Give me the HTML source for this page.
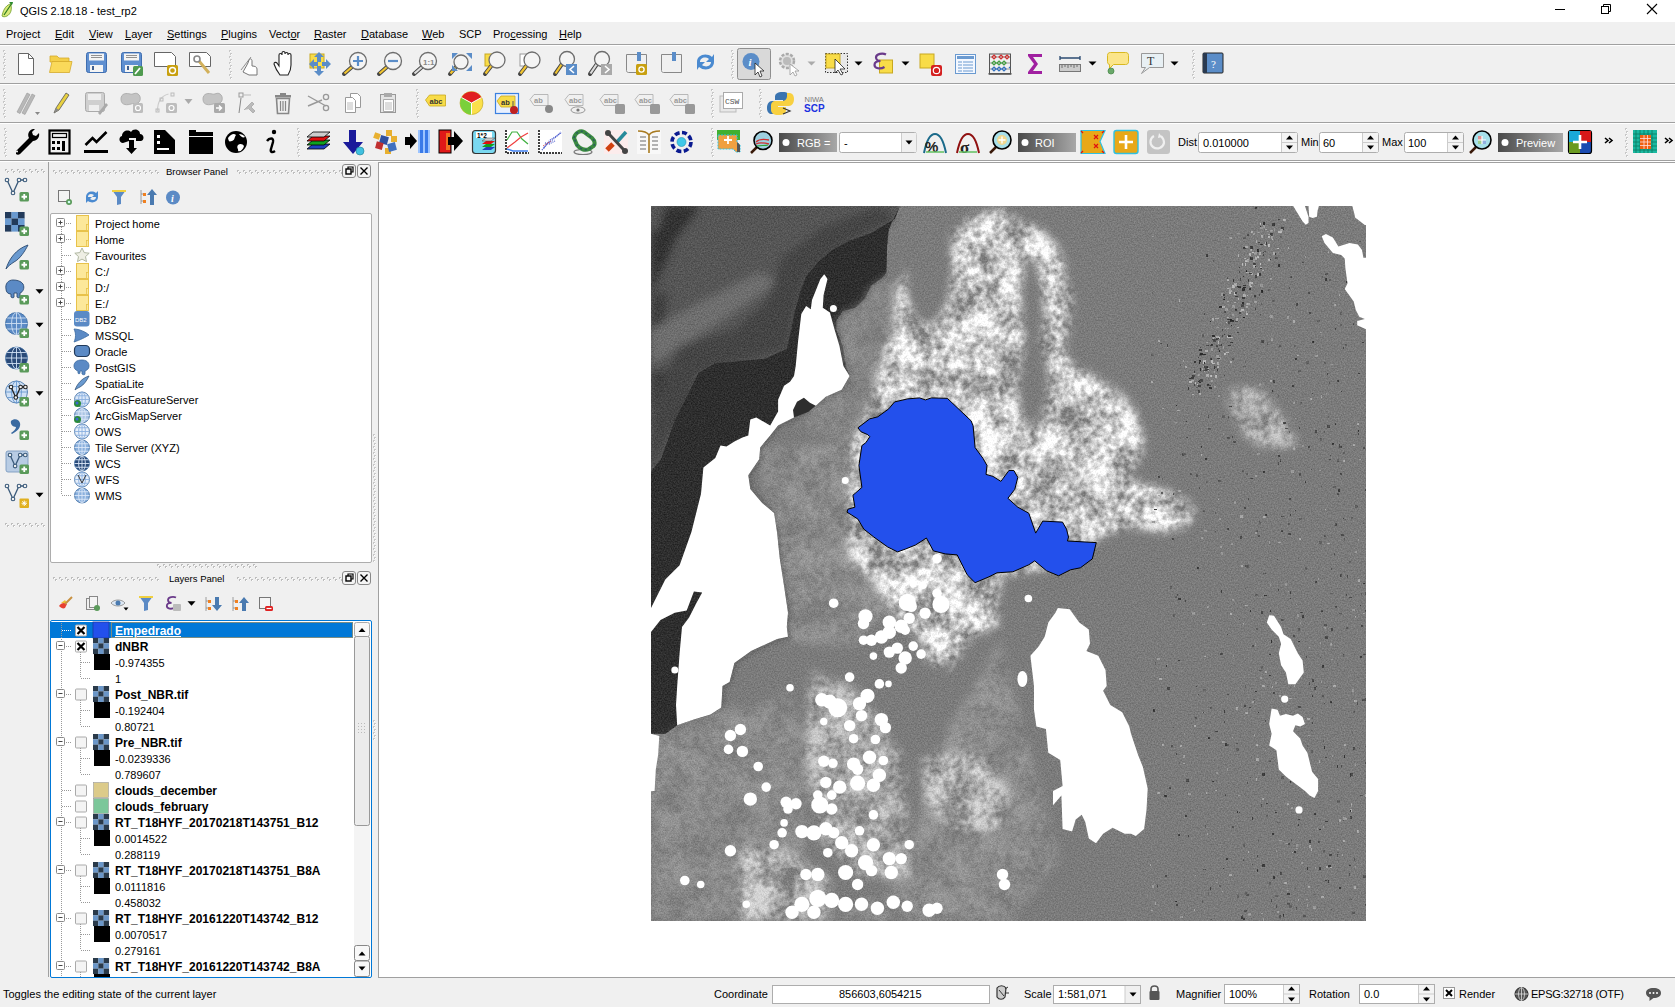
<!DOCTYPE html><html><head><meta charset="utf-8"><style>
*{margin:0;padding:0;box-sizing:border-box}
html,body{width:1675px;height:1007px;overflow:hidden;background:#f0f0f0;font-family:"Liberation Sans",sans-serif;font-size:11px;color:#000}
.a{position:absolute}
.t{position:absolute;white-space:nowrap;line-height:13px}
.b{font-weight:bold}
.hl{position:absolute;left:0;width:1675px;height:1px;background:#a0a0a0}
.box{position:absolute;background:#fff;border:1px solid #adadad;border-radius:2px}
u{text-decoration:none;border-bottom:1px solid #000;line-height:10px;display:inline-block}
</style></head><body>
<div class="a" style="left:0;top:0;width:1675px;height:22px;background:#fff"></div>
<div class="t" style="left:20px;top:5px;font-size:11px">QGIS 2.18.18 - test_rp2</div>
<div class="t" style="left:6px;top:28px">Pro<span style="text-decoration:underline;text-underline-offset:1px;text-decoration-skip-ink:none">j</span>ect</div>
<div class="t" style="left:55px;top:28px"><span style="text-decoration:underline;text-underline-offset:1px;text-decoration-skip-ink:none">E</span>dit</div>
<div class="t" style="left:89px;top:28px"><span style="text-decoration:underline;text-underline-offset:1px;text-decoration-skip-ink:none">V</span>iew</div>
<div class="t" style="left:125px;top:28px"><span style="text-decoration:underline;text-underline-offset:1px;text-decoration-skip-ink:none">L</span>ayer</div>
<div class="t" style="left:167px;top:28px"><span style="text-decoration:underline;text-underline-offset:1px;text-decoration-skip-ink:none">S</span>ettings</div>
<div class="t" style="left:221px;top:28px"><span style="text-decoration:underline;text-underline-offset:1px;text-decoration-skip-ink:none">P</span>lugins</div>
<div class="t" style="left:269px;top:28px">Vect<span style="text-decoration:underline;text-underline-offset:1px;text-decoration-skip-ink:none">o</span>r</div>
<div class="t" style="left:314px;top:28px"><span style="text-decoration:underline;text-underline-offset:1px;text-decoration-skip-ink:none">R</span>aster</div>
<div class="t" style="left:361px;top:28px"><span style="text-decoration:underline;text-underline-offset:1px;text-decoration-skip-ink:none">D</span>atabase</div>
<div class="t" style="left:422px;top:28px"><span style="text-decoration:underline;text-underline-offset:1px;text-decoration-skip-ink:none">W</span>eb</div>
<div class="t" style="left:459px;top:28px">SCP</div>
<div class="t" style="left:493px;top:28px">Pro<span style="text-decoration:underline;text-underline-offset:1px;text-decoration-skip-ink:none">c</span>essing</div>
<div class="t" style="left:559px;top:28px"><span style="text-decoration:underline;text-underline-offset:1px;text-decoration-skip-ink:none">H</span>elp</div>
<div class="hl" style="top:44px"></div><div class="a" style="left:0;top:45px;width:1675px;height:1px;background:#fff"></div>
<div class="hl" style="top:83px"></div><div class="a" style="left:0;top:84px;width:1675px;height:1px;background:#fff"></div>
<div class="hl" style="top:122px"></div><div class="a" style="left:0;top:123px;width:1675px;height:1px;background:#fff"></div>
<div class="hl" style="top:160px"></div><div class="a" style="left:0;top:161px;width:1675px;height:1px;background:#fff"></div>
<div class="a" style="left:48px;top:162px;width:1px;height:815px;background:#a0a0a0"></div>
<div class="a" style="left:378px;top:162px;width:1297px;height:816px;background:#fff;border-left:1px solid #a0a0a0;border-top:1px solid #a0a0a0;border-bottom:1px solid #a0a0a0"></div>
<svg class="a" style="left:0;top:0" width="1675" height="162"><rect x="3" y="50" width="2" height="2" fill="#c8c8c8"/><rect x="4" y="51" width="1" height="1" fill="#fff"/><rect x="4" y="53" width="2" height="2" fill="#c8c8c8"/><rect x="5" y="54" width="1" height="1" fill="#fff"/><rect x="3" y="56" width="2" height="2" fill="#c8c8c8"/><rect x="4" y="57" width="1" height="1" fill="#fff"/><rect x="4" y="59" width="2" height="2" fill="#c8c8c8"/><rect x="5" y="60" width="1" height="1" fill="#fff"/><rect x="3" y="62" width="2" height="2" fill="#c8c8c8"/><rect x="4" y="63" width="1" height="1" fill="#fff"/><rect x="4" y="65" width="2" height="2" fill="#c8c8c8"/><rect x="5" y="66" width="1" height="1" fill="#fff"/><rect x="3" y="68" width="2" height="2" fill="#c8c8c8"/><rect x="4" y="69" width="1" height="1" fill="#fff"/><rect x="4" y="71" width="2" height="2" fill="#c8c8c8"/><rect x="5" y="72" width="1" height="1" fill="#fff"/><rect x="3" y="74" width="2" height="2" fill="#c8c8c8"/><rect x="4" y="75" width="1" height="1" fill="#fff"/><rect x="4" y="77" width="2" height="2" fill="#c8c8c8"/><rect x="5" y="78" width="1" height="1" fill="#fff"/><path d="M18.5,53.5h10l5,5v16h-15z" fill="#fff" stroke="#666"/><path d="M28.5,53.5v5h5" fill="none" stroke="#666"/><path d="M50,56h7l2,2h10v4h-19z" fill="#f4cf48" stroke="#d4a92b" stroke-width="0.8"/><path d="M49.5,72.5l2.5,-11h20l-2.5,11z" fill="#fad95a" stroke="#d4a92b" stroke-width="0.8"/><rect x="86.5" y="52.5" width="20" height="20" rx="2" fill="#5f8fd0" stroke="#3f6eb0"/><rect x="89" y="53.5" width="15" height="7" fill="#f4f4f4"/><path d="M91,55.5h11M91,57.5h11" stroke="#777" stroke-width="0.8"/><rect x="90" y="65" width="13" height="7" fill="#f4f4f4"/><rect x="92" y="66" width="2" height="4" fill="#3f5f90"/><rect x="121.5" y="52.5" width="20" height="20" rx="2" fill="#5f8fd0" stroke="#3f6eb0"/><rect x="124" y="53.5" width="15" height="7" fill="#f4f4f4"/><path d="M126,55.5h11M126,57.5h11" stroke="#777" stroke-width="0.8"/><rect x="125" y="65" width="13" height="7" fill="#f4f4f4"/><rect x="127" y="66" width="2" height="4" fill="#3f5f90"/><rect x="133" y="66" width="10" height="10" rx="1.5" fill="#4f9a4f"/><path d="M135,74l5,-6" stroke="#fff" stroke-width="1.8"/><path d="M154.5,52.5h17l4,4v10h-21z" fill="#fff" stroke="#666"/><rect x="167" y="65" width="11" height="11" rx="1.5" fill="#c8a010"/><circle cx="172.5" cy="70.5" r="3" fill="none" stroke="#fff" stroke-width="1.4"/><path d="M189.5,52.5h17l4,4v10h-21z" fill="#fff" stroke="#666"/><path d="M199,61l10,12" stroke="#d2b05a" stroke-width="3"/><circle cx="197" cy="59" r="3" fill="none" stroke="#888" stroke-width="1.6"/><rect x="229" y="50" width="2" height="2" fill="#c8c8c8"/><rect x="230" y="51" width="1" height="1" fill="#fff"/><rect x="230" y="53" width="2" height="2" fill="#c8c8c8"/><rect x="231" y="54" width="1" height="1" fill="#fff"/><rect x="229" y="56" width="2" height="2" fill="#c8c8c8"/><rect x="230" y="57" width="1" height="1" fill="#fff"/><rect x="230" y="59" width="2" height="2" fill="#c8c8c8"/><rect x="231" y="60" width="1" height="1" fill="#fff"/><rect x="229" y="62" width="2" height="2" fill="#c8c8c8"/><rect x="230" y="63" width="1" height="1" fill="#fff"/><rect x="230" y="65" width="2" height="2" fill="#c8c8c8"/><rect x="231" y="66" width="1" height="1" fill="#fff"/><rect x="229" y="68" width="2" height="2" fill="#c8c8c8"/><rect x="230" y="69" width="1" height="1" fill="#fff"/><rect x="230" y="71" width="2" height="2" fill="#c8c8c8"/><rect x="231" y="72" width="1" height="1" fill="#fff"/><rect x="229" y="74" width="2" height="2" fill="#c8c8c8"/><rect x="230" y="75" width="1" height="1" fill="#fff"/><rect x="230" y="77" width="2" height="2" fill="#c8c8c8"/><rect x="231" y="78" width="1" height="1" fill="#fff"/><path d="M243,72c2,-4 5,-8 6,-12c1,-2 3,-1 3,1v5c3,0 5,1 5,3v6h-8z" fill="#fff" stroke="#777" stroke-width="1"/><path d="M241,70l10,-13" stroke="#777" stroke-width="0.8"/><path d="M280,75c-3,-4 -5,-8 -6,-11c0,-2 2,-2 3,-1l2,3v-11c0,-2 3,-2 3,0v-2c0,-2 3,-2 3,0v1c0,-2 3,-2 3,0v1c0,-2 3,-2 3,0v10c0,4 -1,7 -3,10z" fill="#fff" stroke="#222" stroke-width="1.1"/><rect x="310" y="54" width="14" height="14" fill="#f8dc48" stroke="#c8a820"/><path d="M319,52l5,5h-3v5h-4v-5h-3z M319,76l5,-5h-3v-5h-4v5h-3z M309,64l5,-5v3h4v4h-4v3z M331,64l-5,-5v3h-4v4h4v3z" fill="#5b8dc8"/><line x1="344" y1="74" x2="353" y2="66" stroke="#444" stroke-width="4" stroke-linecap="round"/><line x1="344.5" y1="73.5" x2="352.5" y2="66.5" stroke="#f2c531" stroke-width="2.2"/><circle cx="358" cy="61" r="8.5" fill="#f4f4f4" stroke="#6d6d6d" stroke-width="1.3"/><path d="M353,61h10M358,56v10" stroke="#5b8dc8" stroke-width="2.2"/><line x1="379" y1="74" x2="388" y2="66" stroke="#444" stroke-width="4" stroke-linecap="round"/><line x1="379.5" y1="73.5" x2="387.5" y2="66.5" stroke="#f2c531" stroke-width="2.2"/><circle cx="393" cy="61" r="8.5" fill="#f4f4f4" stroke="#6d6d6d" stroke-width="1.3"/><path d="M388,61h10" stroke="#5b8dc8" stroke-width="2.2"/><line x1="414" y1="74" x2="423" y2="66" stroke="#444" stroke-width="4" stroke-linecap="round"/><line x1="414.5" y1="73.5" x2="422.5" y2="66.5" stroke="#ddd" stroke-width="2.2"/><circle cx="428" cy="61" r="8.5" fill="#f4f4f4" stroke="#6d6d6d" stroke-width="1.3"/><text x="423" y="64.5" font-size="8" font-weight="bold" fill="#888" font-family="Liberation Sans">1:1</text><line x1="450" y1="74" x2="456" y2="67" stroke="#444" stroke-width="4" stroke-linecap="round"/><line x1="450.5" y1="73.5" x2="455.5" y2="67.5" stroke="#f2c531" stroke-width="2.2"/><circle cx="461" cy="62" r="7" fill="#f4f4f4" stroke="#6d6d6d" stroke-width="1.3"/><path d="M452,53h6l-6,6zM472,53h-6l6,6zM472,71h-6l6,-6zM452,71h6l-6,-6z" fill="#5b8dc8"/><rect x="485" y="54" width="8" height="12" fill="#f8dc48" stroke="#c8a820"/><line x1="485" y1="74" x2="492" y2="65" stroke="#444" stroke-width="4" stroke-linecap="round"/><line x1="485.5" y1="73.5" x2="491.5" y2="65.5" stroke="#f2c531" stroke-width="2.2"/><circle cx="497" cy="60" r="8" fill="#f4f4f4" stroke="#6d6d6d" stroke-width="1.3"/><rect x="520" y="54" width="8" height="12" fill="#fff" stroke="#999"/><line x1="520" y1="74" x2="527" y2="65" stroke="#444" stroke-width="4" stroke-linecap="round"/><line x1="520.5" y1="73.5" x2="526.5" y2="65.5" stroke="#f2c531" stroke-width="2.2"/><circle cx="532" cy="60" r="8" fill="#f4f4f4" stroke="#6d6d6d" stroke-width="1.3"/><line x1="555" y1="74" x2="562" y2="64" stroke="#444" stroke-width="4" stroke-linecap="round"/><line x1="555.5" y1="73.5" x2="561.5" y2="64.5" stroke="#f2c531" stroke-width="2.2"/><circle cx="567" cy="59" r="7.5" fill="#f4f4f4" stroke="#6d6d6d" stroke-width="1.3"/><rect x="566" y="64" width="11" height="11" fill="#5b8dc8"/><path d="M574,66l-4,3.5l4,3.5" stroke="#fff" stroke-width="1.6" fill="none"/><line x1="590" y1="74" x2="597" y2="64" stroke="#444" stroke-width="4" stroke-linecap="round"/><line x1="590.5" y1="73.5" x2="596.5" y2="64.5" stroke="#ddd" stroke-width="2.2"/><circle cx="602" cy="59" r="7.5" fill="#f4f4f4" stroke="#6d6d6d" stroke-width="1.3"/><rect x="601" y="64" width="11" height="11" fill="#aaa"/><path d="M605,66l4,3.5l-4,3.5" stroke="#fff" stroke-width="1.6" fill="none"/><path d="M626.5,54.5h20v18h-18c-2,0 -2,-2 -2,-2z" fill="#f0f0f0" stroke="#888"/><rect x="637" y="52" width="4" height="9" fill="#5b8dc8"/><rect x="636" y="64" width="11" height="11" rx="1.5" fill="#c8a010"/><circle cx="641.5" cy="69.5" r="2.6" fill="none" stroke="#fff" stroke-width="1.3"/><path d="M661.5,54.5h20v18h-18c-2,0 -2,-2 -2,-2z" fill="#f0f0f0" stroke="#888"/><rect x="672" y="52" width="4" height="9" fill="#5b8dc8"/><path d="M697,62c0,-7 9,-10 15,-5l2,-3v8h-8l3,-3c-4,-3 -9,-1 -9,3z M714,62c0,7 -9,10 -15,5l-2,3v-8h8l-3,3c4,3 9,1 9,-3z" fill="#4a8ad0"/><rect x="731" y="50" width="2" height="2" fill="#c8c8c8"/><rect x="732" y="51" width="1" height="1" fill="#fff"/><rect x="732" y="53" width="2" height="2" fill="#c8c8c8"/><rect x="733" y="54" width="1" height="1" fill="#fff"/><rect x="731" y="56" width="2" height="2" fill="#c8c8c8"/><rect x="732" y="57" width="1" height="1" fill="#fff"/><rect x="732" y="59" width="2" height="2" fill="#c8c8c8"/><rect x="733" y="60" width="1" height="1" fill="#fff"/><rect x="731" y="62" width="2" height="2" fill="#c8c8c8"/><rect x="732" y="63" width="1" height="1" fill="#fff"/><rect x="732" y="65" width="2" height="2" fill="#c8c8c8"/><rect x="733" y="66" width="1" height="1" fill="#fff"/><rect x="731" y="68" width="2" height="2" fill="#c8c8c8"/><rect x="732" y="69" width="1" height="1" fill="#fff"/><rect x="732" y="71" width="2" height="2" fill="#c8c8c8"/><rect x="733" y="72" width="1" height="1" fill="#fff"/><rect x="731" y="74" width="2" height="2" fill="#c8c8c8"/><rect x="732" y="75" width="1" height="1" fill="#fff"/><rect x="732" y="77" width="2" height="2" fill="#c8c8c8"/><rect x="733" y="78" width="1" height="1" fill="#fff"/><rect x="737.5" y="48.5" width="33" height="31" rx="2" fill="#d9d9d9" stroke="#8f8f8f"/><circle cx="751" cy="61.5" r="8.5" fill="#5b8dc8"/><text x="748.5" y="66" font-size="11" font-style="italic" font-weight="bold" fill="#fff" font-family="Liberation Serif">i</text><path d="M755,63l0,12l3,-3l2,5l2,-1l-2,-5h4z" fill="#fff" stroke="#222" stroke-width="0.8"/><circle cx="787" cy="61" r="7" fill="#e0e0e0" stroke="#aaa" stroke-width="2.5" stroke-dasharray="3 1.5"/><circle cx="787" cy="61" r="4" fill="#bbb"/><path d="M790,64l0,11l3,-3l2,4l2,-1l-2,-4h4z" fill="#fff" stroke="#999" stroke-width="0.8"/><path d="M807.5,61.5h8l-4.0,4z" fill="#aaa"/><rect x="825.5" y="53.5" width="22" height="19" fill="#e8e8e8" stroke="#333" stroke-dasharray="1.5 1.5"/><rect x="826" y="54" width="14" height="14" fill="#f8dc48" stroke="#c8a820"/><path d="M835,59l0,14l3,-3l3,5l2,-1l-3,-5h5z" fill="#fff" stroke="#222" stroke-width="0.8"/><path d="M854.5,61.5h8l-4.0,4z" fill="#000"/><rect x="879.5" y="60" width="13" height="13" fill="#f8dc48" stroke="#c8a820"/><path d="M886,54.5c-3,-1.5 -10,-1 -10,3c0,2 2,3.5 4.5,3.5c-3.5,0 -6,1.5 -6,4c0,3.5 6,4.5 10,2" fill="none" stroke="#6a3a8a" stroke-width="2.2"/><path d="M901.5,61.5h8l-4.0,4z" fill="#000"/><rect x="920" y="54" width="14" height="14" fill="#f8dc48" stroke="#c8a820"/><rect x="931" y="65" width="11" height="11" rx="2" fill="#d42020"/><circle cx="936.5" cy="70.5" r="3.2" fill="none" stroke="#fff" stroke-width="1.2"/><rect x="955.5" y="54.5" width="20" height="19" fill="#f4f8ff" stroke="#6a9ad0"/><rect x="957" y="56" width="17" height="3" fill="#6a9ad0"/><path d="M958,62h4M963,62h10M958,65h4M963,65h10M958,68h4M963,68h10M958,71h4M963,71h10" stroke="#6a9ad0" stroke-width="1"/><rect x="989.5" y="54" width="21" height="20" fill="none" stroke="#555"/><rect x="988.5" y="73" width="23" height="1.6" fill="#555"/><path d="M990,57h20M990,63h20M990,69h20" stroke="#999"/><g fill="none" stroke-width="1.2"><path d="M994,55l2,2l-2,2l-2,-2zM1001,55l2,2l-2,2l-2,-2zM1007,55l2,2l-2,2l-2,-2z" stroke="#d03030"/><path d="M994,61l2,2l-2,2l-2,-2zM999,61l2,2l-2,2l-2,-2zM1004,61l2,2l-2,2l-2,-2z" stroke="#40a040"/><path d="M994,67l2,2l-2,2l-2,-2zM999,67l2,2l-2,2l-2,-2zM1004,67l2,2l-2,2l-2,-2zM1009,67l1,1" stroke="#3070c0"/></g><path d="M1028,54h14v3h-9l5,7l-5,7h9v3h-14v-2l6,-8l-6,-8z" fill="#a020a0"/><path d="M1060,58h20M1060,56v4M1080,56v4" stroke="#2a4a70" stroke-width="1.3"/><rect x="1059.5" y="64.5" width="21" height="7" fill="#ccc" stroke="#777"/><path d="M1062,65v3M1065,65v2M1068,65v3M1071,65v2M1074,65v3M1077,65v2" stroke="#555" stroke-width="0.8"/><path d="M1088.5,61.5h8l-4.0,4z" fill="#000"/><path d="M1107.5,55.5c0,-2 1,-3 3,-3h15c2,0 3,1 3,3v6c0,2 -1,3 -3,3h-12l-4,4v-4c-1,0 -2,-1 -2,-3z" fill="#fbe58a" stroke="#d8b820"/><circle cx="1111" cy="71" r="3" fill="#6aa86a" stroke="#4a8a4a" stroke-width="0.8"/><path d="M1141.5,53.5h22v14h-14l-8,6l4,-6h-4z" fill="#e8f0f4" stroke="#999"/><text x="1147" y="65" font-size="12" font-family="Liberation Serif" fill="#333">T</text><path d="M1170.5,61.5h8l-4.0,4z" fill="#000"/><rect x="1192" y="50" width="2" height="2" fill="#c8c8c8"/><rect x="1193" y="51" width="1" height="1" fill="#fff"/><rect x="1193" y="53" width="2" height="2" fill="#c8c8c8"/><rect x="1194" y="54" width="1" height="1" fill="#fff"/><rect x="1192" y="56" width="2" height="2" fill="#c8c8c8"/><rect x="1193" y="57" width="1" height="1" fill="#fff"/><rect x="1193" y="59" width="2" height="2" fill="#c8c8c8"/><rect x="1194" y="60" width="1" height="1" fill="#fff"/><rect x="1192" y="62" width="2" height="2" fill="#c8c8c8"/><rect x="1193" y="63" width="1" height="1" fill="#fff"/><rect x="1193" y="65" width="2" height="2" fill="#c8c8c8"/><rect x="1194" y="66" width="1" height="1" fill="#fff"/><rect x="1192" y="68" width="2" height="2" fill="#c8c8c8"/><rect x="1193" y="69" width="1" height="1" fill="#fff"/><rect x="1193" y="71" width="2" height="2" fill="#c8c8c8"/><rect x="1194" y="72" width="1" height="1" fill="#fff"/><rect x="1192" y="74" width="2" height="2" fill="#c8c8c8"/><rect x="1193" y="75" width="1" height="1" fill="#fff"/><rect x="1193" y="77" width="2" height="2" fill="#c8c8c8"/><rect x="1194" y="78" width="1" height="1" fill="#fff"/><rect x="1203" y="53" width="20" height="20" rx="1" fill="#5b8dc8" stroke="#222" stroke-width="1"/><rect x="1203" y="53" width="4" height="20" fill="#2a3a50"/><text x="1211" y="68" font-size="11" fill="#fff" font-family="Liberation Serif">?</text><rect x="3" y="89" width="2" height="2" fill="#c8c8c8"/><rect x="4" y="90" width="1" height="1" fill="#fff"/><rect x="4" y="92" width="2" height="2" fill="#c8c8c8"/><rect x="5" y="93" width="1" height="1" fill="#fff"/><rect x="3" y="95" width="2" height="2" fill="#c8c8c8"/><rect x="4" y="96" width="1" height="1" fill="#fff"/><rect x="4" y="98" width="2" height="2" fill="#c8c8c8"/><rect x="5" y="99" width="1" height="1" fill="#fff"/><rect x="3" y="101" width="2" height="2" fill="#c8c8c8"/><rect x="4" y="102" width="1" height="1" fill="#fff"/><rect x="4" y="104" width="2" height="2" fill="#c8c8c8"/><rect x="5" y="105" width="1" height="1" fill="#fff"/><rect x="3" y="107" width="2" height="2" fill="#c8c8c8"/><rect x="4" y="108" width="1" height="1" fill="#fff"/><rect x="4" y="110" width="2" height="2" fill="#c8c8c8"/><rect x="5" y="111" width="1" height="1" fill="#fff"/><rect x="3" y="113" width="2" height="2" fill="#c8c8c8"/><rect x="4" y="114" width="1" height="1" fill="#fff"/><rect x="4" y="116" width="2" height="2" fill="#c8c8c8"/><rect x="5" y="117" width="1" height="1" fill="#fff"/><path d="M17,112l10,-19l3,1.5l-10,19zM22,113l10,-19l3,1.5l-10,19z" fill="#b8b8b8" stroke="#999" stroke-width="0.6"/><path d="M35.0,112.0h5l-2.5,3z" fill="#888"/><path d="M54,113l2,-5l10,-15l3,2l-10,15z" fill="#e8d040" stroke="#555" stroke-width="0.8"/><path d="M54,113l2,-5l3,2z" fill="#888"/><rect x="85.5" y="92.5" width="19" height="19" rx="2" fill="#cfcfcf" stroke="#aaa"/><rect x="88" y="94" width="13" height="6" fill="#eee"/><rect x="89" y="105" width="10" height="6" fill="#eee"/><path d="M98,113l8,-10l2,2l-8,10z" fill="#aaa"/><path d="M121,99c0,-6 6,-6 9,-5c3,1 5,-2 8,0c3,2 3,7 0,9c-2,1 -5,0 -7,1c-3,1 -10,2 -10,-5z" fill="#c4c4c4" stroke="#b0b0b0"/><rect x="133" y="103" width="10" height="10" rx="1.5" fill="#bdbdbd"/><circle cx="138" cy="108" r="2.5" fill="none" stroke="#fff" stroke-width="1.2"/><path d="M157.5,111c0,-8 3,-15 11,-17" fill="none" stroke="#ccc" stroke-width="1.2"/><rect x="156" y="109" width="3" height="3" fill="none" stroke="#bbb"/><rect x="160" y="98" width="3" height="3" fill="none" stroke="#bbb"/><rect x="171" y="93" width="3" height="3" fill="none" stroke="#bbb"/><rect x="166" y="103" width="11" height="10" rx="1.5" fill="#bdbdbd"/><circle cx="171.5" cy="108" r="2.5" fill="none" stroke="#fff" stroke-width="1.2"/><path d="M184.5,99.0h8l-4.0,5z" fill="#aaa"/><path d="M203,99c0,-6 6,-6 9,-5c3,1 5,-2 8,0c3,2 3,7 0,9c-2,1 -5,0 -7,1c-3,1 -10,2 -10,-5z" fill="#c4c4c4" stroke="#b0b0b0"/><rect x="214" y="103" width="11" height="10" rx="1.5" fill="#aaa"/><path d="M216,108h5M219,105.5l2.5,2.5l-2.5,2.5" stroke="#fff" stroke-width="1.5" fill="none"/><rect x="239" y="93" width="4" height="4" fill="none" stroke="#999"/><path d="M243,95h8" stroke="#bbb"/><path d="M239,113l2,-15" stroke="#888"/><path d="M244,110l8,-8l2,2l-3,3l4,4l-2,2l-4,-4" fill="#bbb" stroke="#999" stroke-width="0.6"/><rect x="275" y="95" width="16" height="2.5" fill="#888"/><rect x="280" y="93" width="6" height="2" fill="#888"/><path d="M276.5,98.5h13l-1,15h-11z" fill="none" stroke="#888" stroke-width="1.6"/><path d="M280.5,101v10M283,101v10M285.5,101v10" stroke="#888" stroke-width="1.2"/><path d="M308,96l18,10M308,106l14,-6" stroke="#999" stroke-width="1.4"/><circle cx="326" cy="97" r="2.6" fill="none" stroke="#999" stroke-width="1.3"/><circle cx="326" cy="108" r="2.6" fill="none" stroke="#999" stroke-width="1.3"/><path d="M350.5,93.5h7l3,3v11h-10z" fill="#fff" stroke="#999"/><path d="M345.5,97.5h7l3,3v12h-10z" fill="#fff" stroke="#999"/><path d="M347,103h6M347,105h6M347,107h6M347,109h6" stroke="#aaa" stroke-width="0.8"/><rect x="380.5" y="94.5" width="15" height="18" fill="#e4e4e4" stroke="#999"/><rect x="384" y="93" width="8" height="4" fill="#aaa"/><path d="M383.5,99.5h10v12h-10z" fill="#fff" stroke="#aaa"/><path d="M385,103h7M385,105h7M385,107h7M385,109h7" stroke="#aaa" stroke-width="0.8"/><rect x="416" y="89" width="2" height="2" fill="#c8c8c8"/><rect x="417" y="90" width="1" height="1" fill="#fff"/><rect x="417" y="92" width="2" height="2" fill="#c8c8c8"/><rect x="418" y="93" width="1" height="1" fill="#fff"/><rect x="416" y="95" width="2" height="2" fill="#c8c8c8"/><rect x="417" y="96" width="1" height="1" fill="#fff"/><rect x="417" y="98" width="2" height="2" fill="#c8c8c8"/><rect x="418" y="99" width="1" height="1" fill="#fff"/><rect x="416" y="101" width="2" height="2" fill="#c8c8c8"/><rect x="417" y="102" width="1" height="1" fill="#fff"/><rect x="417" y="104" width="2" height="2" fill="#c8c8c8"/><rect x="418" y="105" width="1" height="1" fill="#fff"/><rect x="416" y="107" width="2" height="2" fill="#c8c8c8"/><rect x="417" y="108" width="1" height="1" fill="#fff"/><rect x="417" y="110" width="2" height="2" fill="#c8c8c8"/><rect x="418" y="111" width="1" height="1" fill="#fff"/><rect x="416" y="113" width="2" height="2" fill="#c8c8c8"/><rect x="417" y="114" width="1" height="1" fill="#fff"/><rect x="417" y="116" width="2" height="2" fill="#c8c8c8"/><rect x="418" y="117" width="1" height="1" fill="#fff"/><path d="M425.5,100.0l4,-5h16v11h-16z" fill="#f8dc48" stroke="#c8a820" stroke-width="0.8"/><text x="429.5" y="103.5" font-size="7.5" font-weight="bold" fill="#333" font-family="Liberation Sans">abc</text><circle cx="471.5" cy="103" r="11.5" fill="#fbe04a" stroke="#b8a020" stroke-width="0.6"/><path d="M471.5,103l-10,-5.5a11.5,11.5 0 0 1 20,0z" fill="#e02020"/><path d="M471.5,103l-10,-5.5a11.5,11.5 0 0 0 10,17z" fill="#7ad03a"/><path d="M471.5,103v11.5M471.5,103l-10,-5.5M471.5,103l10,-5.5" stroke="#fff" stroke-width="1"/><rect x="495.5" y="93.5" width="23" height="20" fill="#e8f0ff" stroke="#3a80e0" stroke-width="1.2"/><path d="M497,101.0l4,-5h14v11h-14z" fill="#f8dc48" stroke="#c8a820" stroke-width="0.8"/><text x="501" y="104.5" font-size="7.5" font-weight="bold" fill="#333" font-family="Liberation Sans">ab</text><circle cx="514" cy="110" r="4" fill="#c02020"/><path d="M513,101v6" stroke="#555"/><path d="M530,99.5l4,-5h14v11h-14z" fill="#f0f0f0" stroke="#aaa" stroke-width="0.8"/><text x="534" y="103" font-size="7.5" font-weight="bold" fill="#999" font-family="Liberation Sans">ab</text><circle cx="549" cy="109" r="4" fill="#888"/><path d="M565,99.5l4,-5h14v11h-14z" fill="#f0f0f0" stroke="#aaa" stroke-width="0.8"/><text x="569" y="103" font-size="7.5" font-weight="bold" fill="#999" font-family="Liberation Sans">abc</text><ellipse cx="578" cy="110" rx="7" ry="3.2" fill="none" stroke="#999"/><circle cx="578" cy="110" r="1.6" fill="#777"/><path d="M600,99.5l4,-5h14v11h-14z" fill="#f0f0f0" stroke="#aaa" stroke-width="0.8"/><text x="604" y="103" font-size="7.5" font-weight="bold" fill="#999" font-family="Liberation Sans">abc</text><rect x="615" y="104" width="10" height="10" rx="1.5" fill="#999"/><path d="M635,99.5l4,-5h14v11h-14z" fill="#f0f0f0" stroke="#aaa" stroke-width="0.8"/><text x="639" y="103" font-size="7.5" font-weight="bold" fill="#999" font-family="Liberation Sans">abc</text><rect x="650" y="104" width="10" height="10" rx="1.5" fill="#999"/><path d="M670,99.5l4,-5h14v11h-14z" fill="#f0f0f0" stroke="#aaa" stroke-width="0.8"/><text x="674" y="103" font-size="7.5" font-weight="bold" fill="#999" font-family="Liberation Sans">abc</text><rect x="685" y="104" width="10" height="10" rx="1.5" fill="#999"/><rect x="711" y="89" width="2" height="2" fill="#c8c8c8"/><rect x="712" y="90" width="1" height="1" fill="#fff"/><rect x="712" y="92" width="2" height="2" fill="#c8c8c8"/><rect x="713" y="93" width="1" height="1" fill="#fff"/><rect x="711" y="95" width="2" height="2" fill="#c8c8c8"/><rect x="712" y="96" width="1" height="1" fill="#fff"/><rect x="712" y="98" width="2" height="2" fill="#c8c8c8"/><rect x="713" y="99" width="1" height="1" fill="#fff"/><rect x="711" y="101" width="2" height="2" fill="#c8c8c8"/><rect x="712" y="102" width="1" height="1" fill="#fff"/><rect x="712" y="104" width="2" height="2" fill="#c8c8c8"/><rect x="713" y="105" width="1" height="1" fill="#fff"/><rect x="711" y="107" width="2" height="2" fill="#c8c8c8"/><rect x="712" y="108" width="1" height="1" fill="#fff"/><rect x="712" y="110" width="2" height="2" fill="#c8c8c8"/><rect x="713" y="111" width="1" height="1" fill="#fff"/><rect x="711" y="113" width="2" height="2" fill="#c8c8c8"/><rect x="712" y="114" width="1" height="1" fill="#fff"/><rect x="712" y="116" width="2" height="2" fill="#c8c8c8"/><rect x="713" y="117" width="1" height="1" fill="#fff"/><rect x="720" y="96" width="16" height="16" fill="#e8e8e8" stroke="#bbb"/><rect x="723.5" y="92.5" width="19" height="16" fill="#fff" stroke="#aaa"/><text x="725" y="104" font-size="8" fill="#555" font-family="Liberation Mono">CSW</text><rect x="759" y="89" width="2" height="2" fill="#c8c8c8"/><rect x="760" y="90" width="1" height="1" fill="#fff"/><rect x="760" y="92" width="2" height="2" fill="#c8c8c8"/><rect x="761" y="93" width="1" height="1" fill="#fff"/><rect x="759" y="95" width="2" height="2" fill="#c8c8c8"/><rect x="760" y="96" width="1" height="1" fill="#fff"/><rect x="760" y="98" width="2" height="2" fill="#c8c8c8"/><rect x="761" y="99" width="1" height="1" fill="#fff"/><rect x="759" y="101" width="2" height="2" fill="#c8c8c8"/><rect x="760" y="102" width="1" height="1" fill="#fff"/><rect x="760" y="104" width="2" height="2" fill="#c8c8c8"/><rect x="761" y="105" width="1" height="1" fill="#fff"/><rect x="759" y="107" width="2" height="2" fill="#c8c8c8"/><rect x="760" y="108" width="1" height="1" fill="#fff"/><rect x="760" y="110" width="2" height="2" fill="#c8c8c8"/><rect x="761" y="111" width="1" height="1" fill="#fff"/><rect x="759" y="113" width="2" height="2" fill="#c8c8c8"/><rect x="760" y="114" width="1" height="1" fill="#fff"/><rect x="760" y="116" width="2" height="2" fill="#c8c8c8"/><rect x="761" y="117" width="1" height="1" fill="#fff"/><path d="M780,92c-6,0 -8,2 -8,5v3h8v1h-11c-3,0 -5,3 -5,7c0,4 2,6 5,6h2v-3c0,-3 2,-5 5,-5h7c2,0 4,-2 4,-4v-5c0,-3 -3,-5 -7,-5z" fill="#3a74b0" transform="translate(3,0)"/><path d="M781,115c6,0 8,-2 8,-5v-3h-8v-1h11c3,0 5,-3 5,-7c0,-4 -2,-6 -5,-6h-2v3c0,3 -2,5 -5,5h-7c-2,0 -4,2 -4,4v5c0,3 3,5 7,5z" fill="#f8d040" transform="translate(-3,0)"/><path d="M783,108l7,3l-7,3" fill="none" stroke="#333" stroke-width="1.2"/><text x="804.5" y="101.5" font-size="7.5" fill="#777" font-family="Liberation Sans">NIWA</text><text x="804" y="111.5" font-size="10" font-weight="bold" fill="#1a30e0" font-family="Liberation Sans">SCP</text><rect x="4" y="128" width="2" height="2" fill="#c8c8c8"/><rect x="5" y="129" width="1" height="1" fill="#fff"/><rect x="5" y="131" width="2" height="2" fill="#c8c8c8"/><rect x="6" y="132" width="1" height="1" fill="#fff"/><rect x="4" y="134" width="2" height="2" fill="#c8c8c8"/><rect x="5" y="135" width="1" height="1" fill="#fff"/><rect x="5" y="137" width="2" height="2" fill="#c8c8c8"/><rect x="6" y="138" width="1" height="1" fill="#fff"/><rect x="4" y="140" width="2" height="2" fill="#c8c8c8"/><rect x="5" y="141" width="1" height="1" fill="#fff"/><rect x="5" y="143" width="2" height="2" fill="#c8c8c8"/><rect x="6" y="144" width="1" height="1" fill="#fff"/><rect x="4" y="146" width="2" height="2" fill="#c8c8c8"/><rect x="5" y="147" width="1" height="1" fill="#fff"/><rect x="5" y="149" width="2" height="2" fill="#c8c8c8"/><rect x="6" y="150" width="1" height="1" fill="#fff"/><rect x="4" y="152" width="2" height="2" fill="#c8c8c8"/><rect x="5" y="153" width="1" height="1" fill="#fff"/><rect x="5" y="155" width="2" height="2" fill="#c8c8c8"/><rect x="6" y="156" width="1" height="1" fill="#fff"/><path d="M16,151l13,-13c-2,-4 0,-8 4,-9l2,0l-3,3l1,3l3,1l3,-3c1,4 -2,8 -6,8l-13,13c-1,1 -3,1 -4,0z" fill="#000"/><circle cx="17" cy="151.5" r="1" fill="#fff"/><rect x="49.5" y="130.5" width="20" height="23" fill="none" stroke="#000" stroke-width="2.2"/><rect x="52.5" y="133.5" width="14" height="4" fill="none" stroke="#000" stroke-width="1.2"/><g fill="#000"><rect x="52" y="141" width="3" height="3"/><rect x="57" y="141" width="3" height="3"/><rect x="62" y="141" width="3" height="10"/><rect x="52" y="147" width="3" height="3"/><rect x="57" y="147" width="3" height="3"/></g><path d="M85.5,145l7,-7l4,4l10,-10" fill="none" stroke="#000" stroke-width="2.6"/><rect x="84" y="150" width="24" height="3" fill="#000"/><path d="M123,143c-4,0 -5,-6 -1,-7c0,-5 6,-7 9,-4c2,-4 9,-3 9,2c4,0 5,6 1,7h-5v-3h-7v3z" fill="#000"/><path d="M129,140h5v8h3l-5.5,6l-5.5,-6h3z" fill="#000"/><path d="M154,130h11l10,10v14h-21z" fill="#000"/><rect x="157" y="135" width="3" height="3" fill="#fff"/><rect x="157" y="141" width="3" height="3" fill="#fff"/><rect x="157" y="148" width="12" height="2" fill="#fff"/><path d="M165,130l0,10h10z" fill="#fff" opacity="0"/><path d="M189,130h7v2h17v4h-24z M189,137h24v17h-24z" fill="#000"/><circle cx="236" cy="142" r="11" fill="#000"/><path d="M228,138c3,-4 6,-5 8,-3c-2,3 -1,5 -4,6c-2,0 -3,2 -4,-3z M238,145c2,-2 5,-1 6,1c-1,4 -4,6 -6,5c1,-2 -2,-3 0,-6z M239,134c2,0 5,1 6,3c-2,1 -4,0 -6,-3z" fill="#fff"/><circle cx="274" cy="132" r="2.2" fill="#000"/><path d="M267,141c2,-3 7,-4 6,1l-2,7c-1,3 1,4 4,2" fill="none" stroke="#000" stroke-width="2.4"/><rect x="297" y="128" width="2" height="2" fill="#c8c8c8"/><rect x="298" y="129" width="1" height="1" fill="#fff"/><rect x="298" y="131" width="2" height="2" fill="#c8c8c8"/><rect x="299" y="132" width="1" height="1" fill="#fff"/><rect x="297" y="134" width="2" height="2" fill="#c8c8c8"/><rect x="298" y="135" width="1" height="1" fill="#fff"/><rect x="298" y="137" width="2" height="2" fill="#c8c8c8"/><rect x="299" y="138" width="1" height="1" fill="#fff"/><rect x="297" y="140" width="2" height="2" fill="#c8c8c8"/><rect x="298" y="141" width="1" height="1" fill="#fff"/><rect x="298" y="143" width="2" height="2" fill="#c8c8c8"/><rect x="299" y="144" width="1" height="1" fill="#fff"/><rect x="297" y="146" width="2" height="2" fill="#c8c8c8"/><rect x="298" y="147" width="1" height="1" fill="#fff"/><rect x="298" y="149" width="2" height="2" fill="#c8c8c8"/><rect x="299" y="150" width="1" height="1" fill="#fff"/><rect x="297" y="152" width="2" height="2" fill="#c8c8c8"/><rect x="298" y="153" width="1" height="1" fill="#fff"/><rect x="298" y="155" width="2" height="2" fill="#c8c8c8"/><rect x="299" y="156" width="1" height="1" fill="#fff"/><path d="M307,149l6,-5h17l-6,5z" fill="#2040c0" stroke="#000" stroke-width="0.8"/><path d="M307,145l6,-5h17l-6,5z" fill="#10a020" stroke="#000" stroke-width="0.8"/><path d="M307,141l6,-5h17l-6,5z" fill="#e01010" stroke="#000" stroke-width="0.8"/><path d="M307,137l6,-5h17l-6,5z" fill="#ccc" stroke="#000" stroke-width="0.8"/><path d="M349,130h7v12h7l-10,12l-10,-12h6z" fill="#1a1a9a"/><circle cx="360" cy="151" r="4" fill="#40c0e0" stroke="#208090" stroke-width="0.6"/><g><rect x="374" y="133" width="6" height="6" fill="#e8b030" transform="rotate(20 377 136)"/><rect x="386" y="130" width="6" height="6" fill="#e8b030"/><rect x="391" y="136" width="6" height="6" fill="#e8b030"/><rect x="385" y="148" width="6" height="6" fill="#e8b030"/><rect x="380" y="136" width="8" height="8" fill="#3050a0" transform="rotate(15 384 140)"/><rect x="376" y="142" width="7" height="7" fill="#c03030" transform="rotate(15 379 145)"/><rect x="388" y="143" width="8" height="8" fill="#4070c0" transform="rotate(-15 392 147)"/></g><path d="M405,137h5v-4l7,8l-7,8v-4h-5z" fill="#000"/><rect x="418" y="130" width="12" height="23" fill="#9cc4ff"/><rect x="420" y="130" width="3" height="23" fill="#3a7ae8"/><rect x="425" y="130" width="3" height="23" fill="#3a7ae8"/><rect x="439" y="130" width="12" height="23" fill="#e01818" stroke="#000" stroke-width="1"/><rect x="446" y="133" width="4" height="17" fill="#f07020"/><path d="M448,137h6v-6l9,10l-9,10v-6h-6z" fill="#000"/><rect x="472.5" y="130.5" width="23" height="23" rx="3" fill="#7ad8f0" stroke="#333" stroke-width="1.2"/><rect x="476" y="132" width="16" height="6" fill="#fff"/><text x="477" y="137.8" font-size="6.5" font-weight="bold" font-family="Liberation Sans">1*2</text><path d="M482,150l4,-3h9l-4,3z" fill="#2040c0"/><path d="M482,147l4,-3h9l-4,3z" fill="#10a020"/><path d="M482,144l4,-3h9l-4,3z" fill="#e01010"/><path d="M482,141l4,-3h9l-4,3z" fill="#ccc" stroke="#444" stroke-width="0.5"/><rect x="505" y="130" width="24" height="23" fill="#fff"/><path d="M506,130v23h23" stroke="#000" stroke-width="1.5" fill="none" stroke-dasharray="2 1"/><path d="M507,140l5,-8l5,0l5,7l6,5" fill="none" stroke="#40b040" stroke-width="1.2"/><path d="M507,148l8,-6l6,-5l7,-4" fill="none" stroke="#f04040" stroke-width="1.2"/><path d="M507,149l6,2h15" fill="none" stroke="#4080f0" stroke-width="1.5"/><rect x="538" y="130" width="24" height="23" fill="#fff"/><path d="M539,130v23h23" stroke="#000" stroke-width="1.5" fill="none" stroke-dasharray="2 1"/><path d="M542,150l5,-6l4,-3l5,-4l5,-5M544,148l6,-8l5,-3l6,-4M545,143l4,1l6,-3" stroke="#5060d0" stroke-width="1.3" fill="none" stroke-dasharray="1 1"/><path d="M543,146l8,-5" stroke="#d04040" stroke-width="1" stroke-dasharray="1 1"/><ellipse cx="583" cy="152" rx="9" ry="2.5" fill="none" stroke="#777" stroke-width="1.2"/><path d="M574,138c1,-5 6,-8 10,-6l8,6c3,3 4,7 0,9l-3,2c-4,2 -9,0 -12,-4z" fill="none" stroke="#3a8a40" stroke-width="4"/><path d="M574,138c1,-5 6,-8 10,-6l8,6c3,3 4,7 0,9l-3,2c-4,2 -9,0 -12,-4z" fill="none" stroke="#2a5a60" stroke-width="1.5" stroke-dasharray="2 3"/><rect x="604" y="130" width="24" height="24" fill="#fcecec"/><path d="M617,142l9,-10" stroke="#2a8a9a" stroke-width="3.5"/><path d="M607,150l6,-6" stroke="#d04010" stroke-width="5"/><path d="M608,133l16,17" stroke="#444" stroke-width="3"/><circle cx="608" cy="133" r="3" fill="#444"/><circle cx="625" cy="151" r="3" fill="#444"/><rect x="637" y="130" width="24" height="24" fill="#f8f8f8"/><path d="M638,131c5,0 9,1 11,4M660,131c-5,0 -9,1 -11,4M649,134v19" stroke="#a87a20" stroke-width="1.6" fill="none"/><path d="M640,137h6M640,141h6M640,145h6M640,149h6M652,137h6M652,141h6M652,145h6M652,149h6" stroke="#999" stroke-width="1.3"/><circle cx="681.5" cy="142" r="9.5" fill="none" stroke="#0a1a90" stroke-width="3.6" stroke-dasharray="5 2.5"/><circle cx="681.5" cy="142" r="4.5" fill="#40c8e8" stroke="#2090b0" stroke-width="0.6"/><rect x="711" y="128" width="2" height="2" fill="#c8c8c8"/><rect x="712" y="129" width="1" height="1" fill="#fff"/><rect x="712" y="131" width="2" height="2" fill="#c8c8c8"/><rect x="713" y="132" width="1" height="1" fill="#fff"/><rect x="711" y="134" width="2" height="2" fill="#c8c8c8"/><rect x="712" y="135" width="1" height="1" fill="#fff"/><rect x="712" y="137" width="2" height="2" fill="#c8c8c8"/><rect x="713" y="138" width="1" height="1" fill="#fff"/><rect x="711" y="140" width="2" height="2" fill="#c8c8c8"/><rect x="712" y="141" width="1" height="1" fill="#fff"/><rect x="712" y="143" width="2" height="2" fill="#c8c8c8"/><rect x="713" y="144" width="1" height="1" fill="#fff"/><rect x="711" y="146" width="2" height="2" fill="#c8c8c8"/><rect x="712" y="147" width="1" height="1" fill="#fff"/><rect x="712" y="149" width="2" height="2" fill="#c8c8c8"/><rect x="713" y="150" width="1" height="1" fill="#fff"/><rect x="711" y="152" width="2" height="2" fill="#c8c8c8"/><rect x="712" y="153" width="1" height="1" fill="#fff"/><rect x="712" y="155" width="2" height="2" fill="#c8c8c8"/><rect x="713" y="156" width="1" height="1" fill="#fff"/><rect x="717" y="130" width="23" height="10" fill="#40b030"/><path d="M718,135h19v7l3,3v7h-4l-3,-3h-15z" fill="#f0a040" stroke="#30c0e0" stroke-width="1" stroke-dasharray="2 1"/><path d="M737,142l3,3v7l-3,0z" fill="#555"/><path d="M724,140h8M728,136v8" stroke="#fff" stroke-width="1.8"/><line x1="751" y1="153" x2="757" y2="147" stroke="#3a1a0a" stroke-width="2.5"/><circle cx="763" cy="140.5" r="9" fill="#9ed0e0" stroke="#000" stroke-width="1.6"/><path d="M756,142c3,-3 8,-3 13,-2M756,144c4,-2 9,-1 13,0" stroke="#d03030" stroke-width="1.3" fill="none"/><path d="M757,146c4,-1 8,0 11,-1" stroke="#30a030" stroke-width="1.2" fill="none"/><defs><linearGradient id="gbtn" x1="0" x2="1"><stop offset="0" stop-color="#4a4a4a"/><stop offset="1" stop-color="#a8a8a8"/></linearGradient></defs><rect x="779" y="133" width="58" height="19" fill="url(#gbtn)"/><circle cx="786" cy="142.5" r="3.5" fill="#fff"/><text x="797" y="146.5" font-size="11" fill="#fff" font-family="Liberation Sans">RGB =</text><rect x="839.5" y="132.5" width="77" height="20" rx="2" fill="#fff" stroke="#adadad"/><rect x="901.5" y="133" width="15" height="19" fill="#f0f0f0"/><path d="M901.5,133v19" stroke="#ccc"/><path d="M905.5,140.5h7l-3.5,4z" fill="#000"/><text x="844" y="146.5" font-size="11" font-family="Liberation Sans">-</text><path d="M924,153c2,-10 5,-19 11,-19c6,0 9,9 11,19" fill="none" stroke="#1a6a8a" stroke-width="2"/><text x="925" y="152" font-size="15" font-weight="bold" font-family="Liberation Sans" fill="#222">%</text><path d="M926,152h18" stroke="#60c060" stroke-width="1.5"/><path d="M957,153c2,-10 5,-19 11,-19c6,0 9,9 11,19" fill="none" stroke="#901010" stroke-width="2"/><text x="960" y="153" font-size="17" font-weight="bold" font-family="Liberation Serif" fill="#222">&#963;</text><path d="M959,152h18" stroke="#60c060" stroke-width="1.5"/><line x1="990" y1="153" x2="996" y2="147" stroke="#3a1a0a" stroke-width="2.5"/><circle cx="1002" cy="140" r="9" fill="#a8e0ea" stroke="#000" stroke-width="1.6"/><circle cx="1002" cy="140" r="5" fill="#f0d890"/><path d="M998.5,140h7M1002,136.5v7" stroke="#fff" stroke-width="1.4"/><rect x="1018" y="133" width="58" height="19" fill="url(#gbtn)"/><circle cx="1025" cy="142.5" r="3.5" fill="#fff"/><text x="1035" y="146.5" font-size="11" fill="#fff" font-family="Liberation Sans">ROI</text><path d="M1081,130.5h24l-5,11l5,12h-24z" fill="#e8a818" stroke="#30c0e0" stroke-width="1.2"/><path d="M1094,135l4,4M1098,135l-4,4M1094,144l4,4M1098,144l-4,4M1081,131l2,2M1104,131l-2,2M1081,153l2,-2M1104,153l-2,-2" stroke="#e01010" stroke-width="1.2"/><rect x="1114" y="130.5" width="24" height="23" rx="2.5" fill="#e8a818" stroke="#30c0e0" stroke-width="1.4"/><path d="M1119,142h14M1126,135v14" stroke="#fff" stroke-width="2.6"/><rect x="1147" y="130" width="23" height="24" rx="3" fill="#c4c4c4"/><path d="M1154,136c-4,2 -5,8 -1,11c4,3 10,1 11,-4c0,-3 -1,-5 -3,-7" fill="none" stroke="#f0f0f0" stroke-width="2.2"/><path d="M1159,133l3,4l-4,1z" fill="#f0f0f0"/><rect x="1198.5" y="132.5" width="99" height="20" rx="2" fill="#fff" stroke="#adadad"/><rect x="1282" y="133" width="15" height="19" fill="#f4f4f4"/><path d="M1281.5,133v19M1282,142.5h15" stroke="#ccc"/><path d="M1286.0,139.5h7l-3.5,-4z" fill="#000"/><path d="M1286.0,145.5h7l-3.5,4z" fill="#000"/><text x="1203" y="147" font-size="11" font-family="Liberation Sans">0.010000</text><rect x="1319.5" y="132.5" width="59" height="20" rx="2" fill="#fff" stroke="#adadad"/><rect x="1363" y="133" width="15" height="19" fill="#f4f4f4"/><path d="M1362.5,133v19M1363,142.5h15" stroke="#ccc"/><path d="M1367.0,139.5h7l-3.5,-4z" fill="#000"/><path d="M1367.0,145.5h7l-3.5,4z" fill="#000"/><text x="1323" y="147" font-size="11" font-family="Liberation Sans">60</text><rect x="1404.5" y="132.5" width="59" height="20" rx="2" fill="#fff" stroke="#adadad"/><rect x="1448" y="133" width="15" height="19" fill="#f4f4f4"/><path d="M1447.5,133v19M1448,142.5h15" stroke="#ccc"/><path d="M1452.0,139.5h7l-3.5,-4z" fill="#000"/><path d="M1452.0,145.5h7l-3.5,4z" fill="#000"/><text x="1408" y="147" font-size="11" font-family="Liberation Sans">100</text><text x="1178" y="146" font-size="11" font-family="Liberation Sans">Dist</text><text x="1301" y="146" font-size="11" font-family="Liberation Sans">Min</text><text x="1382" y="146" font-size="11" font-family="Liberation Sans">Max</text><line x1="1470" y1="153" x2="1476" y2="147" stroke="#3a1a0a" stroke-width="2.5"/><circle cx="1482" cy="140" r="9" fill="#a8e0ea" stroke="#000" stroke-width="1.6"/><rect x="1478" y="136" width="4" height="4" fill="#e09090"/><rect x="1482" y="140" width="4" height="4" fill="#90b0e0"/><rect x="1478" y="140" width="4" height="4" fill="#a0d090"/><path d="M1478,140h8M1482,136v8" stroke="#fff" stroke-width="1.2"/><rect x="1498" y="133" width="65" height="19" fill="url(#gbtn)"/><circle cx="1505" cy="142.5" r="3.5" fill="#fff"/><text x="1516" y="146.5" font-size="11" fill="#fff" font-family="Liberation Sans">Preview</text><rect x="1568.5" y="130.5" width="23" height="23" rx="2.5" fill="#1a4ab0" stroke="#000" stroke-width="1.2"/><rect x="1569" y="131" width="11" height="11" fill="#1aa8d8"/><rect x="1580" y="131" width="11" height="11" fill="#d81818"/><rect x="1569" y="142" width="11" height="11" fill="#6a9a20"/><path d="M1573,142h14M1580,135v14" stroke="#fff" stroke-width="2.6"/><path d="M1605,138l3,2.5l-3,2.5M1609,138l3,2.5l-3,2.5" fill="none" stroke="#000" stroke-width="1.6"/><rect x="1625" y="128" width="2" height="2" fill="#c8c8c8"/><rect x="1626" y="129" width="1" height="1" fill="#fff"/><rect x="1626" y="131" width="2" height="2" fill="#c8c8c8"/><rect x="1627" y="132" width="1" height="1" fill="#fff"/><rect x="1625" y="134" width="2" height="2" fill="#c8c8c8"/><rect x="1626" y="135" width="1" height="1" fill="#fff"/><rect x="1626" y="137" width="2" height="2" fill="#c8c8c8"/><rect x="1627" y="138" width="1" height="1" fill="#fff"/><rect x="1625" y="140" width="2" height="2" fill="#c8c8c8"/><rect x="1626" y="141" width="1" height="1" fill="#fff"/><rect x="1626" y="143" width="2" height="2" fill="#c8c8c8"/><rect x="1627" y="144" width="1" height="1" fill="#fff"/><rect x="1625" y="146" width="2" height="2" fill="#c8c8c8"/><rect x="1626" y="147" width="1" height="1" fill="#fff"/><rect x="1626" y="149" width="2" height="2" fill="#c8c8c8"/><rect x="1627" y="150" width="1" height="1" fill="#fff"/><rect x="1625" y="152" width="2" height="2" fill="#c8c8c8"/><rect x="1626" y="153" width="1" height="1" fill="#fff"/><rect x="1626" y="155" width="2" height="2" fill="#c8c8c8"/><rect x="1627" y="156" width="1" height="1" fill="#fff"/><rect x="1633" y="130" width="24" height="23" fill="#1ab8a0"/><path d="M1636,130v23M1640,130v23M1644,130v23M1648,130v23M1652,130v23M1633,134h24M1633,138h24M1633,142h24M1633,146h24M1633,150h24" stroke="#0a7a60" stroke-width="0.8"/><rect x="1640" y="135" width="11" height="14" fill="#f06010"/><path d="M1644,135v14M1647.5,135v14M1640,138.5h11M1640,142h11M1640,145.5h11" stroke="#fdd" stroke-width="0.8"/><path d="M1665,138l3,2.5l-3,2.5M1669,138l3,2.5l-3,2.5" fill="none" stroke="#000" stroke-width="1.6"/></svg>
<svg class="a" style="left:651px;top:206px" width="715" height="715" viewBox="651 206 715 715">
<defs>
<filter id="tex" x="651" y="206" width="715" height="715" filterUnits="userSpaceOnUse" color-interpolation-filters="sRGB">
<feTurbulence type="fractalNoise" baseFrequency="0.7" numOctaves="2" seed="7" result="n"/>
<feColorMatrix in="n" type="matrix" values="1 0 0 0 0 1 0 0 0 0 1 0 0 0 0 0 0 0 0 1" result="g"/>
<feComposite in="SourceGraphic" in2="g" operator="arithmetic" k1="0" k2="1" k3="0.22" k4="-0.11"/>
</filter>
<filter id="mot" x="651" y="206" width="715" height="715" filterUnits="userSpaceOnUse" color-interpolation-filters="sRGB">
<feGaussianBlur in="SourceGraphic" stdDeviation="5" result="sb"/>
<feTurbulence type="fractalNoise" baseFrequency="0.035" numOctaves="2" seed="3" result="t1"/>
<feColorMatrix in="t1" type="matrix" values="1 0 0 0 0 1 0 0 0 0 1 0 0 0 0 0 0 0 0 1" result="o1"/>
<feTurbulence type="fractalNoise" baseFrequency="0.16" numOctaves="2" seed="9" result="t2"/>
<feColorMatrix in="t2" type="matrix" values="1 0 0 0 0 1 0 0 0 0 1 0 0 0 0 0 0 0 0 1" result="o2"/>
<feComposite in="o1" in2="o2" operator="arithmetic" k1="0" k2="0.55" k3="0.45" k4="0" result="nn"/>
<feColorMatrix in="nn" type="matrix" values="0 0 0 0 1 0 0 0 0 1 0 0 0 0 1 3.0 0 0 0 -0.95" result="g"/>
<feComposite in="sb" in2="g" operator="in"/>
</filter>
<filter id="bl6"><feGaussianBlur stdDeviation="4"/></filter>
<filter id="bl3"><feGaussianBlur stdDeviation="2.5"/></filter>
</defs>
<g filter="url(#tex)">
<rect x="651" y="206" width="715" height="715" fill="#7b7b7b"/>
<polygon points="651.0,206.0 899.8,206.0 895.0,215.5 888.7,229.8 887.1,245.7 886.3,272.7 880.8,279.1 871.2,285.4 864.9,298.2 855.3,307.7 842.6,310.9 836.3,320.4 836.3,330.0 842.6,345.8 845.8,366.0 849.6,375.9 841.7,389.8 825.8,396.7 815.8,405.7 794.0,417.6 778.1,425.5 770.2,435.5 760.2,447.4 759.2,459.3 748.3,475.2 750.3,489.1 762.2,503.0 774.1,512.9 777.1,532.8 779.7,558.0 784.5,589.0 788.0,612.8 786.8,627.1 788.0,636.7 777.3,639.0 751.1,651.0 734.4,662.9 729.6,681.9 722.5,686.0 721.3,707.4 710.6,714.6 693.9,719.4 677.2,725.3 665.3,733.7 651.0,733.7" fill="#565656"/>
<g filter="url(#bl6)">
<polygon points="666.0,206.0 700.0,206.0 691.0,219.0 676.0,238.0 668.0,257.0 658.0,278.0 651.0,302.0 651.0,232.0 660.0,228.0" fill="#333"/>
<polygon points="651.0,300.0 668.0,290.0 662.0,340.0 651.0,350.0" fill="#3c3c3c"/>
<polygon points="651.0,330.0 700.0,302.0 760.0,272.0 778.0,282.0 720.0,322.0 651.0,365.0" fill="#6e6e6e"/>
<polygon points="651.0,372.0 700.0,366.0 682.0,420.0 651.0,452.0" fill="#3e3e3e"/>
<polygon points="895.0,218.7 849.0,241.0 806.0,276.0 795.0,311.0 786.8,349.0 741.6,360.9 698.7,372.8 674.8,420.5 651.0,471.0 651.0,410.0 680.0,345.0 735.0,330.0 768.0,300.0 782.0,258.0 822.0,228.0 880.0,206.0" fill="#444"/>
</g>
<polygon points="899.8,206.0 895.0,215.5 888.7,229.8 887.1,245.7 886.3,272.7 880.8,279.1 871.2,285.4 864.9,298.2 855.3,307.7 842.6,310.9 836.3,320.4 836.3,330.0 842.6,345.8 845.8,366.0 849.6,375.9 841.7,389.8 825.8,396.7 815.8,405.7 794.0,417.6 778.1,425.5 770.2,435.5 760.2,447.4 759.2,459.3 748.3,475.2 750.3,489.1 762.2,503.0 774.1,512.9 777.1,532.8 779.7,558.0 784.5,589.0 788.0,612.8 786.8,627.1 788.0,636.7 777.3,639.0 751.1,651.0 734.4,662.9 729.6,681.9 722.5,686.0 721.3,707.4 710.6,714.6 693.9,719.4 677.2,725.3 665.3,733.7 651.0,733.7 651.0,471.2 660.9,459.3 674.8,420.5 686.7,396.7 698.7,372.8 715.3,363.3 741.6,360.9 765.4,358.5 786.8,349.0 791.0,330.0 795.0,310.9 799.7,293.4 806.1,275.9 818.8,261.6 831.5,250.5 849.0,241.0 871.2,233.0 895.0,218.7" fill="#2e2e2e"/>
<polyline points="886.3,272.7 880.8,279.1 871.2,285.4 864.9,298.2 855.3,307.7 842.6,310.9 836.3,320.4 836.3,330.0 842.6,345.8 845.8,366.0 849.6,375.9 841.7,389.8 825.8,396.7 815.8,405.7 794.0,417.6 778.1,425.5 770.2,435.5 760.2,447.4 759.2,459.3 748.3,475.2 750.3,489.1 762.2,503.0 774.1,512.9 777.1,532.8 779.7,558.0 784.5,589.0 788.0,612.8 786.8,627.1 788.0,636.7 777.3,639.0 751.1,651.0 734.4,662.9 729.6,681.9 722.5,686.0 721.3,707.4" fill="none" stroke="#505050" stroke-width="4" stroke-opacity="0.7" filter="url(#bl3)"/>
<g filter="url(#mot)">
<polygon points="953.3,229.8 977.1,213.9 1000.9,210.0 1020.8,221.9 1040.7,229.8 1056.6,245.7 1066.5,269.6 1072.4,297.4 1070.5,325.2 1064.5,345.0 1072.4,364.9 1096.3,376.8 1120.1,392.7 1136.0,412.6 1143.9,436.4 1140.0,460.0 1128.0,480.0 1152.0,484.0 1187.6,500.0 1195.6,515.8 1183.7,527.7 1163.8,531.7 1128.1,527.7 1104.2,535.7 1092.3,541.6 1072.4,563.5 1028.7,571.4 1000.9,575.4 996.6,612.4 1000.6,624.3 968.8,640.2 952.9,668.0 929.0,664.0 921.1,640.2 905.2,624.3 889.3,608.4 873.4,580.6 849.6,556.8 850.0,523.8 850.0,444.3 861.9,420.5 873.8,392.7 881.8,357.0 893.7,325.2 897.7,285.4 909.6,261.6 929.4,245.7" fill="#fff"/>
<polygon points="1024.8,257.6 1036.7,261.6 1044.6,305.3 1040.7,345.0 1048.6,372.8 1044.6,412.6 1036.7,428.4 1020.8,420.5 1016.8,384.8 1024.8,345.0 1020.8,305.3" fill="#7b7b7b"/>
<polygon points="909.6,245.7 953.3,229.8 950.0,300.0 935.0,325.2 915.0,320.0 905.0,290.0" fill="#7b7b7b"/>
<polygon points="1227.0,390.0 1250.0,387.0 1265.0,392.0 1285.0,420.0 1298.0,446.0 1260.0,448.0 1240.0,430.0 1232.0,410.0" fill="#fff" fill-opacity="0.6"/>
<polygon points="810.0,672.0 860.0,690.0 905.0,760.0 909.0,878.0 860.0,880.0 820.0,840.0 805.0,760.0" fill="#fff" fill-opacity="0.6"/>
<polygon points="921.0,759.0 975.0,750.0 1008.0,790.0 1000.0,831.0 950.0,830.0 925.0,800.0" fill="#fff" fill-opacity="0.6"/>
<polygon points="738.0,847.0 790.0,850.0 830.0,880.0 830.0,921.0 740.0,921.0" fill="#fff" fill-opacity="0.6"/>
<polygon points="651.0,735.0 700.0,720.0 790.0,690.0 810.0,760.0 800.0,921.0 651.0,921.0" fill="#fff" fill-opacity="0.2"/>
<polygon points="1000.0,640.0 1060.0,860.0 1010.0,921.0 830.0,921.0 905.0,880.0 930.0,760.0" fill="#fff" fill-opacity="0.22"/>
<polygon points="760.0,447.0 850.0,444.0 850.0,524.0 873.0,580.0 890.0,610.0 850.0,650.0 790.0,640.0 780.0,560.0 760.0,460.0" fill="#fff" fill-opacity="0.22"/>
<polygon points="836.0,320.0 886.0,272.0 897.0,285.0 893.0,325.0 881.0,357.0 861.0,420.0 850.0,444.0 800.0,430.0" fill="#fff" fill-opacity="0.15"/>
</g>
<rect x="1288" y="247" width="1" height="2" fill="#a8a8a8"/><rect x="1278" y="252" width="1" height="1" fill="#9a9a9a"/><rect x="1223" y="294" width="2" height="2" fill="#3c3c3c"/><rect x="1302" y="262" width="2" height="1" fill="#4a4a4a"/><rect x="1337" y="493" width="2" height="2" fill="#555"/><rect x="1273" y="726" width="2" height="3" fill="#a8a8a8"/><rect x="1249" y="413" width="3" height="2" fill="#a8a8a8"/><rect x="1276" y="850" width="1" height="2" fill="#9a9a9a"/><rect x="1354" y="700" width="3" height="2" fill="#a8a8a8"/><rect x="1223" y="433" width="1" height="2" fill="#9a9a9a"/><rect x="1315" y="581" width="2" height="2" fill="#4a4a4a"/><rect x="1349" y="865" width="2" height="1" fill="#3c3c3c"/><rect x="1207" y="833" width="1" height="2" fill="#a8a8a8"/><rect x="1245" y="588" width="1" height="1" fill="#555"/><rect x="1152" y="719" width="1" height="1" fill="#555"/><rect x="1324" y="362" width="2" height="2" fill="#606060"/><rect x="1239" y="827" width="1" height="1" fill="#606060"/><rect x="1307" y="783" width="1" height="2" fill="#9a9a9a"/><rect x="1247" y="522" width="1" height="1" fill="#606060"/><rect x="1325" y="821" width="3" height="1" fill="#3c3c3c"/><rect x="1350" y="816" width="2" height="3" fill="#4a4a4a"/><rect x="1337" y="854" width="1" height="3" fill="#555"/><rect x="1350" y="773" width="3" height="3" fill="#4a4a4a"/><rect x="1191" y="380" width="3" height="1" fill="#a8a8a8"/><rect x="1349" y="597" width="3" height="1" fill="#4a4a4a"/><rect x="1275" y="257" width="3" height="2" fill="#555"/><rect x="1194" y="725" width="2" height="2" fill="#a8a8a8"/><rect x="1245" y="605" width="3" height="1" fill="#a8a8a8"/><rect x="1353" y="323" width="1" height="2" fill="#555"/><rect x="1298" y="819" width="2" height="1" fill="#3c3c3c"/><rect x="1287" y="803" width="2" height="2" fill="#a8a8a8"/><rect x="1362" y="342" width="2" height="1" fill="#3c3c3c"/><rect x="1344" y="375" width="1" height="2" fill="#9a9a9a"/><rect x="1216" y="780" width="1" height="2" fill="#606060"/><rect x="1175" y="901" width="2" height="1" fill="#3c3c3c"/><rect x="1244" y="910" width="3" height="2" fill="#555"/><rect x="1355" y="866" width="1" height="2" fill="#9a9a9a"/><rect x="1275" y="682" width="2" height="2" fill="#9a9a9a"/><rect x="1312" y="695" width="1" height="2" fill="#3c3c3c"/><rect x="1274" y="726" width="2" height="2" fill="#4a4a4a"/><rect x="1344" y="744" width="2" height="2" fill="#a8a8a8"/><rect x="1221" y="552" width="2" height="3" fill="#9a9a9a"/><rect x="1323" y="850" width="2" height="3" fill="#606060"/><rect x="1178" y="660" width="2" height="1" fill="#3c3c3c"/><rect x="1161" y="492" width="2" height="2" fill="#606060"/><rect x="1210" y="887" width="1" height="3" fill="#3c3c3c"/><rect x="1331" y="659" width="2" height="1" fill="#9a9a9a"/><rect x="1355" y="551" width="2" height="2" fill="#9a9a9a"/><rect x="1281" y="747" width="1" height="2" fill="#3c3c3c"/><rect x="1202" y="712" width="3" height="1" fill="#9a9a9a"/><rect x="1319" y="470" width="2" height="1" fill="#9a9a9a"/><rect x="1256" y="530" width="2" height="2" fill="#606060"/><rect x="1273" y="692" width="2" height="2" fill="#4a4a4a"/><rect x="1255" y="475" width="2" height="2" fill="#9a9a9a"/><rect x="1152" y="885" width="2" height="3" fill="#9a9a9a"/><rect x="1256" y="778" width="1" height="3" fill="#a8a8a8"/><rect x="1203" y="689" width="3" height="2" fill="#606060"/><rect x="1365" y="610" width="2" height="2" fill="#555"/><rect x="1204" y="313" width="1" height="2" fill="#4a4a4a"/><rect x="1361" y="593" width="1" height="2" fill="#555"/><rect x="1199" y="354" width="3" height="2" fill="#555"/><rect x="1205" y="825" width="1" height="3" fill="#606060"/><rect x="1166" y="665" width="1" height="2" fill="#3c3c3c"/><rect x="1281" y="776" width="3" height="3" fill="#606060"/><rect x="1243" y="623" width="1" height="2" fill="#a8a8a8"/><rect x="1196" y="686" width="1" height="1" fill="#4a4a4a"/><rect x="1350" y="774" width="1" height="3" fill="#3c3c3c"/><rect x="1329" y="279" width="2" height="2" fill="#606060"/><rect x="1354" y="576" width="1" height="1" fill="#606060"/><rect x="1309" y="647" width="1" height="1" fill="#a8a8a8"/><rect x="1210" y="919" width="2" height="1" fill="#606060"/><rect x="1269" y="544" width="2" height="1" fill="#606060"/><rect x="1337" y="800" width="3" height="3" fill="#606060"/><rect x="1258" y="535" width="2" height="2" fill="#555"/><rect x="1245" y="712" width="3" height="2" fill="#a8a8a8"/><rect x="1327" y="425" width="3" height="3" fill="#4a4a4a"/><rect x="1246" y="565" width="3" height="3" fill="#606060"/><rect x="1321" y="681" width="1" height="2" fill="#9a9a9a"/><rect x="1359" y="459" width="2" height="1" fill="#9a9a9a"/><rect x="1347" y="241" width="1" height="1" fill="#606060"/><rect x="1285" y="843" width="3" height="1" fill="#9a9a9a"/><rect x="1365" y="746" width="1" height="1" fill="#606060"/><rect x="1186" y="437" width="2" height="1" fill="#555"/><rect x="1227" y="528" width="2" height="2" fill="#4a4a4a"/><rect x="1294" y="851" width="2" height="2" fill="#3c3c3c"/><rect x="1288" y="523" width="2" height="2" fill="#606060"/><rect x="1334" y="304" width="2" height="2" fill="#a8a8a8"/><rect x="1257" y="855" width="1" height="2" fill="#4a4a4a"/><rect x="1308" y="292" width="2" height="2" fill="#4a4a4a"/><rect x="1324" y="746" width="1" height="3" fill="#3c3c3c"/><rect x="1328" y="880" width="1" height="3" fill="#3c3c3c"/><rect x="1284" y="882" width="3" height="2" fill="#a8a8a8"/><rect x="1215" y="512" width="1" height="2" fill="#606060"/><rect x="1210" y="707" width="2" height="2" fill="#555"/><rect x="1361" y="478" width="1" height="1" fill="#606060"/><rect x="1360" y="265" width="1" height="2" fill="#3c3c3c"/><rect x="1320" y="642" width="1" height="2" fill="#9a9a9a"/><rect x="1201" y="454" width="1" height="2" fill="#a8a8a8"/><rect x="1241" y="309" width="2" height="2" fill="#9a9a9a"/><rect x="1278" y="542" width="3" height="1" fill="#a8a8a8"/><rect x="1319" y="829" width="2" height="1" fill="#3c3c3c"/><rect x="1366" y="815" width="1" height="3" fill="#a8a8a8"/><rect x="1346" y="281" width="3" height="2" fill="#3c3c3c"/><rect x="1243" y="844" width="2" height="3" fill="#606060"/><rect x="1308" y="446" width="2" height="2" fill="#4a4a4a"/><rect x="1298" y="558" width="1" height="1" fill="#606060"/><rect x="1306" y="899" width="2" height="1" fill="#9a9a9a"/><rect x="1175" y="422" width="2" height="1" fill="#9a9a9a"/><rect x="1351" y="803" width="1" height="2" fill="#a8a8a8"/><rect x="1315" y="867" width="1" height="2" fill="#9a9a9a"/><rect x="1231" y="543" width="2" height="2" fill="#9a9a9a"/><rect x="1279" y="840" width="3" height="1" fill="#a8a8a8"/><rect x="1281" y="516" width="3" height="1" fill="#555"/><rect x="1255" y="691" width="2" height="1" fill="#3c3c3c"/><rect x="1315" y="430" width="2" height="3" fill="#4a4a4a"/><rect x="1178" y="598" width="3" height="2" fill="#3c3c3c"/><rect x="1236" y="743" width="2" height="1" fill="#555"/><rect x="1240" y="310" width="2" height="2" fill="#9a9a9a"/><rect x="1249" y="707" width="2" height="1" fill="#4a4a4a"/><rect x="1244" y="507" width="2" height="2" fill="#4a4a4a"/><rect x="1326" y="393" width="1" height="2" fill="#9a9a9a"/><rect x="1183" y="755" width="2" height="3" fill="#9a9a9a"/><rect x="1337" y="663" width="1" height="3" fill="#606060"/><rect x="1289" y="905" width="3" height="3" fill="#606060"/><rect x="1331" y="909" width="1" height="1" fill="#4a4a4a"/><rect x="1303" y="915" width="3" height="2" fill="#555"/><rect x="1290" y="276" width="2" height="2" fill="#555"/><rect x="1353" y="444" width="2" height="2" fill="#a8a8a8"/><rect x="1191" y="921" width="2" height="1" fill="#9a9a9a"/><rect x="1178" y="490" width="3" height="2" fill="#a8a8a8"/><rect x="1201" y="537" width="2" height="2" fill="#9a9a9a"/><rect x="1318" y="578" width="1" height="2" fill="#9a9a9a"/><rect x="1339" y="613" width="3" height="1" fill="#555"/><rect x="1261" y="804" width="1" height="3" fill="#555"/><rect x="1351" y="517" width="2" height="2" fill="#606060"/><rect x="1365" y="489" width="1" height="2" fill="#4a4a4a"/><rect x="1247" y="234" width="2" height="2" fill="#4a4a4a"/><rect x="1363" y="613" width="2" height="1" fill="#a8a8a8"/><rect x="1227" y="277" width="1" height="2" fill="#4a4a4a"/><rect x="1213" y="260" width="1" height="2" fill="#555"/><rect x="1261" y="913" width="2" height="1" fill="#a8a8a8"/><rect x="1337" y="459" width="2" height="3" fill="#606060"/><rect x="1311" y="848" width="1" height="3" fill="#a8a8a8"/><rect x="1257" y="869" width="1" height="3" fill="#3c3c3c"/><rect x="1243" y="918" width="2" height="2" fill="#3c3c3c"/><rect x="1167" y="687" width="3" height="3" fill="#4a4a4a"/><rect x="1299" y="473" width="2" height="3" fill="#555"/><rect x="1288" y="777" width="2" height="2" fill="#9a9a9a"/><rect x="1248" y="851" width="1" height="2" fill="#a8a8a8"/><rect x="1260" y="314" width="1" height="2" fill="#606060"/><rect x="1243" y="859" width="1" height="2" fill="#555"/><rect x="1269" y="316" width="3" height="1" fill="#9a9a9a"/><rect x="1223" y="868" width="1" height="1" fill="#3c3c3c"/><rect x="1355" y="763" width="1" height="3" fill="#9a9a9a"/><rect x="1324" y="703" width="1" height="1" fill="#4a4a4a"/><rect x="1245" y="565" width="3" height="2" fill="#555"/><rect x="1261" y="303" width="1" height="2" fill="#606060"/><rect x="1233" y="655" width="1" height="2" fill="#9a9a9a"/><rect x="1306" y="361" width="3" height="3" fill="#606060"/><rect x="1340" y="574" width="2" height="3" fill="#4a4a4a"/><rect x="1196" y="474" width="2" height="3" fill="#555"/><rect x="1266" y="815" width="2" height="2" fill="#606060"/><rect x="1192" y="612" width="3" height="3" fill="#9a9a9a"/><rect x="1176" y="904" width="2" height="2" fill="#4a4a4a"/><rect x="1265" y="720" width="1" height="2" fill="#555"/><rect x="1296" y="907" width="1" height="3" fill="#555"/><rect x="1157" y="885" width="1" height="3" fill="#555"/><rect x="1240" y="515" width="3" height="3" fill="#a8a8a8"/><rect x="1307" y="718" width="3" height="2" fill="#a8a8a8"/><rect x="1357" y="423" width="2" height="2" fill="#a8a8a8"/><rect x="1195" y="717" width="2" height="2" fill="#555"/><rect x="1324" y="431" width="1" height="2" fill="#606060"/><rect x="1292" y="746" width="3" height="2" fill="#9a9a9a"/><rect x="1265" y="671" width="2" height="2" fill="#a8a8a8"/><rect x="1252" y="701" width="3" height="2" fill="#606060"/><rect x="1291" y="839" width="1" height="2" fill="#555"/><rect x="1280" y="872" width="2" height="3" fill="#4a4a4a"/><rect x="1334" y="553" width="1" height="2" fill="#4a4a4a"/><rect x="1288" y="510" width="2" height="1" fill="#606060"/><rect x="1295" y="358" width="2" height="2" fill="#3c3c3c"/><rect x="1302" y="445" width="2" height="2" fill="#9a9a9a"/><rect x="1248" y="913" width="3" height="3" fill="#9a9a9a"/><rect x="1264" y="595" width="3" height="1" fill="#3c3c3c"/><rect x="1329" y="854" width="3" height="2" fill="#4a4a4a"/><rect x="1221" y="590" width="1" height="3" fill="#3c3c3c"/><rect x="1344" y="538" width="1" height="3" fill="#606060"/><rect x="1151" y="381" width="2" height="2" fill="#a8a8a8"/><rect x="1165" y="875" width="2" height="2" fill="#4a4a4a"/><rect x="1241" y="916" width="2" height="3" fill="#3c3c3c"/><rect x="1291" y="470" width="3" height="3" fill="#9a9a9a"/><rect x="1313" y="906" width="3" height="3" fill="#9a9a9a"/><rect x="1180" y="916" width="3" height="2" fill="#9a9a9a"/><rect x="1279" y="695" width="2" height="2" fill="#a8a8a8"/><rect x="1263" y="516" width="3" height="2" fill="#a8a8a8"/><rect x="1297" y="614" width="2" height="3" fill="#9a9a9a"/><rect x="1219" y="518" width="2" height="2" fill="#9a9a9a"/><rect x="1252" y="817" width="1" height="3" fill="#3c3c3c"/><rect x="1271" y="899" width="1" height="3" fill="#4a4a4a"/><rect x="1205" y="458" width="2" height="2" fill="#3c3c3c"/><rect x="1266" y="803" width="2" height="1" fill="#3c3c3c"/><rect x="1222" y="891" width="1" height="1" fill="#a8a8a8"/><rect x="1366" y="561" width="3" height="2" fill="#606060"/><rect x="1232" y="599" width="2" height="2" fill="#9a9a9a"/><rect x="1306" y="756" width="1" height="2" fill="#555"/><rect x="1239" y="619" width="1" height="1" fill="#555"/><rect x="1214" y="366" width="3" height="2" fill="#606060"/><rect x="1269" y="882" width="2" height="3" fill="#606060"/><rect x="1186" y="779" width="3" height="3" fill="#4a4a4a"/><rect x="1239" y="812" width="1" height="1" fill="#4a4a4a"/><rect x="1294" y="656" width="2" height="1" fill="#3c3c3c"/><rect x="1265" y="514" width="2" height="2" fill="#3c3c3c"/><rect x="1258" y="712" width="1" height="1" fill="#3c3c3c"/><rect x="1203" y="712" width="1" height="1" fill="#3c3c3c"/><rect x="1288" y="716" width="2" height="2" fill="#9a9a9a"/><rect x="1300" y="622" width="1" height="2" fill="#9a9a9a"/><rect x="1312" y="722" width="1" height="2" fill="#4a4a4a"/><rect x="1296" y="604" width="1" height="1" fill="#9a9a9a"/><rect x="1311" y="469" width="1" height="1" fill="#555"/><rect x="1319" y="541" width="3" height="3" fill="#606060"/><rect x="1317" y="434" width="1" height="1" fill="#555"/><rect x="1310" y="449" width="1" height="2" fill="#606060"/><rect x="1228" y="416" width="1" height="3" fill="#606060"/><rect x="1270" y="584" width="1" height="2" fill="#9a9a9a"/><rect x="1361" y="625" width="2" height="2" fill="#4a4a4a"/><rect x="1208" y="415" width="1" height="3" fill="#555"/><rect x="1241" y="565" width="2" height="2" fill="#a8a8a8"/><rect x="1285" y="640" width="1" height="2" fill="#555"/><rect x="1232" y="826" width="2" height="2" fill="#555"/><rect x="1219" y="885" width="2" height="2" fill="#606060"/><rect x="1256" y="628" width="2" height="2" fill="#606060"/><rect x="1229" y="874" width="3" height="2" fill="#a8a8a8"/><rect x="1322" y="695" width="2" height="2" fill="#555"/><rect x="1243" y="237" width="3" height="2" fill="#606060"/><rect x="1263" y="471" width="2" height="2" fill="#3c3c3c"/><rect x="1215" y="790" width="2" height="1" fill="#a8a8a8"/><rect x="1261" y="611" width="2" height="3" fill="#4a4a4a"/><rect x="1322" y="665" width="2" height="3" fill="#3c3c3c"/><rect x="1309" y="840" width="2" height="3" fill="#3c3c3c"/><rect x="1325" y="273" width="3" height="2" fill="#555"/><rect x="1220" y="546" width="2" height="2" fill="#9a9a9a"/><rect x="1234" y="501" width="2" height="3" fill="#9a9a9a"/><rect x="1218" y="395" width="2" height="2" fill="#9a9a9a"/><rect x="1349" y="873" width="1" height="3" fill="#555"/><rect x="1162" y="478" width="1" height="2" fill="#606060"/><rect x="1358" y="579" width="2" height="3" fill="#a8a8a8"/><rect x="1331" y="568" width="1" height="2" fill="#555"/><rect x="1309" y="682" width="1" height="3" fill="#555"/><rect x="1225" y="794" width="1" height="2" fill="#4a4a4a"/><rect x="1325" y="636" width="3" height="3" fill="#4a4a4a"/><rect x="1324" y="624" width="3" height="2" fill="#555"/><rect x="1239" y="271" width="1" height="2" fill="#4a4a4a"/><rect x="1182" y="453" width="2" height="3" fill="#4a4a4a"/><rect x="1170" y="586" width="2" height="3" fill="#606060"/><rect x="1308" y="735" width="2" height="1" fill="#9a9a9a"/><rect x="1257" y="453" width="3" height="2" fill="#9a9a9a"/><rect x="1339" y="294" width="1" height="2" fill="#a8a8a8"/><rect x="1345" y="344" width="2" height="2" fill="#606060"/><rect x="1292" y="716" width="2" height="1" fill="#4a4a4a"/><rect x="1278" y="589" width="1" height="2" fill="#3c3c3c"/><rect x="1363" y="522" width="1" height="2" fill="#606060"/><rect x="1169" y="787" width="2" height="2" fill="#4a4a4a"/><rect x="1289" y="698" width="3" height="1" fill="#9a9a9a"/><rect x="1298" y="824" width="1" height="2" fill="#3c3c3c"/><rect x="1333" y="685" width="3" height="2" fill="#a8a8a8"/><rect x="1321" y="395" width="1" height="3" fill="#a8a8a8"/><rect x="1363" y="875" width="3" height="3" fill="#555"/><rect x="1355" y="505" width="3" height="3" fill="#606060"/><rect x="1283" y="422" width="3" height="2" fill="#4a4a4a"/><rect x="1330" y="701" width="2" height="2" fill="#3c3c3c"/><rect x="1203" y="869" width="3" height="1" fill="#555"/><rect x="1294" y="685" width="1" height="2" fill="#a8a8a8"/><rect x="1262" y="798" width="2" height="2" fill="#a8a8a8"/><rect x="1229" y="406" width="3" height="1" fill="#4a4a4a"/><rect x="1292" y="385" width="2" height="2" fill="#3c3c3c"/><rect x="1337" y="765" width="1" height="3" fill="#3c3c3c"/><rect x="1310" y="398" width="2" height="2" fill="#a8a8a8"/><rect x="1344" y="755" width="1" height="3" fill="#3c3c3c"/><rect x="1339" y="887" width="2" height="2" fill="#3c3c3c"/><rect x="1194" y="909" width="1" height="2" fill="#a8a8a8"/><rect x="1259" y="670" width="3" height="1" fill="#606060"/><rect x="1293" y="320" width="2" height="3" fill="#a8a8a8"/><rect x="1330" y="455" width="1" height="1" fill="#4a4a4a"/><rect x="1179" y="762" width="1" height="2" fill="#606060"/><rect x="1358" y="373" width="2" height="1" fill="#3c3c3c"/><rect x="1221" y="293" width="2" height="3" fill="#9a9a9a"/><rect x="1270" y="610" width="1" height="2" fill="#3c3c3c"/><rect x="1206" y="792" width="1" height="2" fill="#a8a8a8"/><rect x="1329" y="459" width="2" height="1" fill="#4a4a4a"/><rect x="1226" y="858" width="2" height="2" fill="#3c3c3c"/><rect x="1258" y="840" width="1" height="2" fill="#606060"/><rect x="1347" y="577" width="1" height="1" fill="#555"/><rect x="1227" y="634" width="1" height="1" fill="#4a4a4a"/><rect x="1301" y="862" width="2" height="2" fill="#9a9a9a"/><rect x="1360" y="605" width="1" height="1" fill="#3c3c3c"/><rect x="1150" y="864" width="1" height="2" fill="#a8a8a8"/><rect x="1293" y="635" width="2" height="2" fill="#4a4a4a"/><rect x="1232" y="737" width="1" height="1" fill="#a8a8a8"/><rect x="1349" y="899" width="3" height="1" fill="#606060"/><rect x="1180" y="745" width="2" height="2" fill="#a8a8a8"/><rect x="1288" y="843" width="2" height="2" fill="#4a4a4a"/><rect x="1340" y="473" width="2" height="2" fill="#4a4a4a"/><rect x="1247" y="782" width="1" height="2" fill="#555"/><rect x="1356" y="281" width="2" height="2" fill="#a8a8a8"/><rect x="1281" y="530" width="2" height="2" fill="#4a4a4a"/><rect x="1267" y="686" width="1" height="1" fill="#606060"/><rect x="1274" y="810" width="2" height="1" fill="#606060"/><rect x="1254" y="297" width="2" height="1" fill="#606060"/><rect x="1332" y="443" width="2" height="2" fill="#3c3c3c"/><rect x="1289" y="498" width="2" height="2" fill="#4a4a4a"/><rect x="1199" y="416" width="1" height="1" fill="#a8a8a8"/><rect x="1176" y="753" width="1" height="2" fill="#4a4a4a"/><rect x="1347" y="276" width="2" height="2" fill="#555"/><rect x="1262" y="864" width="3" height="3" fill="#3c3c3c"/><rect x="1272" y="300" width="3" height="2" fill="#606060"/><rect x="1284" y="700" width="2" height="2" fill="#a8a8a8"/><rect x="1328" y="416" width="1" height="2" fill="#606060"/><rect x="1261" y="340" width="3" height="3" fill="#4a4a4a"/><rect x="1188" y="835" width="1" height="2" fill="#3c3c3c"/><rect x="1287" y="316" width="2" height="3" fill="#9a9a9a"/><rect x="1246" y="894" width="3" height="2" fill="#555"/><rect x="1299" y="427" width="1" height="2" fill="#4a4a4a"/><rect x="1290" y="698" width="2" height="1" fill="#a8a8a8"/><rect x="1280" y="236" width="2" height="2" fill="#606060"/><rect x="1343" y="818" width="1" height="3" fill="#555"/><rect x="1296" y="800" width="1" height="1" fill="#9a9a9a"/><rect x="1271" y="640" width="1" height="3" fill="#3c3c3c"/><rect x="1325" y="509" width="1" height="1" fill="#a8a8a8"/><rect x="1365" y="794" width="1" height="3" fill="#a8a8a8"/><rect x="1227" y="437" width="3" height="2" fill="#555"/><rect x="1325" y="757" width="2" height="1" fill="#4a4a4a"/><rect x="1227" y="744" width="2" height="2" fill="#555"/><rect x="1276" y="550" width="1" height="1" fill="#606060"/><rect x="1232" y="436" width="1" height="2" fill="#4a4a4a"/><rect x="1363" y="447" width="2" height="2" fill="#4a4a4a"/><rect x="1256" y="758" width="3" height="3" fill="#a8a8a8"/><rect x="1265" y="242" width="1" height="2" fill="#a8a8a8"/><rect x="1339" y="446" width="3" height="2" fill="#4a4a4a"/><rect x="1244" y="705" width="2" height="2" fill="#4a4a4a"/><rect x="1285" y="640" width="1" height="1" fill="#3c3c3c"/><rect x="1299" y="518" width="3" height="2" fill="#606060"/><rect x="1152" y="521" width="3" height="2" fill="#9a9a9a"/><rect x="1173" y="727" width="1" height="1" fill="#606060"/><rect x="1195" y="875" width="1" height="1" fill="#a8a8a8"/><rect x="1339" y="819" width="2" height="3" fill="#a8a8a8"/><rect x="1208" y="737" width="2" height="2" fill="#3c3c3c"/><rect x="1237" y="895" width="2" height="3" fill="#606060"/><rect x="1290" y="781" width="1" height="2" fill="#3c3c3c"/><rect x="1297" y="355" width="2" height="1" fill="#a8a8a8"/><rect x="1311" y="730" width="2" height="1" fill="#606060"/><rect x="1293" y="402" width="2" height="2" fill="#9a9a9a"/><rect x="1343" y="654" width="1" height="3" fill="#606060"/><rect x="1202" y="900" width="1" height="3" fill="#606060"/><rect x="1154" y="509" width="3" height="1" fill="#3c3c3c"/><rect x="1321" y="896" width="3" height="2" fill="#a8a8a8"/><rect x="1295" y="887" width="1" height="2" fill="#606060"/><rect x="1305" y="481" width="1" height="2" fill="#3c3c3c"/><rect x="1160" y="343" width="2" height="1" fill="#555"/><rect x="1350" y="809" width="2" height="3" fill="#a8a8a8"/><rect x="1188" y="793" width="3" height="2" fill="#9a9a9a"/><rect x="1300" y="402" width="2" height="2" fill="#606060"/><rect x="1270" y="380" width="2" height="2" fill="#a8a8a8"/><rect x="1296" y="848" width="2" height="1" fill="#9a9a9a"/><rect x="1173" y="493" width="1" height="2" fill="#555"/><rect x="1312" y="341" width="2" height="2" fill="#3c3c3c"/><rect x="1157" y="792" width="3" height="2" fill="#a8a8a8"/><rect x="1162" y="744" width="2" height="2" fill="#a8a8a8"/><rect x="1358" y="433" width="1" height="2" fill="#4a4a4a"/><rect x="1309" y="312" width="2" height="2" fill="#4a4a4a"/><rect x="1185" y="815" width="2" height="2" fill="#3c3c3c"/><rect x="1183" y="453" width="3" height="2" fill="#606060"/><rect x="1321" y="610" width="2" height="2" fill="#4a4a4a"/><rect x="1262" y="773" width="3" height="3" fill="#3c3c3c"/><rect x="1312" y="679" width="2" height="3" fill="#4a4a4a"/><rect x="1357" y="702" width="1" height="3" fill="#555"/><rect x="1317" y="828" width="1" height="2" fill="#9a9a9a"/><rect x="1244" y="794" width="1" height="1" fill="#606060"/><rect x="1305" y="256" width="1" height="2" fill="#9a9a9a"/><rect x="1218" y="499" width="1" height="1" fill="#a8a8a8"/><rect x="1276" y="714" width="3" height="1" fill="#555"/><rect x="1320" y="438" width="2" height="3" fill="#606060"/><rect x="1328" y="251" width="1" height="2" fill="#a8a8a8"/><rect x="1270" y="315" width="3" height="3" fill="#9a9a9a"/><rect x="1268" y="289" width="2" height="2" fill="#606060"/><rect x="1346" y="818" width="1" height="2" fill="#9a9a9a"/><rect x="1330" y="364" width="3" height="1" fill="#9a9a9a"/><rect x="1250" y="610" width="1" height="2" fill="#3c3c3c"/><rect x="1227" y="694" width="2" height="1" fill="#4a4a4a"/><rect x="1250" y="478" width="3" height="1" fill="#4a4a4a"/><rect x="1289" y="287" width="1" height="2" fill="#555"/><rect x="1343" y="817" width="3" height="3" fill="#9a9a9a"/><rect x="1277" y="822" width="3" height="1" fill="#606060"/><rect x="1229" y="237" width="3" height="2" fill="#9a9a9a"/><rect x="1272" y="833" width="2" height="2" fill="#3c3c3c"/><rect x="1197" y="567" width="2" height="2" fill="#3c3c3c"/><rect x="1159" y="678" width="3" height="2" fill="#a8a8a8"/><rect x="1207" y="606" width="2" height="2" fill="#9a9a9a"/><rect x="1291" y="807" width="2" height="2" fill="#9a9a9a"/><rect x="1238" y="795" width="2" height="1" fill="#9a9a9a"/><rect x="1341" y="534" width="3" height="2" fill="#4a4a4a"/><rect x="1326" y="687" width="2" height="1" fill="#606060"/><rect x="1290" y="514" width="1" height="2" fill="#4a4a4a"/><rect x="1162" y="408" width="2" height="1" fill="#a8a8a8"/><rect x="1285" y="583" width="2" height="3" fill="#9a9a9a"/><rect x="1259" y="520" width="1" height="2" fill="#606060"/><rect x="1265" y="750" width="1" height="1" fill="#a8a8a8"/><rect x="1290" y="591" width="1" height="3" fill="#4a4a4a"/><rect x="1331" y="628" width="2" height="3" fill="#4a4a4a"/><rect x="1267" y="408" width="1" height="1" fill="#9a9a9a"/><rect x="1218" y="480" width="3" height="2" fill="#555"/><rect x="1335" y="523" width="2" height="3" fill="#4a4a4a"/><rect x="1230" y="613" width="2" height="2" fill="#a8a8a8"/><rect x="1252" y="645" width="2" height="2" fill="#555"/><rect x="1363" y="654" width="3" height="1" fill="#4a4a4a"/><rect x="1288" y="533" width="3" height="2" fill="#4a4a4a"/><rect x="1200" y="347" width="1" height="1" fill="#4a4a4a"/><rect x="1295" y="510" width="1" height="1" fill="#3c3c3c"/><rect x="1237" y="233" width="3" height="1" fill="#9a9a9a"/><rect x="1314" y="894" width="2" height="1" fill="#606060"/><rect x="1365" y="698" width="2" height="3" fill="#555"/><rect x="1347" y="575" width="1" height="2" fill="#4a4a4a"/><rect x="1227" y="768" width="1" height="3" fill="#9a9a9a"/><rect x="1333" y="486" width="3" height="2" fill="#606060"/><rect x="1236" y="748" width="3" height="3" fill="#606060"/><rect x="1353" y="253" width="1" height="3" fill="#3c3c3c"/><rect x="1220" y="653" width="3" height="2" fill="#4a4a4a"/><rect x="1208" y="892" width="1" height="3" fill="#606060"/><rect x="1335" y="423" width="1" height="2" fill="#3c3c3c"/><rect x="1306" y="786" width="2" height="2" fill="#4a4a4a"/><rect x="1323" y="740" width="1" height="2" fill="#606060"/><rect x="1236" y="707" width="2" height="3" fill="#a8a8a8"/><rect x="1171" y="745" width="2" height="2" fill="#555"/><rect x="1309" y="845" width="2" height="3" fill="#a8a8a8"/><rect x="1357" y="830" width="2" height="3" fill="#a8a8a8"/><rect x="1353" y="747" width="2" height="3" fill="#4a4a4a"/><rect x="1167" y="345" width="1" height="3" fill="#9a9a9a"/><rect x="1177" y="594" width="1" height="2" fill="#555"/><rect x="1352" y="609" width="3" height="2" fill="#9a9a9a"/><rect x="1324" y="535" width="2" height="2" fill="#555"/><rect x="1329" y="382" width="1" height="2" fill="#555"/><rect x="1290" y="598" width="1" height="1" fill="#4a4a4a"/><rect x="1155" y="902" width="1" height="3" fill="#a8a8a8"/><rect x="1152" y="292" width="1" height="2" fill="#606060"/><rect x="1250" y="777" width="1" height="1" fill="#555"/><rect x="1252" y="701" width="2" height="2" fill="#a8a8a8"/><rect x="1307" y="745" width="1" height="2" fill="#606060"/><rect x="1337" y="380" width="2" height="2" fill="#3c3c3c"/><rect x="1186" y="421" width="1" height="1" fill="#3c3c3c"/><rect x="1183" y="763" width="2" height="1" fill="#a8a8a8"/><rect x="1301" y="777" width="1" height="2" fill="#9a9a9a"/><rect x="1255" y="532" width="2" height="2" fill="#9a9a9a"/><rect x="1270" y="278" width="2" height="2" fill="#9a9a9a"/><rect x="1232" y="358" width="2" height="2" fill="#555"/><rect x="1269" y="654" width="2" height="1" fill="#3c3c3c"/><rect x="1178" y="834" width="2" height="2" fill="#3c3c3c"/><rect x="1351" y="805" width="1" height="2" fill="#9a9a9a"/><rect x="1355" y="616" width="1" height="2" fill="#a8a8a8"/><rect x="1246" y="473" width="2" height="2" fill="#606060"/><rect x="1281" y="619" width="3" height="2" fill="#555"/><rect x="1358" y="539" width="1" height="2" fill="#9a9a9a"/><rect x="1151" y="910" width="2" height="1" fill="#a8a8a8"/><rect x="1328" y="865" width="3" height="2" fill="#3c3c3c"/><rect x="1158" y="476" width="2" height="2" fill="#4a4a4a"/><rect x="1273" y="380" width="2" height="3" fill="#4a4a4a"/><rect x="1319" y="867" width="2" height="3" fill="#3c3c3c"/><rect x="1233" y="441" width="3" height="2" fill="#555"/><rect x="1259" y="383" width="2" height="3" fill="#9a9a9a"/><rect x="1320" y="332" width="2" height="1" fill="#9a9a9a"/><rect x="1317" y="320" width="3" height="2" fill="#606060"/><rect x="1365" y="592" width="2" height="3" fill="#555"/><rect x="1298" y="628" width="2" height="3" fill="#555"/><rect x="1283" y="914" width="1" height="3" fill="#3c3c3c"/><rect x="1184" y="733" width="1" height="2" fill="#9a9a9a"/><rect x="1153" y="709" width="2" height="3" fill="#3c3c3c"/><rect x="1222" y="741" width="3" height="2" fill="#9a9a9a"/><rect x="1254" y="734" width="1" height="3" fill="#9a9a9a"/><rect x="1346" y="594" width="1" height="2" fill="#4a4a4a"/><rect x="1320" y="657" width="1" height="1" fill="#606060"/><rect x="1255" y="643" width="1" height="3" fill="#9a9a9a"/><rect x="1350" y="245" width="3" height="2" fill="#555"/><rect x="1256" y="744" width="2" height="2" fill="#a8a8a8"/><rect x="1354" y="886" width="2" height="3" fill="#a8a8a8"/><rect x="1298" y="370" width="3" height="2" fill="#606060"/><rect x="1365" y="904" width="3" height="2" fill="#555"/><rect x="1190" y="810" width="1" height="2" fill="#606060"/><rect x="1183" y="360" width="1" height="2" fill="#9a9a9a"/><rect x="1272" y="390" width="1" height="2" fill="#3c3c3c"/><rect x="1281" y="722" width="2" height="3" fill="#606060"/><rect x="1180" y="364" width="1" height="2" fill="#606060"/><rect x="1198" y="694" width="1" height="1" fill="#4a4a4a"/><rect x="1203" y="510" width="2" height="2" fill="#606060"/><rect x="1261" y="666" width="2" height="3" fill="#606060"/><rect x="1341" y="765" width="1" height="3" fill="#555"/><rect x="1353" y="711" width="2" height="2" fill="#606060"/><rect x="1343" y="840" width="2" height="2" fill="#a8a8a8"/><rect x="1307" y="904" width="1" height="3" fill="#9a9a9a"/><rect x="1272" y="686" width="1" height="2" fill="#a8a8a8"/><rect x="1358" y="430" width="1" height="2" fill="#3c3c3c"/><rect x="1335" y="606" width="2" height="2" fill="#4a4a4a"/><rect x="1277" y="559" width="1" height="1" fill="#4a4a4a"/><rect x="1327" y="373" width="1" height="2" fill="#3c3c3c"/><rect x="1280" y="459" width="1" height="3" fill="#4a4a4a"/><rect x="1359" y="748" width="1" height="1" fill="#555"/><rect x="1314" y="813" width="2" height="2" fill="#3c3c3c"/><rect x="1352" y="912" width="3" height="2" fill="#555"/><rect x="1263" y="918" width="1" height="3" fill="#9a9a9a"/><rect x="1341" y="391" width="1" height="1" fill="#3c3c3c"/><rect x="1155" y="662" width="1" height="3" fill="#606060"/><rect x="1269" y="760" width="2" height="2" fill="#606060"/><rect x="1306" y="656" width="1" height="2" fill="#555"/><rect x="1330" y="867" width="2" height="1" fill="#a8a8a8"/><rect x="1337" y="849" width="2" height="1" fill="#9a9a9a"/><rect x="1215" y="731" width="3" height="1" fill="#4a4a4a"/><rect x="1322" y="276" width="1" height="2" fill="#606060"/><rect x="1312" y="717" width="1" height="2" fill="#606060"/><rect x="1188" y="489" width="1" height="1" fill="#606060"/><rect x="1339" y="444" width="1" height="2" fill="#4a4a4a"/><rect x="1298" y="641" width="2" height="1" fill="#3c3c3c"/><rect x="1262" y="685" width="3" height="2" fill="#a8a8a8"/><rect x="1343" y="452" width="2" height="2" fill="#606060"/><rect x="1295" y="418" width="1" height="1" fill="#9a9a9a"/><rect x="1324" y="627" width="2" height="2" fill="#9a9a9a"/><rect x="1296" y="303" width="2" height="3" fill="#4a4a4a"/><rect x="1299" y="538" width="2" height="2" fill="#a8a8a8"/><rect x="1314" y="789" width="2" height="2" fill="#3c3c3c"/><rect x="1326" y="866" width="2" height="2" fill="#a8a8a8"/><rect x="1289" y="760" width="1" height="2" fill="#9a9a9a"/><rect x="1206" y="481" width="2" height="2" fill="#606060"/><rect x="1255" y="275" width="2" height="3" fill="#4a4a4a"/><rect x="1173" y="614" width="2" height="3" fill="#606060"/><rect x="1278" y="395" width="1" height="3" fill="#606060"/><rect x="1224" y="710" width="1" height="3" fill="#3c3c3c"/><rect x="1342" y="854" width="1" height="2" fill="#a8a8a8"/><rect x="1216" y="882" width="2" height="1" fill="#9a9a9a"/><rect x="1350" y="810" width="1" height="2" fill="#3c3c3c"/><rect x="1269" y="541" width="1" height="3" fill="#9a9a9a"/><rect x="1274" y="253" width="2" height="2" fill="#3c3c3c"/><rect x="1275" y="895" width="3" height="2" fill="#606060"/><rect x="1346" y="627" width="2" height="2" fill="#555"/><rect x="1216" y="772" width="2" height="2" fill="#9a9a9a"/><rect x="1285" y="428" width="3" height="1" fill="#555"/><rect x="1204" y="656" width="2" height="1" fill="#a8a8a8"/><rect x="1323" y="826" width="1" height="2" fill="#9a9a9a"/><rect x="1365" y="762" width="2" height="2" fill="#4a4a4a"/><rect x="1275" y="812" width="2" height="1" fill="#3c3c3c"/><rect x="1311" y="750" width="2" height="3" fill="#606060"/><rect x="1212" y="781" width="2" height="1" fill="#3c3c3c"/><rect x="1222" y="415" width="3" height="3" fill="#606060"/><rect x="1277" y="365" width="1" height="2" fill="#9a9a9a"/><rect x="1152" y="236" width="2" height="1" fill="#9a9a9a"/><rect x="1172" y="538" width="2" height="2" fill="#4a4a4a"/><rect x="1157" y="658" width="3" height="2" fill="#9a9a9a"/><rect x="1288" y="719" width="3" height="2" fill="#606060"/><rect x="1292" y="852" width="1" height="1" fill="#a8a8a8"/><rect x="1206" y="254" width="2" height="3" fill="#3c3c3c"/><rect x="1352" y="689" width="2" height="3" fill="#9a9a9a"/><rect x="1325" y="278" width="2" height="3" fill="#3c3c3c"/><rect x="1273" y="876" width="2" height="3" fill="#3c3c3c"/><rect x="1287" y="893" width="3" height="2" fill="#3c3c3c"/><rect x="1332" y="755" width="1" height="2" fill="#9a9a9a"/><rect x="1158" y="495" width="2" height="1" fill="#a8a8a8"/><rect x="1245" y="361" width="1" height="2" fill="#606060"/><rect x="1359" y="241" width="2" height="1" fill="#606060"/><rect x="1252" y="864" width="1" height="1" fill="#4a4a4a"/><rect x="1164" y="795" width="3" height="2" fill="#3c3c3c"/><rect x="1362" y="699" width="3" height="2" fill="#555"/><rect x="1278" y="462" width="1" height="3" fill="#4a4a4a"/><rect x="1300" y="612" width="3" height="1" fill="#4a4a4a"/><rect x="1151" y="354" width="3" height="2" fill="#606060"/><rect x="1300" y="777" width="1" height="2" fill="#4a4a4a"/><rect x="1288" y="591" width="1" height="1" fill="#9a9a9a"/><rect x="1285" y="771" width="1" height="2" fill="#4a4a4a"/><rect x="1175" y="596" width="2" height="2" fill="#606060"/><rect x="1316" y="686" width="1" height="1" fill="#4a4a4a"/><rect x="1298" y="899" width="1" height="2" fill="#a8a8a8"/><rect x="1349" y="267" width="1" height="3" fill="#555"/><rect x="1278" y="455" width="2" height="2" fill="#3c3c3c"/><rect x="1338" y="489" width="2" height="3" fill="#3c3c3c"/><rect x="1248" y="498" width="1" height="2" fill="#555"/><rect x="1288" y="653" width="3" height="2" fill="#3c3c3c"/><rect x="1204" y="530" width="3" height="2" fill="#9a9a9a"/><rect x="1344" y="519" width="2" height="1" fill="#606060"/><rect x="1327" y="543" width="3" height="1" fill="#a8a8a8"/><rect x="1308" y="886" width="2" height="2" fill="#a8a8a8"/><rect x="1276" y="905" width="1" height="3" fill="#4a4a4a"/><rect x="1321" y="486" width="1" height="1" fill="#606060"/><rect x="1343" y="460" width="2" height="2" fill="#a8a8a8"/><rect x="1296" y="844" width="2" height="3" fill="#9a9a9a"/><rect x="1259" y="522" width="2" height="2" fill="#606060"/><rect x="1255" y="594" width="3" height="2" fill="#606060"/><rect x="1325" y="880" width="2" height="1" fill="#3c3c3c"/><rect x="1167" y="344" width="1" height="3" fill="#4a4a4a"/><rect x="1289" y="431" width="1" height="2" fill="#606060"/><rect x="1199" y="487" width="1" height="2" fill="#555"/><rect x="1185" y="600" width="1" height="2" fill="#4a4a4a"/><rect x="1177" y="410" width="3" height="1" fill="#a8a8a8"/><rect x="1267" y="342" width="1" height="3" fill="#606060"/><rect x="1260" y="677" width="2" height="2" fill="#9a9a9a"/><rect x="1307" y="867" width="1" height="3" fill="#3c3c3c"/><rect x="1237" y="811" width="1" height="2" fill="#3c3c3c"/><rect x="1319" y="760" width="1" height="3" fill="#a8a8a8"/><rect x="1354" y="858" width="1" height="3" fill="#555"/><rect x="1240" y="536" width="2" height="3" fill="#4a4a4a"/><rect x="1330" y="643" width="2" height="3" fill="#9a9a9a"/><rect x="1303" y="752" width="1" height="3" fill="#555"/><rect x="1250" y="249" width="2" height="2" fill="#a8a8a8"/><rect x="1343" y="518" width="1" height="1" fill="#3c3c3c"/><rect x="1360" y="795" width="3" height="1" fill="#555"/><rect x="1340" y="324" width="2" height="2" fill="#606060"/><rect x="1287" y="890" width="2" height="1" fill="#9a9a9a"/><rect x="1279" y="345" width="2" height="2" fill="#555"/><rect x="1298" y="706" width="3" height="2" fill="#4a4a4a"/><rect x="1330" y="593" width="3" height="1" fill="#606060"/><rect x="1349" y="561" width="2" height="2" fill="#606060"/><rect x="1224" y="721" width="1" height="2" fill="#4a4a4a"/><rect x="1335" y="328" width="1" height="2" fill="#4a4a4a"/><rect x="1243" y="366" width="3" height="1" fill="#606060"/><rect x="1176" y="405" width="1" height="1" fill="#3c3c3c"/><rect x="1190" y="473" width="2" height="2" fill="#555"/><rect x="1202" y="624" width="3" height="1" fill="#9a9a9a"/><rect x="1245" y="892" width="2" height="3" fill="#606060"/><rect x="1196" y="387" width="2" height="1" fill="#606060"/><rect x="1302" y="615" width="2" height="3" fill="#3c3c3c"/><rect x="1298" y="811" width="2" height="2" fill="#606060"/><rect x="1253" y="699" width="2" height="1" fill="#606060"/><rect x="1245" y="685" width="1" height="3" fill="#606060"/><rect x="1343" y="347" width="1" height="2" fill="#4a4a4a"/><rect x="1279" y="915" width="2" height="3" fill="#555"/><rect x="1363" y="583" width="2" height="1" fill="#3c3c3c"/><rect x="1179" y="299" width="1" height="3" fill="#a8a8a8"/><rect x="1314" y="687" width="2" height="3" fill="#4a4a4a"/><rect x="1340" y="312" width="2" height="3" fill="#606060"/><rect x="1318" y="841" width="2" height="2" fill="#555"/><rect x="1305" y="567" width="2" height="3" fill="#606060"/><rect x="1271" y="338" width="2" height="3" fill="#9a9a9a"/><rect x="1360" y="656" width="2" height="2" fill="#3c3c3c"/><rect x="1225" y="743" width="2" height="3" fill="#3c3c3c"/><rect x="1242" y="915" width="1" height="2" fill="#4a4a4a"/><rect x="1201" y="446" width="1" height="2" fill="#3c3c3c"/><rect x="1277" y="911" width="2" height="2" fill="#9a9a9a"/><rect x="1294" y="345" width="2" height="2" fill="#606060"/><rect x="1287" y="903" width="3" height="2" fill="#555"/><rect x="1242" y="470" width="2" height="2" fill="#606060"/><rect x="1293" y="447" width="2" height="3" fill="#a8a8a8"/><rect x="1315" y="355" width="3" height="2" fill="#9a9a9a"/><rect x="1352" y="732" width="1" height="2" fill="#606060"/><rect x="1215" y="531" width="1" height="2" fill="#606060"/><rect x="1208" y="428" width="3" height="2" fill="#606060"/><rect x="1202" y="334" width="2" height="3" fill="#606060"/><rect x="1158" y="340" width="2" height="2" fill="#a8a8a8"/><rect x="1269" y="675" width="2" height="1" fill="#3c3c3c"/><rect x="1337" y="852" width="2" height="1" fill="#606060"/><rect x="1354" y="730" width="1" height="1" fill="#9a9a9a"/><rect x="1263" y="573" width="3" height="1" fill="#555"/><rect x="1312" y="393" width="1" height="1" fill="#4a4a4a"/><rect x="1254" y="263" width="1" height="2" fill="#aaaaaa"/><rect x="1250" y="282" width="3" height="2" fill="#b8b8b8"/><rect x="1250" y="272" width="2" height="2" fill="#9a9a9a"/><rect x="1218" y="341" width="1" height="3" fill="#b8b8b8"/><rect x="1230" y="361" width="2" height="2" fill="#aaaaaa"/><rect x="1233" y="279" width="1" height="3" fill="#3c3c3c"/><rect x="1192" y="375" width="3" height="2" fill="#4a4a4a"/><rect x="1267" y="231" width="2" height="1" fill="#9a9a9a"/><rect x="1235" y="321" width="3" height="1" fill="#4a4a4a"/><rect x="1216" y="355" width="3" height="3" fill="#9a9a9a"/><rect x="1197" y="384" width="1" height="1" fill="#b8b8b8"/><rect x="1260" y="267" width="2" height="2" fill="#b8b8b8"/><rect x="1281" y="227" width="3" height="3" fill="#3c3c3c"/><rect x="1273" y="225" width="1" height="1" fill="#3c3c3c"/><rect x="1249" y="253" width="2" height="3" fill="#b8b8b8"/><rect x="1249" y="288" width="2" height="2" fill="#3c3c3c"/><rect x="1227" y="328" width="2" height="1" fill="#9a9a9a"/><rect x="1237" y="286" width="2" height="1" fill="#2e2e2e"/><rect x="1194" y="371" width="1" height="2" fill="#3c3c3c"/><rect x="1253" y="263" width="3" height="3" fill="#4a4a4a"/><rect x="1265" y="245" width="1" height="1" fill="#b8b8b8"/><rect x="1235" y="296" width="3" height="1" fill="#3c3c3c"/><rect x="1224" y="353" width="2" height="2" fill="#b8b8b8"/><rect x="1246" y="313" width="2" height="2" fill="#b8b8b8"/><rect x="1212" y="339" width="2" height="1" fill="#4a4a4a"/><rect x="1199" y="393" width="2" height="2" fill="#aaaaaa"/><rect x="1218" y="337" width="2" height="2" fill="#b8b8b8"/><rect x="1243" y="294" width="3" height="3" fill="#aaaaaa"/><rect x="1254" y="265" width="2" height="1" fill="#9a9a9a"/><rect x="1224" y="375" width="1" height="1" fill="#4a4a4a"/><rect x="1215" y="318" width="2" height="1" fill="#aaaaaa"/><rect x="1270" y="230" width="3" height="2" fill="#9a9a9a"/><rect x="1257" y="249" width="2" height="2" fill="#2e2e2e"/><rect x="1258" y="273" width="2" height="3" fill="#4a4a4a"/><rect x="1198" y="390" width="2" height="3" fill="#4a4a4a"/><rect x="1246" y="303" width="3" height="1" fill="#aaaaaa"/><rect x="1198" y="357" width="1" height="1" fill="#3c3c3c"/><rect x="1271" y="236" width="2" height="3" fill="#9a9a9a"/><rect x="1259" y="294" width="1" height="2" fill="#4a4a4a"/><rect x="1188" y="387" width="1" height="3" fill="#3c3c3c"/><rect x="1277" y="248" width="2" height="1" fill="#b8b8b8"/><rect x="1230" y="319" width="2" height="3" fill="#2e2e2e"/><rect x="1223" y="307" width="1" height="1" fill="#9a9a9a"/><rect x="1222" y="335" width="1" height="2" fill="#4a4a4a"/><rect x="1243" y="317" width="2" height="1" fill="#2e2e2e"/><rect x="1234" y="292" width="2" height="3" fill="#b8b8b8"/><rect x="1283" y="219" width="3" height="2" fill="#b8b8b8"/><rect x="1209" y="385" width="2" height="1" fill="#2e2e2e"/><rect x="1208" y="368" width="1" height="3" fill="#aaaaaa"/><rect x="1238" y="287" width="3" height="1" fill="#2e2e2e"/><rect x="1215" y="375" width="2" height="3" fill="#b8b8b8"/><rect x="1255" y="257" width="2" height="3" fill="#aaaaaa"/><rect x="1253" y="233" width="2" height="2" fill="#9a9a9a"/><rect x="1193" y="373" width="3" height="1" fill="#9a9a9a"/><rect x="1203" y="354" width="3" height="1" fill="#2e2e2e"/><rect x="1246" y="306" width="2" height="2" fill="#aaaaaa"/><rect x="1216" y="327" width="3" height="1" fill="#9a9a9a"/><rect x="1262" y="270" width="2" height="1" fill="#aaaaaa"/><rect x="1229" y="290" width="1" height="3" fill="#2e2e2e"/><rect x="1224" y="311" width="2" height="2" fill="#4a4a4a"/><rect x="1227" y="319" width="3" height="1" fill="#3c3c3c"/><rect x="1217" y="366" width="2" height="2" fill="#aaaaaa"/><rect x="1217" y="337" width="2" height="2" fill="#3c3c3c"/><rect x="1278" y="264" width="2" height="3" fill="#2e2e2e"/><rect x="1247" y="295" width="1" height="1" fill="#b8b8b8"/><rect x="1229" y="290" width="3" height="2" fill="#aaaaaa"/><rect x="1200" y="353" width="3" height="2" fill="#2e2e2e"/><rect x="1266" y="242" width="1" height="3" fill="#3c3c3c"/><rect x="1210" y="375" width="2" height="2" fill="#b8b8b8"/><rect x="1203" y="366" width="3" height="1" fill="#9a9a9a"/><rect x="1254" y="301" width="3" height="2" fill="#9a9a9a"/><rect x="1263" y="225" width="2" height="3" fill="#9a9a9a"/><rect x="1280" y="229" width="3" height="2" fill="#9a9a9a"/><rect x="1206" y="342" width="2" height="1" fill="#9a9a9a"/><rect x="1227" y="288" width="3" height="1" fill="#b8b8b8"/><rect x="1278" y="231" width="1" height="2" fill="#b8b8b8"/><rect x="1229" y="292" width="2" height="2" fill="#b8b8b8"/><rect x="1246" y="303" width="3" height="2" fill="#9a9a9a"/><rect x="1257" y="273" width="2" height="3" fill="#b8b8b8"/><rect x="1227" y="336" width="3" height="2" fill="#b8b8b8"/><rect x="1216" y="337" width="2" height="3" fill="#3c3c3c"/><rect x="1250" y="259" width="2" height="1" fill="#3c3c3c"/><rect x="1243" y="247" width="3" height="2" fill="#3c3c3c"/><rect x="1257" y="256" width="2" height="2" fill="#b8b8b8"/><rect x="1268" y="236" width="1" height="1" fill="#4a4a4a"/><rect x="1235" y="292" width="2" height="2" fill="#4a4a4a"/><rect x="1200" y="380" width="2" height="1" fill="#b8b8b8"/><rect x="1202" y="368" width="1" height="2" fill="#9a9a9a"/><rect x="1200" y="368" width="1" height="3" fill="#2e2e2e"/><rect x="1235" y="309" width="2" height="2" fill="#3c3c3c"/><rect x="1212" y="335" width="3" height="3" fill="#2e2e2e"/><rect x="1249" y="255" width="1" height="1" fill="#9a9a9a"/><rect x="1198" y="385" width="3" height="2" fill="#4a4a4a"/><rect x="1241" y="309" width="3" height="2" fill="#b8b8b8"/><rect x="1230" y="342" width="3" height="1" fill="#3c3c3c"/><rect x="1203" y="360" width="3" height="3" fill="#b8b8b8"/><rect x="1249" y="282" width="1" height="3" fill="#aaaaaa"/><rect x="1207" y="384" width="2" height="2" fill="#2e2e2e"/><rect x="1261" y="290" width="2" height="3" fill="#2e2e2e"/><rect x="1214" y="386" width="2" height="2" fill="#9a9a9a"/><rect x="1199" y="360" width="2" height="2" fill="#2e2e2e"/><rect x="1219" y="357" width="2" height="3" fill="#9a9a9a"/><rect x="1241" y="304" width="3" height="3" fill="#4a4a4a"/><rect x="1206" y="366" width="2" height="2" fill="#2e2e2e"/><rect x="1261" y="235" width="2" height="3" fill="#aaaaaa"/><rect x="1259" y="273" width="2" height="3" fill="#3c3c3c"/><rect x="1278" y="219" width="2" height="1" fill="#4a4a4a"/><rect x="1221" y="344" width="1" height="2" fill="#4a4a4a"/><rect x="1222" y="329" width="1" height="2" fill="#4a4a4a"/><rect x="1236" y="318" width="2" height="3" fill="#aaaaaa"/><rect x="1239" y="312" width="2" height="2" fill="#4a4a4a"/><rect x="1253" y="259" width="2" height="3" fill="#9a9a9a"/><rect x="1232" y="314" width="2" height="2" fill="#9a9a9a"/><rect x="1260" y="226" width="1" height="1" fill="#2e2e2e"/><rect x="1243" y="296" width="1" height="2" fill="#b8b8b8"/><rect x="1222" y="306" width="3" height="2" fill="#aaaaaa"/><rect x="1225" y="308" width="3" height="3" fill="#9a9a9a"/><rect x="1212" y="363" width="3" height="1" fill="#b8b8b8"/><rect x="1219" y="306" width="3" height="2" fill="#2e2e2e"/><rect x="1223" y="346" width="1" height="3" fill="#9a9a9a"/><rect x="1258" y="242" width="2" height="1" fill="#4a4a4a"/><rect x="1243" y="276" width="1" height="1" fill="#3c3c3c"/><rect x="1194" y="361" width="2" height="2" fill="#3c3c3c"/><rect x="1257" y="251" width="2" height="1" fill="#2e2e2e"/><rect x="1229" y="288" width="2" height="2" fill="#9a9a9a"/><rect x="1211" y="360" width="2" height="3" fill="#b8b8b8"/><rect x="1227" y="301" width="2" height="1" fill="#aaaaaa"/><rect x="1216" y="336" width="3" height="2" fill="#aaaaaa"/><rect x="1263" y="222" width="2" height="3" fill="#2e2e2e"/><rect x="1203" y="361" width="2" height="3" fill="#b8b8b8"/><rect x="1256" y="240" width="1" height="3" fill="#aaaaaa"/><rect x="1238" y="254" width="1" height="3" fill="#aaaaaa"/><rect x="1273" y="252" width="2" height="3" fill="#aaaaaa"/><rect x="1242" y="288" width="3" height="3" fill="#2e2e2e"/><rect x="1242" y="302" width="2" height="2" fill="#2e2e2e"/><rect x="1204" y="371" width="1" height="1" fill="#aaaaaa"/><rect x="1263" y="252" width="1" height="1" fill="#4a4a4a"/><rect x="1198" y="381" width="2" height="1" fill="#2e2e2e"/><rect x="1216" y="345" width="2" height="2" fill="#4a4a4a"/><rect x="1270" y="259" width="1" height="1" fill="#3c3c3c"/><rect x="1206" y="345" width="3" height="1" fill="#4a4a4a"/><rect x="1257" y="232" width="3" height="1" fill="#9a9a9a"/><rect x="1225" y="328" width="1" height="1" fill="#aaaaaa"/><rect x="1230" y="337" width="3" height="1" fill="#b8b8b8"/><rect x="1234" y="302" width="2" height="1" fill="#aaaaaa"/><rect x="1211" y="381" width="1" height="1" fill="#9a9a9a"/><rect x="1189" y="378" width="2" height="1" fill="#2e2e2e"/><rect x="1189" y="381" width="3" height="2" fill="#b8b8b8"/><rect x="1259" y="252" width="2" height="3" fill="#aaaaaa"/><rect x="1226" y="322" width="1" height="1" fill="#b8b8b8"/><rect x="1228" y="321" width="2" height="3" fill="#4a4a4a"/><rect x="1237" y="327" width="2" height="1" fill="#b8b8b8"/><rect x="1192" y="394" width="2" height="1" fill="#b8b8b8"/><rect x="1272" y="239" width="1" height="1" fill="#b8b8b8"/><rect x="1245" y="246" width="3" height="2" fill="#aaaaaa"/><rect x="1274" y="228" width="1" height="3" fill="#9a9a9a"/><rect x="1211" y="344" width="2" height="2" fill="#3c3c3c"/><rect x="1218" y="348" width="1" height="2" fill="#4a4a4a"/><rect x="1195" y="382" width="1" height="2" fill="#b8b8b8"/><rect x="1199" y="380" width="2" height="3" fill="#3c3c3c"/><rect x="1245" y="260" width="2" height="2" fill="#b8b8b8"/><rect x="1219" y="345" width="3" height="1" fill="#4a4a4a"/><rect x="1217" y="318" width="2" height="1" fill="#aaaaaa"/><rect x="1268" y="244" width="2" height="3" fill="#b8b8b8"/><rect x="1217" y="362" width="2" height="3" fill="#aaaaaa"/><rect x="1214" y="371" width="1" height="2" fill="#9a9a9a"/><rect x="1204" y="366" width="3" height="2" fill="#4a4a4a"/><rect x="1246" y="311" width="1" height="2" fill="#9a9a9a"/><rect x="1227" y="317" width="2" height="1" fill="#aaaaaa"/><rect x="1217" y="358" width="3" height="1" fill="#3c3c3c"/><rect x="1255" y="256" width="1" height="1" fill="#9a9a9a"/><rect x="1254" y="295" width="2" height="2" fill="#3c3c3c"/><rect x="1264" y="244" width="1" height="2" fill="#aaaaaa"/><rect x="1226" y="352" width="3" height="1" fill="#b8b8b8"/><rect x="1255" y="308" width="1" height="2" fill="#4a4a4a"/><rect x="1199" y="362" width="1" height="2" fill="#2e2e2e"/><rect x="1246" y="270" width="1" height="3" fill="#2e2e2e"/><rect x="1246" y="272" width="3" height="1" fill="#aaaaaa"/><rect x="1205" y="350" width="3" height="2" fill="#aaaaaa"/><rect x="1213" y="338" width="1" height="2" fill="#aaaaaa"/><rect x="1248" y="279" width="1" height="3" fill="#3c3c3c"/><rect x="1211" y="380" width="2" height="2" fill="#9a9a9a"/><rect x="1210" y="345" width="1" height="1" fill="#3c3c3c"/><rect x="1227" y="279" width="2" height="2" fill="#aaaaaa"/><rect x="1205" y="368" width="2" height="3" fill="#4a4a4a"/><rect x="1260" y="268" width="2" height="1" fill="#3c3c3c"/><rect x="1242" y="297" width="3" height="2" fill="#3c3c3c"/><rect x="1194" y="384" width="1" height="2" fill="#3c3c3c"/><rect x="1212" y="318" width="2" height="3" fill="#aaaaaa"/><rect x="1192" y="381" width="2" height="1" fill="#9a9a9a"/><rect x="1214" y="366" width="1" height="3" fill="#3c3c3c"/><rect x="1213" y="339" width="3" height="3" fill="#4a4a4a"/><rect x="1204" y="362" width="1" height="2" fill="#2e2e2e"/><rect x="1270" y="233" width="2" height="2" fill="#3c3c3c"/><rect x="1231" y="325" width="1" height="1" fill="#3c3c3c"/><rect x="1251" y="273" width="2" height="2" fill="#aaaaaa"/><rect x="1254" y="266" width="2" height="1" fill="#2e2e2e"/><rect x="1217" y="369" width="1" height="2" fill="#3c3c3c"/><rect x="1249" y="283" width="2" height="3" fill="#aaaaaa"/><rect x="1207" y="369" width="2" height="1" fill="#3c3c3c"/><rect x="1250" y="257" width="3" height="3" fill="#3c3c3c"/><rect x="1203" y="370" width="2" height="1" fill="#4a4a4a"/><rect x="1247" y="259" width="2" height="3" fill="#aaaaaa"/><rect x="1206" y="374" width="3" height="3" fill="#aaaaaa"/><rect x="1251" y="231" width="2" height="2" fill="#aaaaaa"/><rect x="1232" y="305" width="3" height="3" fill="#9a9a9a"/><rect x="1224" y="297" width="1" height="1" fill="#3c3c3c"/><rect x="1198" y="374" width="2" height="2" fill="#9a9a9a"/><rect x="1185" y="366" width="2" height="2" fill="#aaaaaa"/><rect x="1265" y="229" width="2" height="1" fill="#aaaaaa"/><rect x="1260" y="227" width="3" height="2" fill="#9a9a9a"/><rect x="1243" y="285" width="3" height="1" fill="#3c3c3c"/><rect x="1238" y="298" width="1" height="2" fill="#aaaaaa"/><rect x="1223" y="299" width="2" height="1" fill="#2e2e2e"/><rect x="1271" y="233" width="2" height="3" fill="#4a4a4a"/><rect x="1252" y="252" width="2" height="1" fill="#b8b8b8"/><rect x="1237" y="332" width="2" height="1" fill="#4a4a4a"/><rect x="1232" y="285" width="3" height="3" fill="#b8b8b8"/><rect x="1255" y="207" width="2" height="2" fill="#3c3c3c"/><rect x="1254" y="252" width="3" height="3" fill="#9a9a9a"/><rect x="1260" y="284" width="3" height="3" fill="#9a9a9a"/><rect x="1244" y="258" width="2" height="1" fill="#aaaaaa"/><rect x="1200" y="379" width="3" height="3" fill="#4a4a4a"/><rect x="1234" y="283" width="3" height="3" fill="#aaaaaa"/><rect x="1239" y="267" width="1" height="1" fill="#3c3c3c"/><rect x="1209" y="387" width="3" height="2" fill="#3c3c3c"/><rect x="1208" y="385" width="3" height="1" fill="#4a4a4a"/><rect x="1210" y="321" width="1" height="1" fill="#2e2e2e"/><rect x="1228" y="345" width="3" height="1" fill="#3c3c3c"/><rect x="1264" y="251" width="2" height="1" fill="#4a4a4a"/><rect x="1224" y="334" width="1" height="1" fill="#4a4a4a"/><rect x="1202" y="369" width="1" height="1" fill="#aaaaaa"/><rect x="1239" y="286" width="2" height="1" fill="#3c3c3c"/><rect x="1253" y="265" width="2" height="3" fill="#aaaaaa"/><rect x="1191" y="377" width="3" height="2" fill="#3c3c3c"/><rect x="1272" y="223" width="3" height="3" fill="#3c3c3c"/><rect x="1247" y="303" width="3" height="2" fill="#aaaaaa"/><rect x="1279" y="231" width="3" height="2" fill="#b8b8b8"/><rect x="1210" y="358" width="2" height="2" fill="#3c3c3c"/><rect x="1250" y="246" width="3" height="3" fill="#3c3c3c"/><rect x="1230" y="345" width="1" height="1" fill="#3c3c3c"/><rect x="1245" y="263" width="1" height="3" fill="#b8b8b8"/><rect x="1219" y="350" width="1" height="2" fill="#2e2e2e"/><rect x="1199" y="349" width="3" height="2" fill="#3c3c3c"/><rect x="1242" y="263" width="1" height="3" fill="#b8b8b8"/><rect x="1212" y="337" width="3" height="1" fill="#9a9a9a"/><rect x="1268" y="236" width="2" height="2" fill="#b8b8b8"/><rect x="1211" y="348" width="2" height="3" fill="#9a9a9a"/><rect x="1268" y="234" width="2" height="1" fill="#aaaaaa"/><rect x="1260" y="244" width="3" height="1" fill="#2e2e2e"/><rect x="1228" y="335" width="3" height="2" fill="#3c3c3c"/><rect x="1268" y="259" width="2" height="2" fill="#b8b8b8"/><rect x="1260" y="223" width="1" height="2" fill="#b8b8b8"/><rect x="1249" y="273" width="3" height="1" fill="#3c3c3c"/><rect x="1243" y="287" width="3" height="1" fill="#2e2e2e"/><rect x="1250" y="286" width="2" height="1" fill="#b8b8b8"/><rect x="1263" y="254" width="1" height="2" fill="#4a4a4a"/><rect x="1231" y="320" width="3" height="2" fill="#2e2e2e"/><rect x="1260" y="263" width="1" height="2" fill="#b8b8b8"/><rect x="1240" y="278" width="1" height="3" fill="#4a4a4a"/>
</g>
<polygon points="824.3,274.3 827.5,279.1 823.6,295.0 822.8,307.7 829.9,312.5 834.7,329.9 839.4,345.8 843.4,366.0 849.6,375.9 841.7,389.8 825.8,396.7 815.8,405.7 794.0,417.6 778.1,425.5 770.2,435.5 760.2,447.4 759.2,459.3 748.3,475.2 750.3,489.1 762.2,503.0 774.1,512.9 777.1,532.8 779.7,558.0 784.5,589.0 788.0,612.8 786.8,627.1 788.0,636.7 777.3,639.0 751.1,651.0 734.4,662.9 729.6,681.9 722.5,686.0 721.3,707.4 710.6,714.6 693.9,719.4 677.2,725.3 676.0,705.0 677.2,686.0 679.6,653.3 682.0,627.1 689.1,617.6 696.3,603.3 702.2,592.6 693.9,591.4 686.7,610.4 674.8,612.8 660.5,620.0 651.0,631.9 651.0,608.0 665.3,579.5 679.6,565.2 691.5,531.8 701.0,493.7 703.4,467.4 715.3,457.9 720.5,445.4 726.5,446.4 734.4,441.4 742.4,437.5 748.3,435.5 750.3,419.6 756.3,417.6 770.2,425.5 778.1,411.6 778.1,399.7 784.1,385.8 790.0,381.8 794.0,375.9 795.7,366.0 798.1,341.0 801.3,314.0 806.1,306.1 810.8,309.3 812.0,300.0 820.4,279.1" fill="#fff"/>
<polygon points="797.0,401.7 803.9,397.7 809.9,402.7 815.8,405.7 808.0,412.0 794.0,417.6 793.0,410.0" fill="#2e2e2e"/>
<polygon points="1057.8,608.1 1069.7,609.3 1079.3,622.4 1088.8,629.5 1090.0,643.8 1086.4,651.0 1098.3,655.7 1105.5,670.0 1106.7,686.0 1103.1,690.8 1110.3,705.0 1122.2,712.2 1129.3,726.5 1131.0,733.7 1138.1,755.1 1142.9,767.0 1147.7,788.5 1146.5,809.9 1144.1,829.0 1135.8,836.1 1131.0,833.8 1124.6,833.8 1112.6,827.8 1103.1,833.8 1096.0,843.3 1088.8,838.5 1085.2,821.8 1081.7,814.7 1075.7,819.5 1072.1,831.4 1062.6,829.0 1061.4,795.6 1053.0,805.2 1053.0,790.9 1062.6,786.1 1060.2,759.9 1048.3,752.7 1045.9,728.9 1036.4,726.5 1034.0,709.8 1034.0,686.0 1030.4,655.7 1038.8,646.2 1044.7,636.7 1048.3,622.4 1055.4,612.8" fill="#fff"/>
<polygon points="1269.2,615.2 1274.0,615.7 1281.1,627.1 1283.5,634.3 1290.7,639.0 1297.8,653.3 1302.6,660.5 1303.8,672.4 1295.4,684.3 1288.3,684.3 1285.9,672.4 1281.1,665.3 1278.8,653.3 1281.1,643.8 1278.8,636.7 1271.6,629.5 1266.8,622.4" fill="#fff"/>
<polygon points="1271.6,708.6 1277.6,709.8 1280.0,715.8 1285.9,714.1 1293.0,715.8 1297.8,713.4 1302.6,717.0 1305.0,724.1 1300.2,726.5 1295.4,725.3 1293.0,731.3 1300.2,738.4 1302.6,745.6 1307.4,752.7 1312.1,771.8 1318.1,778.9 1318.1,790.9 1314.5,798.0 1309.7,795.6 1305.0,790.9 1295.4,783.7 1285.9,776.6 1278.8,769.4 1276.4,750.3 1269.2,745.6 1271.6,733.7 1269.2,724.1" fill="#fff"/>
<polygon points="1293.2,206.0 1302.3,220.9 1305.7,224.8 1308.5,223.0 1308.5,216.7 1305.7,208.3 1305.0,206.0" fill="#fff"/>
<polygon points="1308.5,206.0 1309.2,216.7 1312.7,218.1 1316.9,216.7 1317.6,210.5 1318.9,206.0" fill="#fff"/>
<polygon points="1352.3,206.0 1354.4,213.9 1355.1,217.4 1364.8,225.0 1366.0,225.0 1366.0,206.0" fill="#fff"/>
<polygon points="1366.0,257.7 1363.4,257.7 1362.0,250.0 1357.9,244.5 1349.5,243.1 1338.4,246.6 1332.9,237.6 1325.9,234.1 1321.7,236.2 1324.5,243.1 1332.9,252.9 1341.2,254.9 1344.7,258.4 1345.4,268.2 1347.5,283.4 1344.7,289.0 1353.7,301.5 1355.8,309.9 1359.3,316.8 1364.8,318.9 1357.2,321.0 1357.2,325.2 1366.0,329.3" fill="#fff"/>
<polygon points="651.0,733.7 659.3,736.0 658.1,755.1 655.8,769.4 654.6,790.9 651.0,790.9" fill="#fff"/>
<ellipse cx="1022.4" cy="679" rx="5" ry="8" fill="#fff"/>
<circle cx="833.4" cy="308.5" r="3.5" fill="#fff"/>
<circle cx="845.2" cy="480.6" r="3.5" fill="#fff"/>
<circle cx="833.3" cy="603.3" r="4.0" fill="#fff"/>
<circle cx="674.8" cy="670.0" r="3.5" fill="#fff"/>
<circle cx="1284.7" cy="699.1" r="3.6" fill="#fff"/>
<circle cx="1299.0" cy="809.9" r="3.6" fill="#fff"/>
<circle cx="833.7" cy="603.2" r="4.8" fill="#fff"/>
<circle cx="865.5" cy="616.3" r="7.1" fill="#fff"/>
<circle cx="863.5" cy="623.5" r="5.7" fill="#fff"/>
<circle cx="913.2" cy="583.8" r="3.8" fill="#fff"/>
<circle cx="923.1" cy="585.3" r="3.8" fill="#fff"/>
<circle cx="937.0" cy="593.3" r="4.8" fill="#fff"/>
<circle cx="907.2" cy="602.4" r="8.6" fill="#fff"/>
<circle cx="911.2" cy="606.4" r="5.7" fill="#fff"/>
<circle cx="941.0" cy="604.4" r="8.6" fill="#fff"/>
<circle cx="925.1" cy="613.2" r="5.7" fill="#fff"/>
<circle cx="889.3" cy="622.3" r="6.7" fill="#fff"/>
<circle cx="909.2" cy="618.3" r="5.7" fill="#fff"/>
<circle cx="901.2" cy="626.3" r="6.7" fill="#fff"/>
<circle cx="905.2" cy="630.2" r="4.8" fill="#fff"/>
<circle cx="889.3" cy="632.2" r="6.7" fill="#fff"/>
<circle cx="881.4" cy="637.0" r="6.7" fill="#fff"/>
<circle cx="871.5" cy="640.2" r="5.7" fill="#fff"/>
<circle cx="863.5" cy="640.2" r="4.8" fill="#fff"/>
<circle cx="897.3" cy="648.1" r="5.7" fill="#fff"/>
<circle cx="889.3" cy="652.1" r="5.7" fill="#fff"/>
<circle cx="913.2" cy="646.1" r="4.8" fill="#fff"/>
<circle cx="921.1" cy="654.1" r="4.8" fill="#fff"/>
<circle cx="905.2" cy="658.0" r="6.7" fill="#fff"/>
<circle cx="901.2" cy="668.0" r="5.7" fill="#fff"/>
<circle cx="873.4" cy="656.1" r="3.8" fill="#fff"/>
<circle cx="937.0" cy="558.7" r="4.8" fill="#fff"/>
<circle cx="1028.4" cy="598.5" r="3.8" fill="#fff"/>
<circle cx="849.6" cy="677.1" r="4.8" fill="#fff"/>
<circle cx="790.0" cy="687.8" r="3.8" fill="#fff"/>
<circle cx="879.4" cy="683.9" r="4.8" fill="#fff"/>
<circle cx="888.5" cy="683.9" r="3.3" fill="#fff"/>
<circle cx="821.8" cy="699.7" r="6.7" fill="#fff"/>
<circle cx="837.7" cy="707.7" r="9.5" fill="#fff"/>
<circle cx="829.7" cy="701.7" r="7.1" fill="#fff"/>
<circle cx="859.5" cy="703.7" r="6.7" fill="#fff"/>
<circle cx="867.5" cy="695.8" r="7.1" fill="#fff"/>
<circle cx="861.5" cy="715.6" r="5.7" fill="#fff"/>
<circle cx="881.4" cy="719.6" r="6.7" fill="#fff"/>
<circle cx="849.6" cy="725.6" r="5.7" fill="#fff"/>
<circle cx="885.4" cy="727.6" r="5.7" fill="#fff"/>
<circle cx="823.8" cy="721.6" r="3.8" fill="#fff"/>
<circle cx="853.6" cy="738.7" r="4.8" fill="#fff"/>
<circle cx="875.4" cy="739.5" r="4.8" fill="#fff"/>
<circle cx="740.4" cy="729.5" r="5.7" fill="#fff"/>
<circle cx="730.4" cy="735.5" r="5.7" fill="#fff"/>
<circle cx="728.5" cy="749.4" r="4.8" fill="#fff"/>
<circle cx="742.4" cy="751.4" r="5.7" fill="#fff"/>
<circle cx="758.2" cy="766.5" r="4.8" fill="#fff"/>
<circle cx="823.8" cy="761.3" r="5.7" fill="#fff"/>
<circle cx="832.9" cy="763.3" r="4.8" fill="#fff"/>
<circle cx="853.6" cy="764.1" r="6.7" fill="#fff"/>
<circle cx="857.6" cy="769.3" r="5.7" fill="#fff"/>
<circle cx="869.5" cy="757.3" r="6.7" fill="#fff"/>
<circle cx="883.4" cy="760.5" r="4.8" fill="#fff"/>
<circle cx="879.4" cy="775.2" r="6.7" fill="#fff"/>
<circle cx="857.6" cy="783.2" r="7.6" fill="#fff"/>
<circle cx="873.4" cy="785.2" r="6.7" fill="#fff"/>
<circle cx="825.8" cy="782.4" r="5.7" fill="#fff"/>
<circle cx="839.7" cy="787.1" r="6.7" fill="#fff"/>
<circle cx="831.7" cy="795.1" r="4.8" fill="#fff"/>
<circle cx="817.8" cy="795.1" r="4.8" fill="#fff"/>
<circle cx="766.2" cy="787.1" r="4.8" fill="#fff"/>
<circle cx="750.3" cy="799.1" r="6.7" fill="#fff"/>
<circle cx="786.1" cy="802.2" r="5.7" fill="#fff"/>
<circle cx="796.0" cy="803.8" r="5.7" fill="#fff"/>
<circle cx="788.0" cy="809.0" r="4.8" fill="#fff"/>
<circle cx="819.8" cy="805.0" r="8.6" fill="#fff"/>
<circle cx="831.7" cy="809.0" r="5.7" fill="#fff"/>
<circle cx="873.4" cy="814.9" r="4.8" fill="#fff"/>
<circle cx="784.1" cy="822.9" r="3.8" fill="#fff"/>
<circle cx="801.9" cy="831.6" r="6.7" fill="#fff"/>
<circle cx="813.9" cy="832.8" r="7.6" fill="#fff"/>
<circle cx="825.8" cy="828.8" r="6.7" fill="#fff"/>
<circle cx="833.7" cy="832.8" r="5.7" fill="#fff"/>
<circle cx="859.5" cy="830.8" r="4.8" fill="#fff"/>
<circle cx="782.1" cy="832.8" r="4.8" fill="#fff"/>
<circle cx="774.1" cy="844.7" r="4.8" fill="#fff"/>
<circle cx="841.7" cy="842.7" r="6.7" fill="#fff"/>
<circle cx="851.6" cy="850.7" r="6.7" fill="#fff"/>
<circle cx="873.4" cy="844.7" r="6.7" fill="#fff"/>
<circle cx="909.2" cy="844.7" r="4.8" fill="#fff"/>
<circle cx="730.4" cy="850.7" r="5.7" fill="#fff"/>
<circle cx="827.8" cy="852.7" r="4.8" fill="#fff"/>
<circle cx="865.5" cy="862.6" r="7.6" fill="#fff"/>
<circle cx="871.5" cy="870.6" r="5.7" fill="#fff"/>
<circle cx="889.3" cy="858.6" r="6.7" fill="#fff"/>
<circle cx="901.2" cy="858.6" r="5.7" fill="#fff"/>
<circle cx="891.3" cy="872.5" r="6.7" fill="#fff"/>
<circle cx="845.6" cy="872.5" r="7.6" fill="#fff"/>
<circle cx="817.8" cy="874.5" r="6.7" fill="#fff"/>
<circle cx="805.9" cy="874.5" r="5.7" fill="#fff"/>
<circle cx="857.6" cy="884.5" r="5.7" fill="#fff"/>
<circle cx="684.8" cy="880.5" r="4.8" fill="#fff"/>
<circle cx="700.7" cy="884.5" r="3.8" fill="#fff"/>
<circle cx="746.3" cy="904.3" r="3.8" fill="#fff"/>
<circle cx="801.9" cy="904.3" r="7.6" fill="#fff"/>
<circle cx="817.8" cy="898.4" r="8.6" fill="#fff"/>
<circle cx="831.7" cy="900.3" r="7.6" fill="#fff"/>
<circle cx="845.6" cy="904.3" r="7.6" fill="#fff"/>
<circle cx="861.5" cy="904.3" r="6.7" fill="#fff"/>
<circle cx="792.0" cy="912.3" r="6.7" fill="#fff"/>
<circle cx="813.9" cy="912.3" r="6.7" fill="#fff"/>
<circle cx="877.4" cy="908.3" r="6.7" fill="#fff"/>
<circle cx="893.3" cy="902.3" r="6.7" fill="#fff"/>
<circle cx="907.2" cy="906.3" r="5.7" fill="#fff"/>
<circle cx="929.1" cy="910.3" r="6.7" fill="#fff"/>
<circle cx="937.0" cy="908.3" r="5.7" fill="#fff"/>
<circle cx="1002.5" cy="874.5" r="5.7" fill="#fff"/>
<circle cx="1004.5" cy="884.5" r="5.7" fill="#fff"/>
<polygon points="857.9,427.8 869.8,418.8 877.8,416.8 888.7,408.9 894.6,401.9 907.6,398.9 919.5,397.9 925.4,399.9 931.4,397.9 947.3,398.3 971.1,420.8 973.1,425.8 975.1,447.6 983.1,458.5 987.0,465.5 986.0,474.4 993.0,476.4 1000.9,481.4 1008.9,470.5 1013.9,470.5 1017.8,477.4 1014.8,489.3 1007.9,498.3 1017.8,507.2 1028.8,513.2 1035.7,533.1 1042.7,521.1 1062.5,522.1 1066.5,529.1 1068.5,537.0 1067.5,541.0 1096.3,542.6 1092.3,558.9 1080.4,567.8 1070.5,569.8 1058.6,575.8 1046.6,570.8 1034.7,560.9 1028.8,564.8 1012.9,571.8 997.0,572.8 989.0,576.8 975.1,582.7 967.2,574.8 957.2,554.9 945.3,553.9 933.4,550.9 926.4,538.0 915.5,545.0 905.6,549.0 897.6,551.9 887.7,547.0 873.8,537.0 863.8,529.1 857.9,519.1 851.9,515.2 847.0,512.2 847.9,509.2 854.9,507.2 852.9,495.3 861.9,487.4 858.9,465.5 861.9,445.6 865.8,442.7 869.8,436.7 867.8,434.7 860.9,431.7" fill="#2350ec" stroke="#000" stroke-width="1"/>
</svg>
<div class="t" style="left:166px;top:165px;font-size:9.5px">Browser Panel</div>
<div class="box" style="left:50px;top:213px;width:322px;height:350px"></div>
<div class="t" style="left:95px;top:218px">Project home</div>
<div class="t" style="left:95px;top:234px">Home</div>
<div class="t" style="left:95px;top:250px">Favourites</div>
<div class="t" style="left:95px;top:266px">C:/</div>
<div class="t" style="left:95px;top:282px">D:/</div>
<div class="t" style="left:95px;top:298px">E:/</div>
<div class="t" style="left:95px;top:314px">DB2</div>
<div class="t" style="left:95px;top:330px">MSSQL</div>
<div class="t" style="left:95px;top:346px">Oracle</div>
<div class="t" style="left:95px;top:362px">PostGIS</div>
<div class="t" style="left:95px;top:378px">SpatiaLite</div>
<div class="t" style="left:95px;top:394px">ArcGisFeatureServer</div>
<div class="t" style="left:95px;top:410px">ArcGisMapServer</div>
<div class="t" style="left:95px;top:426px">OWS</div>
<div class="t" style="left:95px;top:442px">Tile Server (XYZ)</div>
<div class="t" style="left:95px;top:458px">WCS</div>
<div class="t" style="left:95px;top:474px">WFS</div>
<div class="t" style="left:95px;top:490px">WMS</div>
<div class="t" style="left:169px;top:572px;font-size:9.5px">Layers Panel</div>
<div class="a" style="left:50px;top:620px;width:322px;height:358px;background:#fff;border:1px solid #0078d7;border-radius:2px"></div>
<div class="a" style="left:51px;top:622px;width:302px;height:16px;background:#0078d7"></div>
<div class="t b" style="left:115px;top:625px;font-size:12px;color:#fff;text-decoration:underline">Empedrado</div>
<div class="t b" style="left:115px;top:641px;font-size:12px;color:#000">dNBR</div>
<div class="t" style="left:115px;top:657px">-0.974355</div>
<div class="t" style="left:115px;top:673px">1</div>
<div class="t b" style="left:115px;top:689px;font-size:12px;color:#000">Post_NBR.tif</div>
<div class="t" style="left:115px;top:705px">-0.192404</div>
<div class="t" style="left:115px;top:721px">0.80721</div>
<div class="t b" style="left:115px;top:737px;font-size:12px;color:#000">Pre_NBR.tif</div>
<div class="t" style="left:115px;top:753px">-0.0239336</div>
<div class="t" style="left:115px;top:769px">0.789607</div>
<div class="t b" style="left:115px;top:785px;font-size:12px;color:#000">clouds_december</div>
<div class="t b" style="left:115px;top:801px;font-size:12px;color:#000">clouds_february</div>
<div class="t b" style="left:115px;top:817px;font-size:12px;color:#000">RT_T18HYF_20170218T143751_B12</div>
<div class="t" style="left:115px;top:833px">0.0014522</div>
<div class="t" style="left:115px;top:849px">0.288119</div>
<div class="t b" style="left:115px;top:865px;font-size:12px;color:#000">RT_T18HYF_20170218T143751_B8A</div>
<div class="t" style="left:115px;top:881px">0.0111816</div>
<div class="t" style="left:115px;top:897px">0.458032</div>
<div class="t b" style="left:115px;top:913px;font-size:12px;color:#000">RT_T18HYF_20161220T143742_B12</div>
<div class="t" style="left:115px;top:929px">0.0070517</div>
<div class="t" style="left:115px;top:945px">0.279161</div>
<div class="t b" style="left:115px;top:961px;font-size:12px;color:#000">RT_T18HYF_20161220T143742_B8A</div>
<div class="t" style="left:3px;top:988px">Toggles the editing state of the current layer</div>
<div class="t" style="left:714px;top:988px">Coordinate</div>
<div class="a" style="left:772px;top:985px;width:218px;height:19px;background:#fff;border:1px solid #adadad"></div>
<div class="t" style="left:839px;top:988px">856603,6054215</div>
<div class="t" style="left:1024px;top:988px">Scale</div>
<div class="a" style="left:1053px;top:985px;width:88px;height:19px;background:#fff;border:1px solid #adadad"></div>
<div class="t" style="left:1058px;top:988px">1:581,071</div>
<div class="t" style="left:1176px;top:988px">Magnifier</div>
<div class="a" style="left:1224px;top:984px;width:76px;height:20px;background:#fff;border:1px solid #adadad"></div>
<div class="t" style="left:1229px;top:988px">100%</div>
<div class="t" style="left:1309px;top:988px">Rotation</div>
<div class="a" style="left:1359px;top:984px;width:76px;height:20px;background:#fff;border:1px solid #adadad"></div>
<div class="t" style="left:1364px;top:988px">0.0</div>
<div class="t" style="left:1459px;top:988px">Render</div>
<div class="t" style="left:1531px;top:988px;letter-spacing:-0.25px">EPSG:32718 (OTF)</div>
<svg class="a" style="left:0;top:0" width="1675" height="1007"><path d="M2,16c1,-5 3,-10 8,-12l2,-2l-1,3c1,4 0,9 -4,11c-2,1 -4,1 -5,0z" fill="#d8e878" stroke="#6a9a20" stroke-width="0.8"/><path d="M4,15l8,-12" stroke="#2a7a20" stroke-width="1.2"/><path d="M9,2l4,0l-1,3z" fill="#2a8a30"/><path d="M1555,9.5h10" stroke="#000"/><rect x="1601.5" y="6.5" width="7" height="7" fill="none" stroke="#000"/><path d="M1603.5,6.5v-2h7v7h-2" fill="none" stroke="#000"/><path d="M1647,4l10,10M1657,4l-10,10" stroke="#000" stroke-width="1.1"/><rect x="5" y="169" width="2" height="2" fill="#bdbdbd"/><rect x="6" y="170" width="1" height="1" fill="#fff"/><rect x="7" y="171" width="2" height="2" fill="#bdbdbd"/><rect x="8" y="172" width="1" height="1" fill="#fff"/><rect x="11" y="169" width="2" height="2" fill="#bdbdbd"/><rect x="12" y="170" width="1" height="1" fill="#fff"/><rect x="13" y="171" width="2" height="2" fill="#bdbdbd"/><rect x="14" y="172" width="1" height="1" fill="#fff"/><rect x="17" y="169" width="2" height="2" fill="#bdbdbd"/><rect x="18" y="170" width="1" height="1" fill="#fff"/><rect x="19" y="171" width="2" height="2" fill="#bdbdbd"/><rect x="20" y="172" width="1" height="1" fill="#fff"/><rect x="23" y="169" width="2" height="2" fill="#bdbdbd"/><rect x="24" y="170" width="1" height="1" fill="#fff"/><rect x="25" y="171" width="2" height="2" fill="#bdbdbd"/><rect x="26" y="172" width="1" height="1" fill="#fff"/><rect x="29" y="169" width="2" height="2" fill="#bdbdbd"/><rect x="30" y="170" width="1" height="1" fill="#fff"/><rect x="31" y="171" width="2" height="2" fill="#bdbdbd"/><rect x="32" y="172" width="1" height="1" fill="#fff"/><rect x="35" y="169" width="2" height="2" fill="#bdbdbd"/><rect x="36" y="170" width="1" height="1" fill="#fff"/><rect x="37" y="171" width="2" height="2" fill="#bdbdbd"/><rect x="38" y="172" width="1" height="1" fill="#fff"/><rect x="41" y="169" width="2" height="2" fill="#bdbdbd"/><rect x="42" y="170" width="1" height="1" fill="#fff"/><rect x="43" y="171" width="2" height="2" fill="#bdbdbd"/><rect x="44" y="172" width="1" height="1" fill="#fff"/><path d="M7,180l6.0,13.0l6.0,-13.0h6.0" fill="none" stroke="#3a5a7a" stroke-width="1.3"/><circle cx="7" cy="180" r="1.8" fill="#f0f0f0" stroke="#3a5a7a" stroke-width="1.1"/><circle cx="13.0" cy="193.0" r="1.8" fill="#f0f0f0" stroke="#3a5a7a" stroke-width="1.1"/><circle cx="19.0" cy="180" r="1.8" fill="#f0f0f0" stroke="#3a5a7a" stroke-width="1.1"/><circle cx="25.0" cy="180" r="1.8" fill="#f0f0f0" stroke="#3a5a7a" stroke-width="1.1"/><rect x="19.5" y="192" width="9.5" height="9.5" rx="1.5" fill="#5a9a5a"/><path d="M24.25,194v5.5M21.5,196.75h5.5" stroke="#fff" stroke-width="1.8"/><g><rect x="5.0" y="212.0" width="6.6" height="6.6" fill="#223a5a"/><rect x="11.5" y="212.0" width="6.6" height="6.6" fill="#6a9ad0"/><rect x="18.0" y="212.0" width="6.6" height="6.6" fill="#223a5a"/><rect x="5.0" y="218.5" width="6.6" height="6.6" fill="#6a9ad0"/><rect x="11.5" y="218.5" width="6.6" height="6.6" fill="#223a5a"/><rect x="18.0" y="218.5" width="6.6" height="6.6" fill="#6a9ad0"/><rect x="5.0" y="225.0" width="6.6" height="6.6" fill="#223a5a"/><rect x="11.5" y="225.0" width="6.6" height="6.6" fill="#6a9ad0"/><rect x="18.0" y="225.0" width="6.6" height="6.6" fill="#223a5a"/></g><rect x="19.5" y="226.5" width="9.5" height="9.5" rx="1.5" fill="#5a9a5a"/><path d="M24.25,228.5v5.5M21.5,231.25h5.5" stroke="#fff" stroke-width="1.8"/><path d="M6,269c3,-10 10,-20 22,-24c-3,6 -8,14 -14,17c-3,2 -6,4 -8,7z" fill="#6a9ad0" stroke="#2a4a70" stroke-width="0.9"/><rect x="19.5" y="260" width="9.5" height="9.5" rx="1.5" fill="#5a9a5a"/><path d="M24.25,262v5.5M21.5,264.75h5.5" stroke="#fff" stroke-width="1.8"/><path d="M6,289c-1,-5 2,-9 7,-9c4,0 8,1 10,4c2,4 0,8 -3,9v4c0,1 -2,1 -3,0v-4h-3v4c0,1 -2,1 -3,0v-3c-3,0 -5,-2 -5,-5z" fill="#5b8ac5" stroke="#2a4a70" stroke-width="0.9"/><rect x="19.5" y="295" width="9.5" height="9.5" rx="1.5" fill="#5a9a5a"/><path d="M24.25,297v5.5M21.5,299.75h5.5" stroke="#fff" stroke-width="1.8"/><path d="M35.5,289.25h8l-4.0,4.5z" fill="#000"/><circle cx="16.5" cy="323.5" r="11" fill="#5b8ac5" stroke="#3a6aa0" stroke-width="0.8"/><ellipse cx="16.5" cy="323.5" rx="4.95" ry="11" fill="none" stroke="#cfe0f4" stroke-width="0.9"/><path d="M5.5,323.5h22M7.15,318.0h18.7M7.15,329.0h18.7M16.5,312.5v22" stroke="#cfe0f4" stroke-width="0.9"/><rect x="19.5" y="328.5" width="9.5" height="9.5" rx="1.5" fill="#5a9a5a"/><path d="M24.25,330.5v5.5M21.5,333.25h5.5" stroke="#fff" stroke-width="1.8"/><path d="M35.5,322.75h8l-4.0,4.5z" fill="#000"/><circle cx="16.5" cy="358" r="11" fill="#2a4a78" stroke="#3a6aa0" stroke-width="0.8"/><ellipse cx="16.5" cy="358" rx="4.95" ry="11" fill="none" stroke="#cfe0f4" stroke-width="0.9"/><path d="M5.5,358h22M7.15,352.5h18.7M7.15,363.5h18.7M16.5,347v22" stroke="#cfe0f4" stroke-width="0.9"/><rect x="19.5" y="363" width="9.5" height="9.5" rx="1.5" fill="#5a9a5a"/><path d="M24.25,365v5.5M21.5,367.75h5.5" stroke="#fff" stroke-width="1.8"/><circle cx="16.5" cy="392" r="11" fill="#cfe0f4" stroke="#3a6aa0" stroke-width="0.8"/><ellipse cx="16.5" cy="392" rx="4.95" ry="11" fill="none" stroke="#6a9ad0" stroke-width="0.9"/><path d="M5.5,392h22M7.15,386.5h18.7M7.15,397.5h18.7M16.5,381v22" stroke="#6a9ad0" stroke-width="0.9"/><path d="M11,387l4.800000000000001,10.4l4.800000000000001,-10.4h4.800000000000001" fill="none" stroke="#222" stroke-width="1.3"/><circle cx="11" cy="387" r="1.8" fill="#f0f0f0" stroke="#222" stroke-width="1.1"/><circle cx="15.8" cy="397.4" r="1.8" fill="#f0f0f0" stroke="#222" stroke-width="1.1"/><circle cx="20.6" cy="387" r="1.8" fill="#f0f0f0" stroke="#222" stroke-width="1.1"/><circle cx="25.4" cy="387" r="1.8" fill="#f0f0f0" stroke="#222" stroke-width="1.1"/><rect x="19.5" y="397" width="9.5" height="9.5" rx="1.5" fill="#5a9a5a"/><path d="M24.25,399v5.5M21.5,401.75h5.5" stroke="#fff" stroke-width="1.8"/><path d="M35.5,391.25h8l-4.0,4.5z" fill="#000"/><path d="M11,421c3,-3 8,-2 9,2c1,4 -2,8 -8,11l-1,-1c3,-2 5,-4 5,-6c-3,0 -6,-3 -5,-6z" fill="#3a6aa0"/><rect x="19.5" y="430.5" width="9.5" height="9.5" rx="1.5" fill="#5a9a5a"/><path d="M24.25,432.5v5.5M21.5,435.25h5.5" stroke="#fff" stroke-width="1.8"/><rect x="6" y="451" width="22" height="21" rx="2" fill="#b8cce4" stroke="#7a9ac0" stroke-width="0.9"/><path d="M10,455l5.1,11.049999999999999l5.1,-11.049999999999999h5.1" fill="none" stroke="#3a5a7a" stroke-width="1.3"/><circle cx="10" cy="455" r="1.8" fill="#f0f0f0" stroke="#3a5a7a" stroke-width="1.1"/><circle cx="15.1" cy="466.05" r="1.8" fill="#f0f0f0" stroke="#3a5a7a" stroke-width="1.1"/><circle cx="20.2" cy="455" r="1.8" fill="#f0f0f0" stroke="#3a5a7a" stroke-width="1.1"/><circle cx="25.299999999999997" cy="455" r="1.8" fill="#f0f0f0" stroke="#3a5a7a" stroke-width="1.1"/><rect x="19.5" y="464.5" width="9.5" height="9.5" rx="1.5" fill="#5a9a5a"/><path d="M24.25,466.5v5.5M21.5,469.25h5.5" stroke="#fff" stroke-width="1.8"/><path d="M7,486l6.0,13.0l6.0,-13.0h6.0" fill="none" stroke="#3a5a7a" stroke-width="1.3"/><circle cx="7" cy="486" r="1.8" fill="#f0f0f0" stroke="#3a5a7a" stroke-width="1.1"/><circle cx="13.0" cy="499.0" r="1.8" fill="#f0f0f0" stroke="#3a5a7a" stroke-width="1.1"/><circle cx="19.0" cy="486" r="1.8" fill="#f0f0f0" stroke="#3a5a7a" stroke-width="1.1"/><circle cx="25.0" cy="486" r="1.8" fill="#f0f0f0" stroke="#3a5a7a" stroke-width="1.1"/><rect x="19.5" y="498.5" width="9.5" height="9.5" rx="1" fill="#e0b020"/><path d="M24.25,500.5v5.5M21.5,503.25h5.5M22.3,501.3l3.9,3.9M26.2,501.3l-3.9,3.9" stroke="#fff" stroke-width="0.9"/><path d="M35.5,492.75h8l-4.0,4.5z" fill="#000"/><rect x="5" y="523" width="2" height="2" fill="#bdbdbd"/><rect x="6" y="524" width="1" height="1" fill="#fff"/><rect x="7" y="525" width="2" height="2" fill="#bdbdbd"/><rect x="8" y="526" width="1" height="1" fill="#fff"/><rect x="11" y="523" width="2" height="2" fill="#bdbdbd"/><rect x="12" y="524" width="1" height="1" fill="#fff"/><rect x="13" y="525" width="2" height="2" fill="#bdbdbd"/><rect x="14" y="526" width="1" height="1" fill="#fff"/><rect x="17" y="523" width="2" height="2" fill="#bdbdbd"/><rect x="18" y="524" width="1" height="1" fill="#fff"/><rect x="19" y="525" width="2" height="2" fill="#bdbdbd"/><rect x="20" y="526" width="1" height="1" fill="#fff"/><rect x="23" y="523" width="2" height="2" fill="#bdbdbd"/><rect x="24" y="524" width="1" height="1" fill="#fff"/><rect x="25" y="525" width="2" height="2" fill="#bdbdbd"/><rect x="26" y="526" width="1" height="1" fill="#fff"/><rect x="29" y="523" width="2" height="2" fill="#bdbdbd"/><rect x="30" y="524" width="1" height="1" fill="#fff"/><rect x="31" y="525" width="2" height="2" fill="#bdbdbd"/><rect x="32" y="526" width="1" height="1" fill="#fff"/><rect x="35" y="523" width="2" height="2" fill="#bdbdbd"/><rect x="36" y="524" width="1" height="1" fill="#fff"/><rect x="37" y="525" width="2" height="2" fill="#bdbdbd"/><rect x="38" y="526" width="1" height="1" fill="#fff"/><rect x="41" y="523" width="2" height="2" fill="#bdbdbd"/><rect x="42" y="524" width="1" height="1" fill="#fff"/><rect x="43" y="525" width="2" height="2" fill="#bdbdbd"/><rect x="44" y="526" width="1" height="1" fill="#fff"/><rect x="53" y="170" width="2" height="2" fill="#bdbdbd"/><rect x="54" y="171" width="1" height="1" fill="#fff"/><rect x="55" y="172" width="2" height="2" fill="#bdbdbd"/><rect x="56" y="173" width="1" height="1" fill="#fff"/><rect x="59" y="170" width="2" height="2" fill="#bdbdbd"/><rect x="60" y="171" width="1" height="1" fill="#fff"/><rect x="61" y="172" width="2" height="2" fill="#bdbdbd"/><rect x="62" y="173" width="1" height="1" fill="#fff"/><rect x="65" y="170" width="2" height="2" fill="#bdbdbd"/><rect x="66" y="171" width="1" height="1" fill="#fff"/><rect x="67" y="172" width="2" height="2" fill="#bdbdbd"/><rect x="68" y="173" width="1" height="1" fill="#fff"/><rect x="71" y="170" width="2" height="2" fill="#bdbdbd"/><rect x="72" y="171" width="1" height="1" fill="#fff"/><rect x="73" y="172" width="2" height="2" fill="#bdbdbd"/><rect x="74" y="173" width="1" height="1" fill="#fff"/><rect x="77" y="170" width="2" height="2" fill="#bdbdbd"/><rect x="78" y="171" width="1" height="1" fill="#fff"/><rect x="79" y="172" width="2" height="2" fill="#bdbdbd"/><rect x="80" y="173" width="1" height="1" fill="#fff"/><rect x="83" y="170" width="2" height="2" fill="#bdbdbd"/><rect x="84" y="171" width="1" height="1" fill="#fff"/><rect x="85" y="172" width="2" height="2" fill="#bdbdbd"/><rect x="86" y="173" width="1" height="1" fill="#fff"/><rect x="89" y="170" width="2" height="2" fill="#bdbdbd"/><rect x="90" y="171" width="1" height="1" fill="#fff"/><rect x="91" y="172" width="2" height="2" fill="#bdbdbd"/><rect x="92" y="173" width="1" height="1" fill="#fff"/><rect x="95" y="170" width="2" height="2" fill="#bdbdbd"/><rect x="96" y="171" width="1" height="1" fill="#fff"/><rect x="97" y="172" width="2" height="2" fill="#bdbdbd"/><rect x="98" y="173" width="1" height="1" fill="#fff"/><rect x="101" y="170" width="2" height="2" fill="#bdbdbd"/><rect x="102" y="171" width="1" height="1" fill="#fff"/><rect x="103" y="172" width="2" height="2" fill="#bdbdbd"/><rect x="104" y="173" width="1" height="1" fill="#fff"/><rect x="107" y="170" width="2" height="2" fill="#bdbdbd"/><rect x="108" y="171" width="1" height="1" fill="#fff"/><rect x="109" y="172" width="2" height="2" fill="#bdbdbd"/><rect x="110" y="173" width="1" height="1" fill="#fff"/><rect x="113" y="170" width="2" height="2" fill="#bdbdbd"/><rect x="114" y="171" width="1" height="1" fill="#fff"/><rect x="115" y="172" width="2" height="2" fill="#bdbdbd"/><rect x="116" y="173" width="1" height="1" fill="#fff"/><rect x="119" y="170" width="2" height="2" fill="#bdbdbd"/><rect x="120" y="171" width="1" height="1" fill="#fff"/><rect x="121" y="172" width="2" height="2" fill="#bdbdbd"/><rect x="122" y="173" width="1" height="1" fill="#fff"/><rect x="125" y="170" width="2" height="2" fill="#bdbdbd"/><rect x="126" y="171" width="1" height="1" fill="#fff"/><rect x="127" y="172" width="2" height="2" fill="#bdbdbd"/><rect x="128" y="173" width="1" height="1" fill="#fff"/><rect x="131" y="170" width="2" height="2" fill="#bdbdbd"/><rect x="132" y="171" width="1" height="1" fill="#fff"/><rect x="133" y="172" width="2" height="2" fill="#bdbdbd"/><rect x="134" y="173" width="1" height="1" fill="#fff"/><rect x="137" y="170" width="2" height="2" fill="#bdbdbd"/><rect x="138" y="171" width="1" height="1" fill="#fff"/><rect x="139" y="172" width="2" height="2" fill="#bdbdbd"/><rect x="140" y="173" width="1" height="1" fill="#fff"/><rect x="143" y="170" width="2" height="2" fill="#bdbdbd"/><rect x="144" y="171" width="1" height="1" fill="#fff"/><rect x="145" y="172" width="2" height="2" fill="#bdbdbd"/><rect x="146" y="173" width="1" height="1" fill="#fff"/><rect x="149" y="170" width="2" height="2" fill="#bdbdbd"/><rect x="150" y="171" width="1" height="1" fill="#fff"/><rect x="151" y="172" width="2" height="2" fill="#bdbdbd"/><rect x="152" y="173" width="1" height="1" fill="#fff"/><rect x="155" y="170" width="2" height="2" fill="#bdbdbd"/><rect x="156" y="171" width="1" height="1" fill="#fff"/><rect x="157" y="172" width="2" height="2" fill="#bdbdbd"/><rect x="158" y="173" width="1" height="1" fill="#fff"/><rect x="237" y="170" width="2" height="2" fill="#bdbdbd"/><rect x="238" y="171" width="1" height="1" fill="#fff"/><rect x="239" y="172" width="2" height="2" fill="#bdbdbd"/><rect x="240" y="173" width="1" height="1" fill="#fff"/><rect x="243" y="170" width="2" height="2" fill="#bdbdbd"/><rect x="244" y="171" width="1" height="1" fill="#fff"/><rect x="245" y="172" width="2" height="2" fill="#bdbdbd"/><rect x="246" y="173" width="1" height="1" fill="#fff"/><rect x="249" y="170" width="2" height="2" fill="#bdbdbd"/><rect x="250" y="171" width="1" height="1" fill="#fff"/><rect x="251" y="172" width="2" height="2" fill="#bdbdbd"/><rect x="252" y="173" width="1" height="1" fill="#fff"/><rect x="255" y="170" width="2" height="2" fill="#bdbdbd"/><rect x="256" y="171" width="1" height="1" fill="#fff"/><rect x="257" y="172" width="2" height="2" fill="#bdbdbd"/><rect x="258" y="173" width="1" height="1" fill="#fff"/><rect x="261" y="170" width="2" height="2" fill="#bdbdbd"/><rect x="262" y="171" width="1" height="1" fill="#fff"/><rect x="263" y="172" width="2" height="2" fill="#bdbdbd"/><rect x="264" y="173" width="1" height="1" fill="#fff"/><rect x="267" y="170" width="2" height="2" fill="#bdbdbd"/><rect x="268" y="171" width="1" height="1" fill="#fff"/><rect x="269" y="172" width="2" height="2" fill="#bdbdbd"/><rect x="270" y="173" width="1" height="1" fill="#fff"/><rect x="273" y="170" width="2" height="2" fill="#bdbdbd"/><rect x="274" y="171" width="1" height="1" fill="#fff"/><rect x="275" y="172" width="2" height="2" fill="#bdbdbd"/><rect x="276" y="173" width="1" height="1" fill="#fff"/><rect x="279" y="170" width="2" height="2" fill="#bdbdbd"/><rect x="280" y="171" width="1" height="1" fill="#fff"/><rect x="281" y="172" width="2" height="2" fill="#bdbdbd"/><rect x="282" y="173" width="1" height="1" fill="#fff"/><rect x="285" y="170" width="2" height="2" fill="#bdbdbd"/><rect x="286" y="171" width="1" height="1" fill="#fff"/><rect x="287" y="172" width="2" height="2" fill="#bdbdbd"/><rect x="288" y="173" width="1" height="1" fill="#fff"/><rect x="291" y="170" width="2" height="2" fill="#bdbdbd"/><rect x="292" y="171" width="1" height="1" fill="#fff"/><rect x="293" y="172" width="2" height="2" fill="#bdbdbd"/><rect x="294" y="173" width="1" height="1" fill="#fff"/><rect x="297" y="170" width="2" height="2" fill="#bdbdbd"/><rect x="298" y="171" width="1" height="1" fill="#fff"/><rect x="299" y="172" width="2" height="2" fill="#bdbdbd"/><rect x="300" y="173" width="1" height="1" fill="#fff"/><rect x="303" y="170" width="2" height="2" fill="#bdbdbd"/><rect x="304" y="171" width="1" height="1" fill="#fff"/><rect x="305" y="172" width="2" height="2" fill="#bdbdbd"/><rect x="306" y="173" width="1" height="1" fill="#fff"/><rect x="309" y="170" width="2" height="2" fill="#bdbdbd"/><rect x="310" y="171" width="1" height="1" fill="#fff"/><rect x="311" y="172" width="2" height="2" fill="#bdbdbd"/><rect x="312" y="173" width="1" height="1" fill="#fff"/><rect x="315" y="170" width="2" height="2" fill="#bdbdbd"/><rect x="316" y="171" width="1" height="1" fill="#fff"/><rect x="317" y="172" width="2" height="2" fill="#bdbdbd"/><rect x="318" y="173" width="1" height="1" fill="#fff"/><rect x="321" y="170" width="2" height="2" fill="#bdbdbd"/><rect x="322" y="171" width="1" height="1" fill="#fff"/><rect x="323" y="172" width="2" height="2" fill="#bdbdbd"/><rect x="324" y="173" width="1" height="1" fill="#fff"/><rect x="327" y="170" width="2" height="2" fill="#bdbdbd"/><rect x="328" y="171" width="1" height="1" fill="#fff"/><rect x="329" y="172" width="2" height="2" fill="#bdbdbd"/><rect x="330" y="173" width="1" height="1" fill="#fff"/><rect x="333" y="170" width="2" height="2" fill="#bdbdbd"/><rect x="334" y="171" width="1" height="1" fill="#fff"/><rect x="335" y="172" width="2" height="2" fill="#bdbdbd"/><rect x="336" y="173" width="1" height="1" fill="#fff"/><rect x="339" y="170" width="2" height="2" fill="#bdbdbd"/><rect x="340" y="171" width="1" height="1" fill="#fff"/><rect x="341" y="172" width="2" height="2" fill="#bdbdbd"/><rect x="342" y="173" width="1" height="1" fill="#fff"/><rect x="342.5" y="164.5" width="13" height="13" rx="2.5" fill="#f4f4f4" stroke="#888"/><rect x="346" y="169" width="5" height="5" fill="none" stroke="#000" stroke-width="1.4"/><path d="M348,169v-2h5v5h-2" fill="none" stroke="#000" stroke-width="1.2"/><rect x="357.5" y="164.5" width="13" height="13" rx="2.5" fill="#f4f4f4" stroke="#888"/><path d="M360.5,167.5l7,7M367.5,167.5l-7,7" stroke="#000" stroke-width="1.4"/><rect x="58.5" y="190.5" width="11" height="11" fill="#f4f4f4" stroke="#777"/><circle cx="69" cy="202" r="3" fill="#5a9a5a"/><circle cx="69" cy="202" r="1.3" fill="#cfe"/><path d="M86,197c0,-5 6,-7 10,-4l2,-2v6h-6l2,-2c-3,-2 -6,-1 -6,2z M98,197c0,5 -6,7 -10,4l-2,2v-6h6l-2,2c3,2 6,1 6,-2z" fill="#4a8ad0"/><path d="M112,190h14l-5,7v7l-4,1v-8z" fill="#5b8ac5"/><rect x="112" y="190" width="14" height="2" fill="#f0d040"/><path d="M141,190v14M141,194h3M141,201h3" stroke="#888" stroke-width="0.8"/><rect x="143" y="193" width="3" height="3" fill="#f08020"/><rect x="143" y="200" width="3" height="3" fill="#f08020"/><path d="M150,205v-10h-3l5,-6l5,6h-3v10z" fill="#4a7ab0"/><circle cx="173" cy="197.5" r="7" fill="#5b8ac5"/><text x="171" y="202" font-size="10" font-style="italic" font-weight="bold" fill="#fff" font-family="Liberation Serif">i</text><path d="M61.5,227V495" stroke="#999" stroke-dasharray="1 1"/><rect x="56.5" y="218.5" width="8" height="8" rx="1" fill="#fff" stroke="#888"/><path d="M58.5,222.5h4" stroke="#444"/><path d="M60.5,220.5v4" stroke="#444"/><path d="M66,223.5H72" stroke="#999" stroke-dasharray="1 1"/><rect x="56.5" y="234.5" width="8" height="8" rx="1" fill="#fff" stroke="#888"/><path d="M58.5,238.5h4" stroke="#444"/><path d="M60.5,236.5v4" stroke="#444"/><path d="M66,239.5H72" stroke="#999" stroke-dasharray="1 1"/><path d="M62,255.5H72" stroke="#999" stroke-dasharray="1 1"/><rect x="56.5" y="266.5" width="8" height="8" rx="1" fill="#fff" stroke="#888"/><path d="M58.5,270.5h4" stroke="#444"/><path d="M60.5,268.5v4" stroke="#444"/><path d="M66,271.5H72" stroke="#999" stroke-dasharray="1 1"/><rect x="56.5" y="282.5" width="8" height="8" rx="1" fill="#fff" stroke="#888"/><path d="M58.5,286.5h4" stroke="#444"/><path d="M60.5,284.5v4" stroke="#444"/><path d="M66,287.5H72" stroke="#999" stroke-dasharray="1 1"/><rect x="56.5" y="298.5" width="8" height="8" rx="1" fill="#fff" stroke="#888"/><path d="M58.5,302.5h4" stroke="#444"/><path d="M60.5,300.5v4" stroke="#444"/><path d="M66,303.5H72" stroke="#999" stroke-dasharray="1 1"/><path d="M62,319.5H72" stroke="#999" stroke-dasharray="1 1"/><path d="M62,335.5H72" stroke="#999" stroke-dasharray="1 1"/><path d="M62,351.5H72" stroke="#999" stroke-dasharray="1 1"/><path d="M62,367.5H72" stroke="#999" stroke-dasharray="1 1"/><path d="M62,383.5H72" stroke="#999" stroke-dasharray="1 1"/><path d="M62,399.5H72" stroke="#999" stroke-dasharray="1 1"/><path d="M62,415.5H72" stroke="#999" stroke-dasharray="1 1"/><path d="M62,431.5H72" stroke="#999" stroke-dasharray="1 1"/><path d="M62,447.5H72" stroke="#999" stroke-dasharray="1 1"/><path d="M62,463.5H72" stroke="#999" stroke-dasharray="1 1"/><path d="M62,479.5H72" stroke="#999" stroke-dasharray="1 1"/><path d="M62,495.5H72" stroke="#999" stroke-dasharray="1 1"/><path d="M62,495.5H72" stroke="#999" stroke-dasharray="1 1"/><rect x="76.5" y="215.5" width="12" height="15" fill="#fce89a" stroke="#e8c24a"/><rect x="86.5" y="224.5" width="2" height="6" fill="#fce89a" stroke="#e8c24a" stroke-width="0.8"/><rect x="76.5" y="231.5" width="12" height="15" fill="#fce89a" stroke="#e8c24a"/><rect x="86.5" y="240.5" width="2" height="6" fill="#fce89a" stroke="#e8c24a" stroke-width="0.8"/><rect x="76.5" y="263.5" width="12" height="15" fill="#fce89a" stroke="#e8c24a"/><rect x="86.5" y="272.5" width="2" height="6" fill="#fce89a" stroke="#e8c24a" stroke-width="0.8"/><rect x="76.5" y="279.5" width="12" height="15" fill="#fce89a" stroke="#e8c24a"/><rect x="86.5" y="288.5" width="2" height="6" fill="#fce89a" stroke="#e8c24a" stroke-width="0.8"/><rect x="76.5" y="295.5" width="12" height="15" fill="#fce89a" stroke="#e8c24a"/><rect x="86.5" y="304.5" width="2" height="6" fill="#fce89a" stroke="#e8c24a" stroke-width="0.8"/><path d="M82,248l2.2,4.6l5,0.6l-3.7,3.4l1,5l-4.5,-2.5l-4.5,2.5l1,-5l-3.7,-3.4l5,-0.6z" fill="#eeeee4" stroke="#a8b098" stroke-width="0.9"/><rect x="74" y="311" width="15.5" height="15.5" rx="3" fill="#5b8ac5"/><text x="75" y="321.5" font-size="6" fill="#fff" font-family="Liberation Sans">DB2</text><path d="M74,329c5,0 12,3 15,6c-3,2 -9,5 -15,7c2,-4 2,-9 0,-13z" fill="#5b8ac5" stroke="#3a6aa0" stroke-width="0.8"/><rect x="74.5" y="345.5" width="15" height="11" rx="4" fill="#5b8ac5" stroke="#223a5a" stroke-width="1.2"/><path d="M74,366c0,-4 3,-6 8,-6c4,0 7,2 7,6c0,3 -2,4 -4,5v3c0,1 -2,1 -3,0v-3h-2v2c0,1 -2,1 -2,0v-2c-3,-1 -4,-3 -4,-5z" fill="#5b8ac5" stroke="#3a6aa0" stroke-width="0.8"/><path d="M75,390c2,-6 7,-12 14,-14c-2,4 -5,9 -9,11c-2,1 -4,2 -5,3z" fill="#6a9ad0" stroke="#2a4a70" stroke-width="0.7"/><circle cx="82" cy="399.5" r="7.5" fill="#dbe8f8" stroke="#3a6aa0" stroke-width="0.8"/><ellipse cx="82" cy="399.5" rx="3.375" ry="7.5" fill="none" stroke="#8ab0e0" stroke-width="0.9"/><path d="M74.5,399.5h15.0M75.625,395.75h12.75M75.625,403.25h12.75M82,392.0v15.0" stroke="#8ab0e0" stroke-width="0.9"/><circle cx="77.5" cy="403.5" r="3.5" fill="#2a8a3a"/><circle cx="77" cy="403" r="1.5" fill="#3a6ad0"/><circle cx="82" cy="415.5" r="7.5" fill="#aac4e4" stroke="#3a6aa0" stroke-width="0.8"/><ellipse cx="82" cy="415.5" rx="3.375" ry="7.5" fill="none" stroke="#dbe8f8" stroke-width="0.9"/><path d="M74.5,415.5h15.0M75.625,411.75h12.75M75.625,419.25h12.75M82,408.0v15.0" stroke="#dbe8f8" stroke-width="0.9"/><circle cx="77.5" cy="419.5" r="3.5" fill="#2a8a3a"/><circle cx="77" cy="419" r="1.5" fill="#3a6ad0"/><circle cx="82" cy="431.5" r="7.5" fill="#e8f0fa" stroke="#3a6aa0" stroke-width="0.8"/><ellipse cx="82" cy="431.5" rx="3.375" ry="7.5" fill="none" stroke="#8ab0e0" stroke-width="0.9"/><path d="M74.5,431.5h15.0M75.625,427.75h12.75M75.625,435.25h12.75M82,424.0v15.0" stroke="#8ab0e0" stroke-width="0.9"/><circle cx="82" cy="447.5" r="7.5" fill="#8ab0dd" stroke="#3a6aa0" stroke-width="0.8"/><ellipse cx="82" cy="447.5" rx="3.375" ry="7.5" fill="none" stroke="#dbe8f8" stroke-width="0.9"/><path d="M74.5,447.5h15.0M75.625,443.75h12.75M75.625,451.25h12.75M82,440.0v15.0" stroke="#dbe8f8" stroke-width="0.9"/><circle cx="82" cy="463.5" r="7.5" fill="#2a4a78" stroke="#3a6aa0" stroke-width="0.8"/><ellipse cx="82" cy="463.5" rx="3.375" ry="7.5" fill="none" stroke="#dbe8f8" stroke-width="0.9"/><path d="M74.5,463.5h15.0M75.625,459.75h12.75M75.625,467.25h12.75M82,456.0v15.0" stroke="#dbe8f8" stroke-width="0.9"/><circle cx="82" cy="479.5" r="7.5" fill="#e8f0fa" stroke="#3a6aa0" stroke-width="0.8"/><ellipse cx="82" cy="479.5" rx="3.375" ry="7.5" fill="none" stroke="#8ab0e0" stroke-width="0.9"/><path d="M74.5,479.5h15.0M75.625,475.75h12.75M75.625,483.25h12.75M82,472.0v15.0" stroke="#8ab0e0" stroke-width="0.9"/><path d="M78,475l4,8l4,-8" stroke="#333" fill="none" stroke-width="1"/><circle cx="82" cy="495.5" r="7.5" fill="#8ab0dd" stroke="#3a6aa0" stroke-width="0.8"/><ellipse cx="82" cy="495.5" rx="3.375" ry="7.5" fill="none" stroke="#dbe8f8" stroke-width="0.9"/><path d="M74.5,495.5h15.0M75.625,491.75h12.75M75.625,499.25h12.75M82,488.0v15.0" stroke="#dbe8f8" stroke-width="0.9"/><rect x="157" y="564" width="2" height="2" fill="#bdbdbd"/><rect x="158" y="565" width="1" height="1" fill="#fff"/><rect x="159" y="566" width="2" height="2" fill="#bdbdbd"/><rect x="160" y="567" width="1" height="1" fill="#fff"/><rect x="163" y="564" width="2" height="2" fill="#bdbdbd"/><rect x="164" y="565" width="1" height="1" fill="#fff"/><rect x="165" y="566" width="2" height="2" fill="#bdbdbd"/><rect x="166" y="567" width="1" height="1" fill="#fff"/><rect x="169" y="564" width="2" height="2" fill="#bdbdbd"/><rect x="170" y="565" width="1" height="1" fill="#fff"/><rect x="171" y="566" width="2" height="2" fill="#bdbdbd"/><rect x="172" y="567" width="1" height="1" fill="#fff"/><rect x="175" y="564" width="2" height="2" fill="#bdbdbd"/><rect x="176" y="565" width="1" height="1" fill="#fff"/><rect x="177" y="566" width="2" height="2" fill="#bdbdbd"/><rect x="178" y="567" width="1" height="1" fill="#fff"/><rect x="181" y="564" width="2" height="2" fill="#bdbdbd"/><rect x="182" y="565" width="1" height="1" fill="#fff"/><rect x="183" y="566" width="2" height="2" fill="#bdbdbd"/><rect x="184" y="567" width="1" height="1" fill="#fff"/><rect x="187" y="564" width="2" height="2" fill="#bdbdbd"/><rect x="188" y="565" width="1" height="1" fill="#fff"/><rect x="189" y="566" width="2" height="2" fill="#bdbdbd"/><rect x="190" y="567" width="1" height="1" fill="#fff"/><rect x="193" y="564" width="2" height="2" fill="#bdbdbd"/><rect x="194" y="565" width="1" height="1" fill="#fff"/><rect x="195" y="566" width="2" height="2" fill="#bdbdbd"/><rect x="196" y="567" width="1" height="1" fill="#fff"/><rect x="199" y="564" width="2" height="2" fill="#bdbdbd"/><rect x="200" y="565" width="1" height="1" fill="#fff"/><rect x="201" y="566" width="2" height="2" fill="#bdbdbd"/><rect x="202" y="567" width="1" height="1" fill="#fff"/><rect x="205" y="564" width="2" height="2" fill="#bdbdbd"/><rect x="206" y="565" width="1" height="1" fill="#fff"/><rect x="207" y="566" width="2" height="2" fill="#bdbdbd"/><rect x="208" y="567" width="1" height="1" fill="#fff"/><rect x="211" y="564" width="2" height="2" fill="#bdbdbd"/><rect x="212" y="565" width="1" height="1" fill="#fff"/><rect x="213" y="566" width="2" height="2" fill="#bdbdbd"/><rect x="214" y="567" width="1" height="1" fill="#fff"/><rect x="217" y="564" width="2" height="2" fill="#bdbdbd"/><rect x="218" y="565" width="1" height="1" fill="#fff"/><rect x="219" y="566" width="2" height="2" fill="#bdbdbd"/><rect x="220" y="567" width="1" height="1" fill="#fff"/><rect x="223" y="564" width="2" height="2" fill="#bdbdbd"/><rect x="224" y="565" width="1" height="1" fill="#fff"/><rect x="225" y="566" width="2" height="2" fill="#bdbdbd"/><rect x="226" y="567" width="1" height="1" fill="#fff"/><rect x="229" y="564" width="2" height="2" fill="#bdbdbd"/><rect x="230" y="565" width="1" height="1" fill="#fff"/><rect x="231" y="566" width="2" height="2" fill="#bdbdbd"/><rect x="232" y="567" width="1" height="1" fill="#fff"/><rect x="235" y="564" width="2" height="2" fill="#bdbdbd"/><rect x="236" y="565" width="1" height="1" fill="#fff"/><rect x="237" y="566" width="2" height="2" fill="#bdbdbd"/><rect x="238" y="567" width="1" height="1" fill="#fff"/><rect x="241" y="564" width="2" height="2" fill="#bdbdbd"/><rect x="242" y="565" width="1" height="1" fill="#fff"/><rect x="243" y="566" width="2" height="2" fill="#bdbdbd"/><rect x="244" y="567" width="1" height="1" fill="#fff"/><rect x="247" y="564" width="2" height="2" fill="#bdbdbd"/><rect x="248" y="565" width="1" height="1" fill="#fff"/><rect x="249" y="566" width="2" height="2" fill="#bdbdbd"/><rect x="250" y="567" width="1" height="1" fill="#fff"/><rect x="253" y="564" width="2" height="2" fill="#bdbdbd"/><rect x="254" y="565" width="1" height="1" fill="#fff"/><rect x="255" y="566" width="2" height="2" fill="#bdbdbd"/><rect x="256" y="567" width="1" height="1" fill="#fff"/><rect x="373" y="434" width="2" height="2" fill="#c8c8c8"/><rect x="374" y="435" width="1" height="1" fill="#fff"/><rect x="374" y="437" width="2" height="2" fill="#c8c8c8"/><rect x="375" y="438" width="1" height="1" fill="#fff"/><rect x="373" y="440" width="2" height="2" fill="#c8c8c8"/><rect x="374" y="441" width="1" height="1" fill="#fff"/><rect x="374" y="443" width="2" height="2" fill="#c8c8c8"/><rect x="375" y="444" width="1" height="1" fill="#fff"/><rect x="373" y="446" width="2" height="2" fill="#c8c8c8"/><rect x="374" y="447" width="1" height="1" fill="#fff"/><rect x="374" y="449" width="2" height="2" fill="#c8c8c8"/><rect x="375" y="450" width="1" height="1" fill="#fff"/><rect x="373" y="452" width="2" height="2" fill="#c8c8c8"/><rect x="374" y="453" width="1" height="1" fill="#fff"/><rect x="374" y="455" width="2" height="2" fill="#c8c8c8"/><rect x="375" y="456" width="1" height="1" fill="#fff"/><rect x="373" y="458" width="2" height="2" fill="#c8c8c8"/><rect x="374" y="459" width="1" height="1" fill="#fff"/><rect x="374" y="461" width="2" height="2" fill="#c8c8c8"/><rect x="375" y="462" width="1" height="1" fill="#fff"/><rect x="373" y="464" width="2" height="2" fill="#c8c8c8"/><rect x="374" y="465" width="1" height="1" fill="#fff"/><rect x="374" y="467" width="2" height="2" fill="#c8c8c8"/><rect x="375" y="468" width="1" height="1" fill="#fff"/><rect x="373" y="470" width="2" height="2" fill="#c8c8c8"/><rect x="374" y="471" width="1" height="1" fill="#fff"/><rect x="374" y="473" width="2" height="2" fill="#c8c8c8"/><rect x="375" y="474" width="1" height="1" fill="#fff"/><rect x="373" y="476" width="2" height="2" fill="#c8c8c8"/><rect x="374" y="477" width="1" height="1" fill="#fff"/><rect x="374" y="479" width="2" height="2" fill="#c8c8c8"/><rect x="375" y="480" width="1" height="1" fill="#fff"/><rect x="373" y="482" width="2" height="2" fill="#c8c8c8"/><rect x="374" y="483" width="1" height="1" fill="#fff"/><rect x="374" y="485" width="2" height="2" fill="#c8c8c8"/><rect x="375" y="486" width="1" height="1" fill="#fff"/><rect x="373" y="488" width="2" height="2" fill="#c8c8c8"/><rect x="374" y="489" width="1" height="1" fill="#fff"/><rect x="374" y="491" width="2" height="2" fill="#c8c8c8"/><rect x="375" y="492" width="1" height="1" fill="#fff"/><rect x="373" y="494" width="2" height="2" fill="#c8c8c8"/><rect x="374" y="495" width="1" height="1" fill="#fff"/><rect x="374" y="497" width="2" height="2" fill="#c8c8c8"/><rect x="375" y="498" width="1" height="1" fill="#fff"/><rect x="373" y="500" width="2" height="2" fill="#c8c8c8"/><rect x="374" y="501" width="1" height="1" fill="#fff"/><rect x="374" y="503" width="2" height="2" fill="#c8c8c8"/><rect x="375" y="504" width="1" height="1" fill="#fff"/><rect x="373" y="506" width="2" height="2" fill="#c8c8c8"/><rect x="374" y="507" width="1" height="1" fill="#fff"/><rect x="374" y="509" width="2" height="2" fill="#c8c8c8"/><rect x="375" y="510" width="1" height="1" fill="#fff"/><rect x="373" y="512" width="2" height="2" fill="#c8c8c8"/><rect x="374" y="513" width="1" height="1" fill="#fff"/><rect x="374" y="515" width="2" height="2" fill="#c8c8c8"/><rect x="375" y="516" width="1" height="1" fill="#fff"/><rect x="373" y="518" width="2" height="2" fill="#c8c8c8"/><rect x="374" y="519" width="1" height="1" fill="#fff"/><rect x="374" y="521" width="2" height="2" fill="#c8c8c8"/><rect x="375" y="522" width="1" height="1" fill="#fff"/><rect x="373" y="524" width="2" height="2" fill="#c8c8c8"/><rect x="374" y="525" width="1" height="1" fill="#fff"/><rect x="374" y="527" width="2" height="2" fill="#c8c8c8"/><rect x="375" y="528" width="1" height="1" fill="#fff"/><rect x="373" y="530" width="2" height="2" fill="#c8c8c8"/><rect x="374" y="531" width="1" height="1" fill="#fff"/><rect x="374" y="533" width="2" height="2" fill="#c8c8c8"/><rect x="375" y="534" width="1" height="1" fill="#fff"/><rect x="373" y="536" width="2" height="2" fill="#c8c8c8"/><rect x="374" y="537" width="1" height="1" fill="#fff"/><rect x="374" y="539" width="2" height="2" fill="#c8c8c8"/><rect x="375" y="540" width="1" height="1" fill="#fff"/><rect x="373" y="542" width="2" height="2" fill="#c8c8c8"/><rect x="374" y="543" width="1" height="1" fill="#fff"/><rect x="374" y="545" width="2" height="2" fill="#c8c8c8"/><rect x="375" y="546" width="1" height="1" fill="#fff"/><rect x="373" y="548" width="2" height="2" fill="#c8c8c8"/><rect x="374" y="549" width="1" height="1" fill="#fff"/><rect x="374" y="551" width="2" height="2" fill="#c8c8c8"/><rect x="375" y="552" width="1" height="1" fill="#fff"/><rect x="373" y="554" width="2" height="2" fill="#c8c8c8"/><rect x="374" y="555" width="1" height="1" fill="#fff"/><rect x="374" y="557" width="2" height="2" fill="#c8c8c8"/><rect x="375" y="558" width="1" height="1" fill="#fff"/><rect x="373" y="560" width="2" height="2" fill="#c8c8c8"/><rect x="374" y="561" width="1" height="1" fill="#fff"/><rect x="53" y="577" width="2" height="2" fill="#bdbdbd"/><rect x="54" y="578" width="1" height="1" fill="#fff"/><rect x="55" y="579" width="2" height="2" fill="#bdbdbd"/><rect x="56" y="580" width="1" height="1" fill="#fff"/><rect x="59" y="577" width="2" height="2" fill="#bdbdbd"/><rect x="60" y="578" width="1" height="1" fill="#fff"/><rect x="61" y="579" width="2" height="2" fill="#bdbdbd"/><rect x="62" y="580" width="1" height="1" fill="#fff"/><rect x="65" y="577" width="2" height="2" fill="#bdbdbd"/><rect x="66" y="578" width="1" height="1" fill="#fff"/><rect x="67" y="579" width="2" height="2" fill="#bdbdbd"/><rect x="68" y="580" width="1" height="1" fill="#fff"/><rect x="71" y="577" width="2" height="2" fill="#bdbdbd"/><rect x="72" y="578" width="1" height="1" fill="#fff"/><rect x="73" y="579" width="2" height="2" fill="#bdbdbd"/><rect x="74" y="580" width="1" height="1" fill="#fff"/><rect x="77" y="577" width="2" height="2" fill="#bdbdbd"/><rect x="78" y="578" width="1" height="1" fill="#fff"/><rect x="79" y="579" width="2" height="2" fill="#bdbdbd"/><rect x="80" y="580" width="1" height="1" fill="#fff"/><rect x="83" y="577" width="2" height="2" fill="#bdbdbd"/><rect x="84" y="578" width="1" height="1" fill="#fff"/><rect x="85" y="579" width="2" height="2" fill="#bdbdbd"/><rect x="86" y="580" width="1" height="1" fill="#fff"/><rect x="89" y="577" width="2" height="2" fill="#bdbdbd"/><rect x="90" y="578" width="1" height="1" fill="#fff"/><rect x="91" y="579" width="2" height="2" fill="#bdbdbd"/><rect x="92" y="580" width="1" height="1" fill="#fff"/><rect x="95" y="577" width="2" height="2" fill="#bdbdbd"/><rect x="96" y="578" width="1" height="1" fill="#fff"/><rect x="97" y="579" width="2" height="2" fill="#bdbdbd"/><rect x="98" y="580" width="1" height="1" fill="#fff"/><rect x="101" y="577" width="2" height="2" fill="#bdbdbd"/><rect x="102" y="578" width="1" height="1" fill="#fff"/><rect x="103" y="579" width="2" height="2" fill="#bdbdbd"/><rect x="104" y="580" width="1" height="1" fill="#fff"/><rect x="107" y="577" width="2" height="2" fill="#bdbdbd"/><rect x="108" y="578" width="1" height="1" fill="#fff"/><rect x="109" y="579" width="2" height="2" fill="#bdbdbd"/><rect x="110" y="580" width="1" height="1" fill="#fff"/><rect x="113" y="577" width="2" height="2" fill="#bdbdbd"/><rect x="114" y="578" width="1" height="1" fill="#fff"/><rect x="115" y="579" width="2" height="2" fill="#bdbdbd"/><rect x="116" y="580" width="1" height="1" fill="#fff"/><rect x="119" y="577" width="2" height="2" fill="#bdbdbd"/><rect x="120" y="578" width="1" height="1" fill="#fff"/><rect x="121" y="579" width="2" height="2" fill="#bdbdbd"/><rect x="122" y="580" width="1" height="1" fill="#fff"/><rect x="125" y="577" width="2" height="2" fill="#bdbdbd"/><rect x="126" y="578" width="1" height="1" fill="#fff"/><rect x="127" y="579" width="2" height="2" fill="#bdbdbd"/><rect x="128" y="580" width="1" height="1" fill="#fff"/><rect x="131" y="577" width="2" height="2" fill="#bdbdbd"/><rect x="132" y="578" width="1" height="1" fill="#fff"/><rect x="133" y="579" width="2" height="2" fill="#bdbdbd"/><rect x="134" y="580" width="1" height="1" fill="#fff"/><rect x="137" y="577" width="2" height="2" fill="#bdbdbd"/><rect x="138" y="578" width="1" height="1" fill="#fff"/><rect x="139" y="579" width="2" height="2" fill="#bdbdbd"/><rect x="140" y="580" width="1" height="1" fill="#fff"/><rect x="143" y="577" width="2" height="2" fill="#bdbdbd"/><rect x="144" y="578" width="1" height="1" fill="#fff"/><rect x="145" y="579" width="2" height="2" fill="#bdbdbd"/><rect x="146" y="580" width="1" height="1" fill="#fff"/><rect x="149" y="577" width="2" height="2" fill="#bdbdbd"/><rect x="150" y="578" width="1" height="1" fill="#fff"/><rect x="151" y="579" width="2" height="2" fill="#bdbdbd"/><rect x="152" y="580" width="1" height="1" fill="#fff"/><rect x="155" y="577" width="2" height="2" fill="#bdbdbd"/><rect x="156" y="578" width="1" height="1" fill="#fff"/><rect x="157" y="579" width="2" height="2" fill="#bdbdbd"/><rect x="158" y="580" width="1" height="1" fill="#fff"/><rect x="237" y="577" width="2" height="2" fill="#bdbdbd"/><rect x="238" y="578" width="1" height="1" fill="#fff"/><rect x="239" y="579" width="2" height="2" fill="#bdbdbd"/><rect x="240" y="580" width="1" height="1" fill="#fff"/><rect x="243" y="577" width="2" height="2" fill="#bdbdbd"/><rect x="244" y="578" width="1" height="1" fill="#fff"/><rect x="245" y="579" width="2" height="2" fill="#bdbdbd"/><rect x="246" y="580" width="1" height="1" fill="#fff"/><rect x="249" y="577" width="2" height="2" fill="#bdbdbd"/><rect x="250" y="578" width="1" height="1" fill="#fff"/><rect x="251" y="579" width="2" height="2" fill="#bdbdbd"/><rect x="252" y="580" width="1" height="1" fill="#fff"/><rect x="255" y="577" width="2" height="2" fill="#bdbdbd"/><rect x="256" y="578" width="1" height="1" fill="#fff"/><rect x="257" y="579" width="2" height="2" fill="#bdbdbd"/><rect x="258" y="580" width="1" height="1" fill="#fff"/><rect x="261" y="577" width="2" height="2" fill="#bdbdbd"/><rect x="262" y="578" width="1" height="1" fill="#fff"/><rect x="263" y="579" width="2" height="2" fill="#bdbdbd"/><rect x="264" y="580" width="1" height="1" fill="#fff"/><rect x="267" y="577" width="2" height="2" fill="#bdbdbd"/><rect x="268" y="578" width="1" height="1" fill="#fff"/><rect x="269" y="579" width="2" height="2" fill="#bdbdbd"/><rect x="270" y="580" width="1" height="1" fill="#fff"/><rect x="273" y="577" width="2" height="2" fill="#bdbdbd"/><rect x="274" y="578" width="1" height="1" fill="#fff"/><rect x="275" y="579" width="2" height="2" fill="#bdbdbd"/><rect x="276" y="580" width="1" height="1" fill="#fff"/><rect x="279" y="577" width="2" height="2" fill="#bdbdbd"/><rect x="280" y="578" width="1" height="1" fill="#fff"/><rect x="281" y="579" width="2" height="2" fill="#bdbdbd"/><rect x="282" y="580" width="1" height="1" fill="#fff"/><rect x="285" y="577" width="2" height="2" fill="#bdbdbd"/><rect x="286" y="578" width="1" height="1" fill="#fff"/><rect x="287" y="579" width="2" height="2" fill="#bdbdbd"/><rect x="288" y="580" width="1" height="1" fill="#fff"/><rect x="291" y="577" width="2" height="2" fill="#bdbdbd"/><rect x="292" y="578" width="1" height="1" fill="#fff"/><rect x="293" y="579" width="2" height="2" fill="#bdbdbd"/><rect x="294" y="580" width="1" height="1" fill="#fff"/><rect x="297" y="577" width="2" height="2" fill="#bdbdbd"/><rect x="298" y="578" width="1" height="1" fill="#fff"/><rect x="299" y="579" width="2" height="2" fill="#bdbdbd"/><rect x="300" y="580" width="1" height="1" fill="#fff"/><rect x="303" y="577" width="2" height="2" fill="#bdbdbd"/><rect x="304" y="578" width="1" height="1" fill="#fff"/><rect x="305" y="579" width="2" height="2" fill="#bdbdbd"/><rect x="306" y="580" width="1" height="1" fill="#fff"/><rect x="309" y="577" width="2" height="2" fill="#bdbdbd"/><rect x="310" y="578" width="1" height="1" fill="#fff"/><rect x="311" y="579" width="2" height="2" fill="#bdbdbd"/><rect x="312" y="580" width="1" height="1" fill="#fff"/><rect x="315" y="577" width="2" height="2" fill="#bdbdbd"/><rect x="316" y="578" width="1" height="1" fill="#fff"/><rect x="317" y="579" width="2" height="2" fill="#bdbdbd"/><rect x="318" y="580" width="1" height="1" fill="#fff"/><rect x="321" y="577" width="2" height="2" fill="#bdbdbd"/><rect x="322" y="578" width="1" height="1" fill="#fff"/><rect x="323" y="579" width="2" height="2" fill="#bdbdbd"/><rect x="324" y="580" width="1" height="1" fill="#fff"/><rect x="327" y="577" width="2" height="2" fill="#bdbdbd"/><rect x="328" y="578" width="1" height="1" fill="#fff"/><rect x="329" y="579" width="2" height="2" fill="#bdbdbd"/><rect x="330" y="580" width="1" height="1" fill="#fff"/><rect x="333" y="577" width="2" height="2" fill="#bdbdbd"/><rect x="334" y="578" width="1" height="1" fill="#fff"/><rect x="335" y="579" width="2" height="2" fill="#bdbdbd"/><rect x="336" y="580" width="1" height="1" fill="#fff"/><rect x="339" y="577" width="2" height="2" fill="#bdbdbd"/><rect x="340" y="578" width="1" height="1" fill="#fff"/><rect x="341" y="579" width="2" height="2" fill="#bdbdbd"/><rect x="342" y="580" width="1" height="1" fill="#fff"/><rect x="342.5" y="571.5" width="13" height="13" rx="2.5" fill="#f4f4f4" stroke="#888"/><rect x="346" y="576" width="5" height="5" fill="none" stroke="#000" stroke-width="1.4"/><path d="M348,576v-2h5v5h-2" fill="none" stroke="#000" stroke-width="1.2"/><rect x="357.5" y="571.5" width="13" height="13" rx="2.5" fill="#f4f4f4" stroke="#888"/><path d="M360.5,574.5l7,7M367.5,574.5l-7,7" stroke="#000" stroke-width="1.4"/><path d="M59,606c2,-3 5,-4 8,-2l-2,4c-2,1 -4,0 -6,-2z" fill="#e84030"/><path d="M61,603l4,-3l2,3" fill="#f0c030"/><path d="M65,604l7,-7" stroke="#c89040" stroke-width="2"/><rect x="86.5" y="598.5" width="8" height="11" fill="none" stroke="#888"/><rect x="89.5" y="596.5" width="8" height="11" fill="#f4f4f4" stroke="#888"/><circle cx="97" cy="608" r="3" fill="#5a9a5a"/><path d="M111,603c3,-4 11,-4 14,0c-3,4 -11,4 -14,0z" fill="#dde8f4" stroke="#888" stroke-width="0.8"/><circle cx="118" cy="603" r="2.5" fill="#4a7ab0"/><path d="M123.5,607.5h5l-2.5,3z" fill="#000"/><path d="M139,596h14l-5,7v7l-4,1v-8z" fill="#5b8ac5"/><rect x="139" y="596" width="14" height="2" fill="#f0d040"/><path d="M176,597.5c-2.5,-1.2 -8,-0.8 -8,2.5c0,1.6 1.6,2.8 3.6,2.8c-2.8,0 -4.8,1.2 -4.8,3.2c0,2.8 4.8,3.6 8,1.6" fill="none" stroke="#6a3a8a" stroke-width="1.8"/><rect x="173" y="604" width="8" height="7" rx="1" fill="#bbb"/><path d="M187.5,601.25h8l-4.0,4.5z" fill="#000"/><path d="M206,597v14M206,601h3M206,608h3" stroke="#888" stroke-width="0.8"/><rect x="208" y="600" width="3" height="3" fill="#f08020"/><rect x="208" y="607" width="3" height="3" fill="#f08020"/><path d="M215,597v8h-3l5,6l5,-6h-3v-8z" fill="#4a7ab0"/><path d="M233,597v14M233,601h3M233,608h3" stroke="#888" stroke-width="0.8"/><rect x="235" y="600" width="3" height="3" fill="#f08020"/><rect x="235" y="607" width="3" height="3" fill="#f08020"/><path d="M242,611v-8h-3l5,-6l5,6h-3v8z" fill="#4a7ab0"/><rect x="259.5" y="597.5" width="11" height="11" fill="#f4f4f4" stroke="#777"/><rect x="265" y="606" width="8" height="5" rx="1.5" fill="#e02020"/><path d="M266.5,608.5h5" stroke="#fff" stroke-width="1.2"/><defs><clipPath id="lclip"><rect x="51" y="621" width="302" height="356"/></clipPath></defs><g clip-path="url(#lclip)"><rect x="111.5" y="622.5" width="241" height="15" fill="none" stroke="#f0a030" stroke-dasharray="1 1"/><path d="M61.5,623V977" stroke="#999" stroke-dasharray="1 1"/><path d="M62,630.5H72" stroke="#fff" stroke-dasharray="1 1"/><rect x="75.5" y="625.0" width="11" height="11" rx="1" fill="#fff" stroke="#aaa"/><path d="M77.5,627.0l7,7M84.5,627.0l-7,7" stroke="#000" stroke-width="2.2"/><rect x="93" y="622" width="16" height="16" fill="#2350ec" stroke="#1a3aa0" stroke-width="0.8"/><rect x="56.5" y="641.5" width="8" height="8" rx="1" fill="#fff" stroke="#888"/><path d="M58.5,645.5h4" stroke="#444"/><path d="M66,646.5H72" stroke="#999" stroke-dasharray="1 1"/><rect x="75.5" y="641.0" width="11" height="11" rx="1" fill="#fff" stroke="#aaa"/><path d="M77.5,643.0l7,7M84.5,643.0l-7,7" stroke="#000" stroke-width="2.2"/><rect x="93.00" y="638.00" width="5.4" height="5.4" fill="#2a3a4a"/><rect x="98.33" y="638.00" width="5.4" height="5.4" fill="#6a96c8"/><rect x="103.66" y="638.00" width="5.4" height="5.4" fill="#2a3a4a"/><rect x="93.00" y="643.33" width="5.4" height="5.4" fill="#6a96c8"/><rect x="98.33" y="643.33" width="5.4" height="5.4" fill="#2a3a4a"/><rect x="103.66" y="643.33" width="5.4" height="5.4" fill="#6a96c8"/><rect x="93.00" y="648.66" width="5.4" height="5.4" fill="#2a3a4a"/><rect x="98.33" y="648.66" width="5.4" height="5.4" fill="#6a96c8"/><rect x="103.66" y="648.66" width="5.4" height="5.4" fill="#2a3a4a"/><rect x="94" y="654" width="16" height="16" fill="#000"/><path d="M80.5,652V678" stroke="#999" stroke-dasharray="1 1"/><path d="M81,662.5H91" stroke="#999" stroke-dasharray="1 1"/><path d="M81,678.5H91" stroke="#999" stroke-dasharray="1 1"/><rect x="56.5" y="689.5" width="8" height="8" rx="1" fill="#fff" stroke="#888"/><path d="M58.5,693.5h4" stroke="#444"/><path d="M66,694.5H72" stroke="#999" stroke-dasharray="1 1"/><rect x="75.5" y="689.0" width="11" height="11" rx="1" fill="#f4f4f4" stroke="#aaa"/><rect x="93.00" y="686.00" width="5.4" height="5.4" fill="#2a3a4a"/><rect x="98.33" y="686.00" width="5.4" height="5.4" fill="#6a96c8"/><rect x="103.66" y="686.00" width="5.4" height="5.4" fill="#2a3a4a"/><rect x="93.00" y="691.33" width="5.4" height="5.4" fill="#6a96c8"/><rect x="98.33" y="691.33" width="5.4" height="5.4" fill="#2a3a4a"/><rect x="103.66" y="691.33" width="5.4" height="5.4" fill="#6a96c8"/><rect x="93.00" y="696.66" width="5.4" height="5.4" fill="#2a3a4a"/><rect x="98.33" y="696.66" width="5.4" height="5.4" fill="#6a96c8"/><rect x="103.66" y="696.66" width="5.4" height="5.4" fill="#2a3a4a"/><rect x="94" y="702" width="16" height="16" fill="#000"/><path d="M80.5,700V726" stroke="#999" stroke-dasharray="1 1"/><path d="M81,710.5H91" stroke="#999" stroke-dasharray="1 1"/><path d="M81,726.5H91" stroke="#999" stroke-dasharray="1 1"/><rect x="56.5" y="737.5" width="8" height="8" rx="1" fill="#fff" stroke="#888"/><path d="M58.5,741.5h4" stroke="#444"/><path d="M66,742.5H72" stroke="#999" stroke-dasharray="1 1"/><rect x="75.5" y="737.0" width="11" height="11" rx="1" fill="#f4f4f4" stroke="#aaa"/><rect x="93.00" y="734.00" width="5.4" height="5.4" fill="#2a3a4a"/><rect x="98.33" y="734.00" width="5.4" height="5.4" fill="#6a96c8"/><rect x="103.66" y="734.00" width="5.4" height="5.4" fill="#2a3a4a"/><rect x="93.00" y="739.33" width="5.4" height="5.4" fill="#6a96c8"/><rect x="98.33" y="739.33" width="5.4" height="5.4" fill="#2a3a4a"/><rect x="103.66" y="739.33" width="5.4" height="5.4" fill="#6a96c8"/><rect x="93.00" y="744.66" width="5.4" height="5.4" fill="#2a3a4a"/><rect x="98.33" y="744.66" width="5.4" height="5.4" fill="#6a96c8"/><rect x="103.66" y="744.66" width="5.4" height="5.4" fill="#2a3a4a"/><rect x="94" y="750" width="16" height="16" fill="#000"/><path d="M80.5,748V774" stroke="#999" stroke-dasharray="1 1"/><path d="M81,758.5H91" stroke="#999" stroke-dasharray="1 1"/><path d="M81,774.5H91" stroke="#999" stroke-dasharray="1 1"/><path d="M62,790.5H72" stroke="#999" stroke-dasharray="1 1"/><rect x="75.5" y="785.0" width="11" height="11" rx="1" fill="#f4f4f4" stroke="#aaa"/><rect x="93.5" y="782.5" width="15" height="15" fill="#dccb8a" stroke="#999" stroke-width="0.6"/><path d="M62,806.5H72" stroke="#999" stroke-dasharray="1 1"/><rect x="75.5" y="801.0" width="11" height="11" rx="1" fill="#f4f4f4" stroke="#aaa"/><rect x="93.5" y="798.5" width="15" height="15" fill="#7cc79a" stroke="#999" stroke-width="0.6"/><rect x="56.5" y="817.5" width="8" height="8" rx="1" fill="#fff" stroke="#888"/><path d="M58.5,821.5h4" stroke="#444"/><path d="M66,822.5H72" stroke="#999" stroke-dasharray="1 1"/><rect x="75.5" y="817.0" width="11" height="11" rx="1" fill="#f4f4f4" stroke="#aaa"/><rect x="93.00" y="814.00" width="5.4" height="5.4" fill="#2a3a4a"/><rect x="98.33" y="814.00" width="5.4" height="5.4" fill="#6a96c8"/><rect x="103.66" y="814.00" width="5.4" height="5.4" fill="#2a3a4a"/><rect x="93.00" y="819.33" width="5.4" height="5.4" fill="#6a96c8"/><rect x="98.33" y="819.33" width="5.4" height="5.4" fill="#2a3a4a"/><rect x="103.66" y="819.33" width="5.4" height="5.4" fill="#6a96c8"/><rect x="93.00" y="824.66" width="5.4" height="5.4" fill="#2a3a4a"/><rect x="98.33" y="824.66" width="5.4" height="5.4" fill="#6a96c8"/><rect x="103.66" y="824.66" width="5.4" height="5.4" fill="#2a3a4a"/><rect x="94" y="830" width="16" height="16" fill="#000"/><path d="M80.5,828V854" stroke="#999" stroke-dasharray="1 1"/><path d="M81,838.5H91" stroke="#999" stroke-dasharray="1 1"/><path d="M81,854.5H91" stroke="#999" stroke-dasharray="1 1"/><rect x="56.5" y="865.5" width="8" height="8" rx="1" fill="#fff" stroke="#888"/><path d="M58.5,869.5h4" stroke="#444"/><path d="M66,870.5H72" stroke="#999" stroke-dasharray="1 1"/><rect x="75.5" y="865.0" width="11" height="11" rx="1" fill="#f4f4f4" stroke="#aaa"/><rect x="93.00" y="862.00" width="5.4" height="5.4" fill="#2a3a4a"/><rect x="98.33" y="862.00" width="5.4" height="5.4" fill="#6a96c8"/><rect x="103.66" y="862.00" width="5.4" height="5.4" fill="#2a3a4a"/><rect x="93.00" y="867.33" width="5.4" height="5.4" fill="#6a96c8"/><rect x="98.33" y="867.33" width="5.4" height="5.4" fill="#2a3a4a"/><rect x="103.66" y="867.33" width="5.4" height="5.4" fill="#6a96c8"/><rect x="93.00" y="872.66" width="5.4" height="5.4" fill="#2a3a4a"/><rect x="98.33" y="872.66" width="5.4" height="5.4" fill="#6a96c8"/><rect x="103.66" y="872.66" width="5.4" height="5.4" fill="#2a3a4a"/><rect x="94" y="878" width="16" height="16" fill="#000"/><path d="M80.5,876V902" stroke="#999" stroke-dasharray="1 1"/><path d="M81,886.5H91" stroke="#999" stroke-dasharray="1 1"/><path d="M81,902.5H91" stroke="#999" stroke-dasharray="1 1"/><rect x="56.5" y="913.5" width="8" height="8" rx="1" fill="#fff" stroke="#888"/><path d="M58.5,917.5h4" stroke="#444"/><path d="M66,918.5H72" stroke="#999" stroke-dasharray="1 1"/><rect x="75.5" y="913.0" width="11" height="11" rx="1" fill="#f4f4f4" stroke="#aaa"/><rect x="93.00" y="910.00" width="5.4" height="5.4" fill="#2a3a4a"/><rect x="98.33" y="910.00" width="5.4" height="5.4" fill="#6a96c8"/><rect x="103.66" y="910.00" width="5.4" height="5.4" fill="#2a3a4a"/><rect x="93.00" y="915.33" width="5.4" height="5.4" fill="#6a96c8"/><rect x="98.33" y="915.33" width="5.4" height="5.4" fill="#2a3a4a"/><rect x="103.66" y="915.33" width="5.4" height="5.4" fill="#6a96c8"/><rect x="93.00" y="920.66" width="5.4" height="5.4" fill="#2a3a4a"/><rect x="98.33" y="920.66" width="5.4" height="5.4" fill="#6a96c8"/><rect x="103.66" y="920.66" width="5.4" height="5.4" fill="#2a3a4a"/><rect x="94" y="926" width="16" height="16" fill="#000"/><path d="M80.5,924V950" stroke="#999" stroke-dasharray="1 1"/><path d="M81,934.5H91" stroke="#999" stroke-dasharray="1 1"/><path d="M81,950.5H91" stroke="#999" stroke-dasharray="1 1"/><rect x="56.5" y="961.5" width="8" height="8" rx="1" fill="#fff" stroke="#888"/><path d="M58.5,965.5h4" stroke="#444"/><path d="M66,966.5H72" stroke="#999" stroke-dasharray="1 1"/><rect x="75.5" y="961.0" width="11" height="11" rx="1" fill="#f4f4f4" stroke="#aaa"/><rect x="93.00" y="958.00" width="5.4" height="5.4" fill="#2a3a4a"/><rect x="98.33" y="958.00" width="5.4" height="5.4" fill="#6a96c8"/><rect x="103.66" y="958.00" width="5.4" height="5.4" fill="#2a3a4a"/><rect x="93.00" y="963.33" width="5.4" height="5.4" fill="#6a96c8"/><rect x="98.33" y="963.33" width="5.4" height="5.4" fill="#2a3a4a"/><rect x="103.66" y="963.33" width="5.4" height="5.4" fill="#6a96c8"/><rect x="93.00" y="968.66" width="5.4" height="5.4" fill="#2a3a4a"/><rect x="98.33" y="968.66" width="5.4" height="5.4" fill="#6a96c8"/><rect x="103.66" y="968.66" width="5.4" height="5.4" fill="#2a3a4a"/><rect x="94" y="974" width="16" height="16" fill="#000"/><path d="M80.5,972V998" stroke="#999" stroke-dasharray="1 1"/><path d="M81,982.5H91" stroke="#999" stroke-dasharray="1 1"/><path d="M81,998.5H91" stroke="#999" stroke-dasharray="1 1"/></g><rect x="354" y="622" width="16" height="355" fill="#f4f4f4"/><rect x="354.5" y="622.5" width="15" height="14" rx="2" fill="#f8f8f8" stroke="#aaa"/><path d="M358.5,632h7l-3.5,-4z" fill="#000"/><rect x="354.5" y="636.5" width="15" height="189" rx="2" fill="#ececec" stroke="#999"/><g fill="#bbb"><rect x="358" y="723" width="1" height="1"/><rect x="361" y="723" width="1" height="1"/><rect x="364" y="723" width="1" height="1"/><rect x="358" y="726" width="1" height="1"/><rect x="361" y="726" width="1" height="1"/><rect x="364" y="726" width="1" height="1"/><rect x="358" y="729" width="1" height="1"/><rect x="361" y="729" width="1" height="1"/><rect x="364" y="729" width="1" height="1"/><rect x="358" y="732" width="1" height="1"/><rect x="361" y="732" width="1" height="1"/><rect x="364" y="732" width="1" height="1"/></g><rect x="354.5" y="945.5" width="15" height="15" rx="2" fill="#f8f8f8" stroke="#888"/><path d="M358.5,955.5h7l-3.5,-4z" fill="#000"/><rect x="354.5" y="961" width="15" height="15.5" rx="2" fill="#f8f8f8" stroke="#888"/><path d="M358.5,966.5h7l-3.5,4z" fill="#000"/><rect x="373" y="720" width="2" height="2" fill="#c8c8c8"/><rect x="374" y="721" width="1" height="1" fill="#fff"/><rect x="374" y="723" width="2" height="2" fill="#c8c8c8"/><rect x="375" y="724" width="1" height="1" fill="#fff"/><rect x="373" y="726" width="2" height="2" fill="#c8c8c8"/><rect x="374" y="727" width="1" height="1" fill="#fff"/><rect x="374" y="729" width="2" height="2" fill="#c8c8c8"/><rect x="375" y="730" width="1" height="1" fill="#fff"/><rect x="373" y="732" width="2" height="2" fill="#c8c8c8"/><rect x="374" y="733" width="1" height="1" fill="#fff"/><rect x="374" y="735" width="2" height="2" fill="#c8c8c8"/><rect x="375" y="736" width="1" height="1" fill="#fff"/><rect x="373" y="738" width="2" height="2" fill="#c8c8c8"/><rect x="374" y="739" width="1" height="1" fill="#fff"/><path d="M997,988c2,-3 7,-3 9,0l-1,9c-2,3 -6,3 -8,0z" fill="#ccc" stroke="#333" stroke-width="1.2"/><path d="M999,990l5,6M1005,989l3,-2M1006,993l3,0" stroke="#333" stroke-width="1"/><rect x="1125" y="986" width="15" height="17" fill="#f0f0f0"/><path d="M1125,986v17" stroke="#ccc"/><path d="M1129.5,992.5h7l-3.5,4z" fill="#000"/><path d="M1151,991v-2c0,-4 7,-4 7,0v2" fill="none" stroke="#555" stroke-width="1.6"/><rect x="1149.5" y="991" width="10" height="9" rx="1" fill="#555"/><rect x="1284" y="985" width="15" height="18" fill="#f4f4f4"/><path d="M1283.5,985v18M1284,994h15" stroke="#ccc"/><path d="M1288,990.5h7l-3.5,-4z M1288,997.5h7l-3.5,4z" fill="#000"/><rect x="1419" y="985" width="15" height="18" fill="#f4f4f4"/><path d="M1418.5,985v18M1419,994h15" stroke="#ccc"/><path d="M1423,990.5h7l-3.5,-4z M1423,997.5h7l-3.5,4z" fill="#000"/><rect x="1443.5" y="987.5" width="11" height="11" fill="#fff" stroke="#999"/><path d="M1446,990l6,6M1452,990l-6,6" stroke="#000" stroke-width="2"/><circle cx="1521.5" cy="994" r="6.5" fill="#555" stroke="#222"/><ellipse cx="1521.5" cy="994" rx="3" ry="6.5" fill="none" stroke="#ddd" stroke-width="0.8"/><path d="M1515,994h13M1521.5,987.5v13" stroke="#ddd" stroke-width="0.8"/><path d="M1646,993c0,-3.5 3,-5 7.5,-5c4.5,0 7.5,1.5 7.5,5c0,3.5 -3,5 -7.5,5l-4,3v-3.5c-2,-1 -3.5,-2 -3.5,-4.5z" fill="#555"/><circle cx="1650" cy="993" r="1" fill="#fff"/><circle cx="1653.5" cy="993" r="1" fill="#fff"/><circle cx="1657" cy="993" r="1" fill="#fff"/></svg>
</body></html>
